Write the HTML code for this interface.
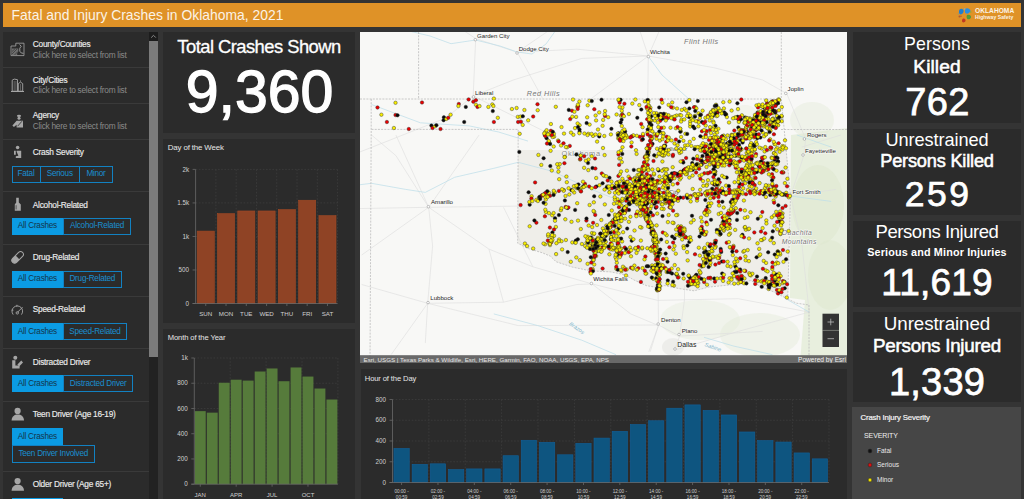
<!DOCTYPE html><html><head><meta charset="utf-8"><style>
html,body{margin:0;padding:0;}
body{width:1024px;height:499px;overflow:hidden;position:relative;background:#343434;font-family:"Liberation Sans", sans-serif;}
.t{position:absolute;white-space:nowrap;}
.r{position:absolute;}
svg{position:absolute;}
.dy{fill:#f7ed00}.dr{fill:#ea0000}.dk{fill:#0a0a0a}
</style></head><body>
<div class="r" style="left:0px;top:0px;width:1024px;height:3px;background:#333333;"></div>
<div class="r" style="left:3px;top:3px;width:1018px;height:24px;background:#df9227;"></div>
<div class="t" style="left:11.60px;top:8.83px;font-size:13.9px;line-height:13.9px;color:#fbf3e6;font-weight:normal;letter-spacing:0px;">Fatal and Injury Crashes in Oklahoma, 2021</div>
<svg style="left:956px;top:6px" width="18" height="18" viewBox="0 0 18 18"><path d="M3 5 C3.5 2.5 6 2 7.5 4 C8 6 7 8 5 8.5 C3.5 8.5 2.5 7 3 5Z" fill="#1e7fd0"/><path d="M9 4 C10 1.5 13 2 14.5 4.5 C14 7 12 8 10 7.5 C9 7 8.8 5.5 9 4Z" fill="#2a8ee0"/><path d="M1.5 7.5 l1.2 0.3 l-0.3 1 z" fill="#3a9ae0"/><path d="M11 9 C13 8 15.5 9.5 15 11.5 C14 13.5 12 14 11 12.5 C10.5 11.5 10.5 10 11 9Z" fill="#4f9a3a"/><path d="M6.5 13 C8 12 10 13 9.5 15 C9 16.5 7 17 6.2 15.8 C5.8 15 6 13.8 6.5 13Z" fill="#c03a22"/><circle cx="3.5" cy="10.5" r="1" fill="#b05a30"/><circle cx="5" cy="10.3" r="0.7" fill="#b05a30"/><circle cx="8.5" cy="3" r="0.8" fill="#6ab0e0"/><circle cx="14.8" cy="6" r="0.8" fill="#7ab040"/></svg>
<div class="t" style="left:975.00px;top:8.21px;font-size:6.6px;line-height:6.6px;color:#fbf3e6;font-weight:bold;letter-spacing:0.05px;">OKLAHOMA</div>
<div class="t" style="left:975.00px;top:14.98px;font-size:5.1px;line-height:5.1px;color:#fbf3e6;font-weight:bold;letter-spacing:0.05px;">Highway Safety</div>
<div class="r" style="left:3px;top:32px;width:155px;height:467px;background:#2b2b2b;"></div>
<div class="r" style="left:163px;top:32px;width:192px;height:101px;background:#2b2b2b;"></div>
<div class="r" style="left:163px;top:139px;width:192px;height:184px;background:#2b2b2b;"></div>
<div class="r" style="left:163px;top:329px;width:192px;height:170px;background:#2b2b2b;"></div>
<div class="r" style="left:361px;top:369px;width:486px;height:130px;background:#2b2b2b;"></div>
<div class="r" style="left:853px;top:32px;width:168px;height:91px;background:#2b2b2b;"></div>
<div class="r" style="left:853px;top:129px;width:168px;height:86px;background:#2b2b2b;"></div>
<div class="r" style="left:853px;top:221px;width:168px;height:86px;background:#2b2b2b;"></div>
<div class="r" style="left:853px;top:312px;width:168px;height:90px;background:#2b2b2b;"></div>
<div class="r" style="left:852px;top:407px;width:169px;height:92px;background:#464646;"></div>
<div class="r" style="left:3px;top:67px;width:146px;height:1px;background:#3a3a3a;"></div>
<div class="r" style="left:3px;top:103px;width:146px;height:1px;background:#3a3a3a;"></div>
<div class="r" style="left:3px;top:139px;width:146px;height:1px;background:#3a3a3a;"></div>
<div class="r" style="left:3px;top:191px;width:146px;height:1px;background:#3a3a3a;"></div>
<div class="r" style="left:3px;top:244px;width:146px;height:1px;background:#3a3a3a;"></div>
<div class="r" style="left:3px;top:296px;width:146px;height:1px;background:#3a3a3a;"></div>
<div class="r" style="left:3px;top:348px;width:146px;height:1px;background:#3a3a3a;"></div>
<div class="r" style="left:3px;top:401px;width:146px;height:1px;background:#3a3a3a;"></div>
<div class="r" style="left:3px;top:471px;width:146px;height:1px;background:#3a3a3a;"></div>
<div class="t" style="left:32.80px;top:40.07px;font-size:8.3px;line-height:8.3px;color:#ececec;font-weight:normal;letter-spacing:-0.25px;font-weight:500;-webkit-text-stroke:0.15px #ececec;">County/Counties</div>
<div class="t" style="left:32.80px;top:50.97px;font-size:8.3px;line-height:8.3px;color:#8a8a8a;font-weight:normal;letter-spacing:-0.26px;">Click here to select from list</div>
<div class="t" style="left:32.80px;top:75.57px;font-size:8.3px;line-height:8.3px;color:#ececec;font-weight:normal;letter-spacing:-0.25px;font-weight:500;-webkit-text-stroke:0.15px #ececec;">City/Cities</div>
<div class="t" style="left:32.80px;top:86.47px;font-size:8.3px;line-height:8.3px;color:#8a8a8a;font-weight:normal;letter-spacing:-0.26px;">Click here to select from list</div>
<div class="t" style="left:32.80px;top:111.47px;font-size:8.3px;line-height:8.3px;color:#ececec;font-weight:normal;letter-spacing:-0.25px;font-weight:500;-webkit-text-stroke:0.15px #ececec;">Agency</div>
<div class="t" style="left:32.80px;top:122.27px;font-size:8.3px;line-height:8.3px;color:#8a8a8a;font-weight:normal;letter-spacing:-0.26px;">Click here to select from list</div>
<div class="t" style="left:32.80px;top:148.27px;font-size:8.3px;line-height:8.3px;color:#ececec;font-weight:normal;letter-spacing:-0.25px;font-weight:500;-webkit-text-stroke:0.15px #ececec;">Crash Severity</div>
<div class="t" style="left:32.80px;top:200.77px;font-size:8.3px;line-height:8.3px;color:#ececec;font-weight:normal;letter-spacing:-0.25px;font-weight:500;-webkit-text-stroke:0.15px #ececec;">Alcohol-Related</div>
<div class="t" style="left:32.80px;top:252.97px;font-size:8.3px;line-height:8.3px;color:#ececec;font-weight:normal;letter-spacing:-0.25px;font-weight:500;-webkit-text-stroke:0.15px #ececec;">Drug-Related</div>
<div class="t" style="left:32.80px;top:305.37px;font-size:8.3px;line-height:8.3px;color:#ececec;font-weight:normal;letter-spacing:-0.25px;font-weight:500;-webkit-text-stroke:0.15px #ececec;">Speed-Related</div>
<div class="t" style="left:32.80px;top:357.87px;font-size:8.3px;line-height:8.3px;color:#ececec;font-weight:normal;letter-spacing:-0.25px;font-weight:500;-webkit-text-stroke:0.15px #ececec;">Distracted Driver</div>
<div class="t" style="left:32.80px;top:410.17px;font-size:8.3px;line-height:8.3px;color:#ececec;font-weight:normal;letter-spacing:-0.25px;font-weight:500;-webkit-text-stroke:0.15px #ececec;">Teen Driver (Age 16-19)</div>
<div class="t" style="left:32.80px;top:480.27px;font-size:8.3px;line-height:8.3px;color:#ececec;font-weight:normal;letter-spacing:-0.25px;font-weight:500;-webkit-text-stroke:0.15px #ececec;">Older Driver (Age 65+)</div>
<div class="r" style="left:11.5px;top:165.6px;width:27.0px;height:15.200000000000017px;border:1px solid #1281c2;"></div>
<div class="t" style="left:-274.00px;width:600px;text-align:center;top:170.16px;font-size:8.2px;line-height:8.2px;color:#1a8fd0;font-weight:normal;letter-spacing:-0.25px;">Fatal</div>
<div class="r" style="left:40px;top:165.6px;width:37.5px;height:15.200000000000017px;border:1px solid #1281c2;"></div>
<div class="t" style="left:-240.25px;width:600px;text-align:center;top:170.16px;font-size:8.2px;line-height:8.2px;color:#1a8fd0;font-weight:normal;letter-spacing:-0.25px;">Serious</div>
<div class="r" style="left:79px;top:165.6px;width:32px;height:15.200000000000017px;border:1px solid #1281c2;"></div>
<div class="t" style="left:-204.00px;width:600px;text-align:center;top:170.16px;font-size:8.2px;line-height:8.2px;color:#1a8fd0;font-weight:normal;letter-spacing:-0.25px;">Minor</div>
<div class="r" style="left:11.5px;top:218px;width:51.8px;height:17px;background:#0b9be3;"></div>
<div class="t" style="left:-262.60px;width:600px;text-align:center;top:222.46px;font-size:8.2px;line-height:8.2px;color:#14354b;font-weight:normal;letter-spacing:-0.25px;">All Crashes</div>
<div class="r" style="left:63px;top:218px;width:66px;height:15px;border:1px solid #1281c2;"></div>
<div class="t" style="left:-203.00px;width:600px;text-align:center;top:222.46px;font-size:8.2px;line-height:8.2px;color:#1a8fd0;font-weight:normal;letter-spacing:-0.25px;">Alcohol-Related</div>
<div class="r" style="left:11.5px;top:270.5px;width:51.8px;height:17.19999999999999px;background:#0b9be3;"></div>
<div class="t" style="left:-262.60px;width:600px;text-align:center;top:275.06px;font-size:8.2px;line-height:8.2px;color:#14354b;font-weight:normal;letter-spacing:-0.25px;">All Crashes</div>
<div class="r" style="left:63px;top:270.5px;width:56.599999999999994px;height:15.199999999999989px;border:1px solid #1281c2;"></div>
<div class="t" style="left:-207.70px;width:600px;text-align:center;top:275.06px;font-size:8.2px;line-height:8.2px;color:#1a8fd0;font-weight:normal;letter-spacing:-0.25px;">Drug-Related</div>
<div class="r" style="left:11.5px;top:323.4px;width:51.8px;height:16.400000000000034px;background:#0b9be3;"></div>
<div class="t" style="left:-262.60px;width:600px;text-align:center;top:327.56px;font-size:8.2px;line-height:8.2px;color:#14354b;font-weight:normal;letter-spacing:-0.25px;">All Crashes</div>
<div class="r" style="left:63px;top:323.4px;width:61.900000000000006px;height:14.400000000000034px;border:1px solid #1281c2;"></div>
<div class="t" style="left:-205.05px;width:600px;text-align:center;top:327.56px;font-size:8.2px;line-height:8.2px;color:#1a8fd0;font-weight:normal;letter-spacing:-0.25px;">Speed-Related</div>
<div class="r" style="left:11.5px;top:375.4px;width:51.8px;height:17.0px;background:#0b9be3;"></div>
<div class="t" style="left:-262.60px;width:600px;text-align:center;top:379.86px;font-size:8.2px;line-height:8.2px;color:#14354b;font-weight:normal;letter-spacing:-0.25px;">All Crashes</div>
<div class="r" style="left:63px;top:375.4px;width:68.4px;height:15.0px;border:1px solid #1281c2;"></div>
<div class="t" style="left:-201.80px;width:600px;text-align:center;top:379.86px;font-size:8.2px;line-height:8.2px;color:#1a8fd0;font-weight:normal;letter-spacing:-0.25px;">Distracted Driver</div>
<div class="r" style="left:11.9px;top:428.2px;width:50.800000000000004px;height:16.80000000000001px;background:#0b9be3;"></div>
<div class="t" style="left:-262.70px;width:600px;text-align:center;top:432.56px;font-size:8.2px;line-height:8.2px;color:#14354b;font-weight:normal;letter-spacing:-0.25px;">All Crashes</div>
<div class="r" style="left:11.9px;top:445px;width:80.69999999999999px;height:15.5px;border:1px solid #1281c2;"></div>
<div class="t" style="left:-246.75px;width:600px;text-align:center;top:449.71px;font-size:8.2px;line-height:8.2px;color:#1a8fd0;font-weight:normal;letter-spacing:-0.25px;">Teen Driver Involved</div>
<div class="r" style="left:11.9px;top:497.8px;width:50.800000000000004px;height:17.19999999999999px;background:#0b9be3;"></div>
<div class="t" style="left:-262.70px;width:600px;text-align:center;top:502.36px;font-size:8.2px;line-height:8.2px;color:#14354b;font-weight:normal;letter-spacing:-0.25px;">All Crashes</div>
<div class="r" style="left:149px;top:32px;width:9px;height:467px;background:#222222;"></div>
<div class="r" style="left:149px;top:32px;width:9px;height:9px;background:#1c1c1c;"></div>
<svg style="left:149px;top:32px" width="9" height="9"><path d="M2.2 5.6 L4.5 3.3 L6.8 5.6" stroke="#8a8a8a" stroke-width="1" fill="none"/></svg>
<div class="r" style="left:149px;top:41px;width:9px;height:316px;background:#7b7b7b;"></div>
<svg style="left:0;top:0" width="30" height="499" viewBox="0 0 30 499"><path d="M11 46 H15.8 V43.2 H24 V55.6 H11 Z" fill="none" stroke="#a6a6a6" stroke-width="0.8"/><path d="M12 48.6 H18.3 V51.5 L17.2 53.2 V54.9 H12 Z" fill="#a6a6a6" opacity="0.55"/><path d="M12 54 L17 49 M12 51.5 L15 48.8 M14.5 55 L18 51.5" stroke="#2b2b2b" stroke-width="0.6"/><path d="M19.6 44.5 L21.2 46.3 L19.8 48.2 V51.2 L21.3 53 L23.5 53.3" fill="none" stroke="#a6a6a6" stroke-width="0.9"/><path d="M12.2 91.2 V80.2 L14.2 79.1 L17.5 79.7 V91.2 Z" fill="none" stroke="#a6a6a6" stroke-width="0.9"/><path d="M18.3 91.2 V83.6 L20.5 82.1 L22.7 83.6 V91.2 Z" fill="none" stroke="#a6a6a6" stroke-width="0.9"/><path d="M20.5 80 V82 M14.2 81 V90.5 M15.9 81 V90.5 M20.5 84 V90.5" stroke="#a6a6a6" stroke-width="0.6" opacity="0.7"/><path d="M11 91.5 H24" stroke="#a6a6a6" stroke-width="1"/><ellipse cx="19" cy="115.9" rx="2.1" ry="1.1" fill="#a6a6a6"/><circle cx="19" cy="118.3" r="1.5" fill="#a6a6a6"/><path d="M12.4 125.6 L16.6 120.8 H23 V127.6 H16.6 V124.8 L13.9 127 Z" fill="#a6a6a6"/><path d="M22 121.2 L17.6 126.2" stroke="#2b2b2b" stroke-width="0.8"/><circle cx="17.6" cy="147.5" r="1.8" fill="#a6a6a6"/><path d="M14 150.8 H15.8 V154.8 H14 Z M16.6 150.8 H21.2 V158 H15.8 V156.2 L18.4 155.8 L17.4 153.5 L16.6 151.6 Z" fill="#a6a6a6"/><path d="M16.2 197.8 H18.8 V202.6 L20.8 204.6 V210.8 H14.8 V204.6 L16.2 202.6 Z" fill="#a6a6a6"/><rect x="15.6" y="205.2" width="1" height="4.2" fill="#555"/><g transform="rotate(-45 17.6 257.4)"><rect x="10.6" y="254.6" width="14" height="5.6" rx="2.8" fill="none" stroke="#a6a6a6" stroke-width="1"/><path d="M13.4 254.6 H17.6 V260.2 H13.4 A2.8 2.8 0 0 1 13.4 254.6 Z" fill="#a6a6a6"/></g><path d="M13.2 314.6 A5.3 5.3 0 1 1 21.4 314.6" fill="none" stroke="#a6a6a6" stroke-width="0.9"/><path d="M16.9 304.8 V306.6 M11.6 310.2 H13.4 M17.4 312.4 L22.6 307.2" stroke="#a6a6a6" stroke-width="0.9"/><circle cx="17.3" cy="312.9" r="1.2" fill="none" stroke="#a6a6a6" stroke-width="0.9"/><circle cx="15.3" cy="357.7" r="2" fill="#a6a6a6"/><path d="M12.2 360.2 H15.4 V365.4 H19.6 V368.4 H12.2 Z" fill="#a6a6a6"/><path d="M17.4 364.6 L21.3 360.6 L23 362.4 L19.1 366.4 Z" fill="#a6a6a6"/><circle cx="17.6" cy="410.9" r="3.1" fill="#a6a6a6"/><path d="M11.6 420.6 C11.8 416.4 14.5 414.6 17.8 414.6 C21.1 414.6 23.8 416.4 24 420.6 Z" fill="#a6a6a6"/><circle cx="17.6" cy="481.1" r="3.1" fill="#a6a6a6"/><path d="M11.6 490.8 C11.8 486.6 14.5 484.8 17.8 484.8 C21.1 484.8 23.8 486.6 24 490.8 Z" fill="#a6a6a6"/></svg>
<svg style="left:360px;top:32px" width="487" height="331" viewBox="360 32 487 331"><rect x="360" y="32" width="487" height="331" fill="#f8f8f6"/><path d="M791 135 L847 128 V363 H800 L805 300 L790 298 Z" fill="#e3ecd6" opacity="0.75"/><ellipse cx="818" cy="205" rx="26" ry="40" fill="#dfe8d0" opacity="0.6"/><ellipse cx="830" cy="275" rx="22" ry="35" fill="#dfe8d0" opacity="0.55"/><ellipse cx="812" cy="120" rx="22" ry="18" fill="#dfe8d0" opacity="0.35"/><ellipse cx="775" cy="240" rx="14" ry="40" fill="#dfe8d0" opacity="0.45"/><ellipse cx="700" cy="320" rx="40" ry="20" fill="#dfe8d0" opacity="0.3"/><ellipse cx="760" cy="335" rx="40" ry="22" fill="#dfe8d0" opacity="0.35"/><ellipse cx="745" cy="120" rx="15" ry="15" fill="#dfe8d0" opacity="0.25"/><ellipse cx="673" cy="347" rx="11" ry="9" fill="#e6e6e3" opacity="0.6"/><clipPath id="okc"><rect x="360" y="150" width="500" height="300"/></clipPath><polygon points="371.5,99.0 781.3,99.0 790.5,196.0 787.7,299.0 774.5,292.2 761.3,287.1 751.0,280.5 736.4,284.2 723.2,285.6 708.6,287.1 694.0,290.8 679.3,288.6 664.6,285.6 657.0,287.5 646.3,285.6 634.0,280.0 624.4,274.6 610.7,271.9 597.0,271.2 586.0,269.9 572.4,267.1 556.0,261.7 550.5,256.2 542.3,252.8 528.7,248.7 517.7,243.2 518.2,129.4 371.5,129.4" fill="#efeee9" clip-path="url(#okc)"/><polyline points="322.6,209.1 361.7,208.5 428.7,207.3 518.2,206.1" fill="none" stroke="#dedede" stroke-width="0.65"/><polyline points="428.7,207.3 432.6,246.1 427.7,303.3 425.3,343.1" fill="none" stroke="#dedede" stroke-width="0.65"/><polyline points="395.9,135.0 428.7,207.3 488.9,249.1 532.9,266.8 592.0,283.9 630.7,313.9 658.5,325.6 648.8,351.8" fill="none" stroke="#dedede" stroke-width="0.65"/><polyline points="428.7,207.3 395.9,155.6 371.5,135.0" fill="none" stroke="#dedede" stroke-width="0.65"/><polyline points="356.8,153.2 445.8,118.0 473.2,96.0 513.3,80.0 581.8,58.4 648.3,56.0" fill="none" stroke="#dedede" stroke-width="0.65"/><polyline points="475.7,38.6 517.2,52.2 576.9,49.2 648.3,56.0" fill="none" stroke="#dedede" stroke-width="0.65"/><polyline points="475.7,38.6 473.2,96.0" fill="none" stroke="#dedede" stroke-width="0.65"/><polyline points="664.9,18.1 648.3,56.0 647.8,98.4" fill="none" stroke="#dedede" stroke-width="0.65"/><polyline points="635.6,18.1 648.3,56.0" fill="none" stroke="#dedede" stroke-width="0.65"/><polyline points="648.3,56.0 713.8,67.7 762.7,80.0 786.7,93.5" fill="none" stroke="#dedede" stroke-width="0.65"/><polyline points="427.7,303.3 503.5,302.2 576.9,284.5 592.0,283.9 657.6,300.4 684.5,299.8 738.2,298.7 809.2,312.1" fill="none" stroke="#dedede" stroke-width="0.65"/><polyline points="427.7,303.3 518.2,325.6 658.5,325.0 679.6,336.1 762.7,331.4" fill="none" stroke="#dedede" stroke-width="0.65"/><polyline points="658.1,291.0 658.5,325.0 650.2,351.8" fill="none" stroke="#dedede" stroke-width="0.65"/><polyline points="684.5,285.7 684.5,299.8 679.6,336.1 674.7,350.1" fill="none" stroke="#dedede" stroke-width="0.65"/><polyline points="674.7,350.1 738.2,331.4 809.2,312.1" fill="none" stroke="#dedede" stroke-width="0.65"/><polyline points="786.7,93.5 805.7,139.2 803.8,155.6 790.6,196.0 801.8,243.1 809.2,312.1" fill="none" stroke="#dedede" stroke-width="0.65"/><polyline points="790.6,196.0 836.0,189.4" fill="none" stroke="#dedede" stroke-width="0.65"/><polyline points="801.8,147.1 840.9,135.0" fill="none" stroke="#dedede" stroke-width="0.65"/><polyline points="473.2,96.0 548.0,133.2" fill="none" stroke="#dedede" stroke-width="0.65"/><polyline points="542.6,98.4 517.2,52.2" fill="none" stroke="#dedede" stroke-width="0.65"/><polyline points="591.5,98.4 648.3,56.0" fill="none" stroke="#dedede" stroke-width="0.65"/><polyline points="567.1,18.1 517.2,52.2" fill="none" stroke="#dedede" stroke-width="0.65"/><polyline points="444.9,18.1 475.7,38.6" fill="none" stroke="#dedede" stroke-width="0.65"/><polyline points="427.7,303.3 391.1,354.7" fill="none" stroke="#dedede" stroke-width="0.65"/><polyline points="427.7,303.3 361.7,284.5" fill="none" stroke="#dedede" stroke-width="0.65"/><polyline points="428.7,207.3 361.7,255.0" fill="none" stroke="#dedede" stroke-width="0.65"/><polyline points="488.9,249.1 503.5,302.2" fill="none" stroke="#dedede" stroke-width="0.65"/><polyline points="532.9,266.8 503.5,207.3" fill="none" stroke="#dedede" stroke-width="0.65"/><polyline points="479.1,135.0 428.7,207.3" fill="none" stroke="#dedede" stroke-width="0.65"/><polyline points="405,30 430,36 451,43.7 475.5,40 500,46 517,52 532,54 546,44 556,30" fill="none" stroke="#bfdfea" stroke-width="0.75"/><polyline points="648,56 662,75 690,100 705,125 718,150 745,172" fill="none" stroke="#bfdfea" stroke-width="0.75"/><polyline points="322.6,189.4 371.5,183.3 405.7,189.4 425.3,192.4 454.6,177.3 493.8,168.3 518.2,162.3 552.4,171.3 591.5,189.4 635.6,207.3" fill="none" stroke="#bfdfea" stroke-width="0.75"/><polyline points="371.5,104.5 420.4,122.8 469.3,125.9 498.6,132.0 528.0,141.1" fill="none" stroke="#bfdfea" stroke-width="0.75"/><polyline points="748.0,174.3 782.3,195.4 790.6,196.0 831.2,201.4" fill="none" stroke="#bfdfea" stroke-width="0.75"/><polyline points="493.8,313.9 537.8,325.6 581.8,340.2 616.0,354.7" fill="none" stroke="#bfdfea" stroke-width="0.75"/><polyline points="704.0,337.3 733.4,346.0 772.5,354.7" fill="none" stroke="#bfdfea" stroke-width="0.75"/><polyline points="809.2,312.1 787.6,299.8" fill="none" stroke="#bfdfea" stroke-width="0.75"/><polyline points="796.9,135.0 831.2,147.1" fill="none" stroke="#bfdfea" stroke-width="0.75"/><polyline points="360,99 781,99" stroke="#bdbdbd" stroke-width="0.8" stroke-dasharray="2 1.2" fill="none"/><polyline points="371.2,99 371.2,129.4 370,363" stroke="#bdbdbd" stroke-width="0.8" stroke-dasharray="2 1.2" fill="none"/><polyline points="418.6,32 418.6,99" stroke="#bdbdbd" stroke-width="0.8" stroke-dasharray="2 1.2" fill="none"/><polyline points="371.5,129.4 518.2,129.4 517.7,243.2" stroke="#bdbdbd" stroke-width="0.8" stroke-dasharray="2 1.2" fill="none"/><polyline points="781.3,32 781.3,99 790.5,196 787.7,299" stroke="#bdbdbd" stroke-width="0.8" stroke-dasharray="2 1.2" fill="none"/><polyline points="781,129.5 847,129.5" stroke="#bdbdbd" stroke-width="0.8" stroke-dasharray="2 1.2" fill="none"/><polyline points="787.7,299.0 774.5,292.2 761.3,287.1 751.0,280.5 736.4,284.2 723.2,285.6 708.6,287.1 694.0,290.8 679.3,288.6 664.6,285.6 657.0,287.5 646.3,285.6 634.0,280.0 624.4,274.6 610.7,271.9 597.0,271.2 586.0,269.9 572.4,267.1 556.0,261.7 550.5,256.2 542.3,252.8 528.7,248.7 517.7,243.2" stroke="#bdbdbd" stroke-width="0.8" stroke-dasharray="2 1.2" fill="none"/><polyline points="787.7,299 796.5,303.2 809,305 809,363" stroke="#bdbdbd" stroke-width="0.8" stroke-dasharray="2 1.2" fill="none"/><circle cx="475.3" cy="39.7" r="1.3" fill="#fff" stroke="#999" stroke-width="0.6"/><text x="477" y="37.7" font-size="6.1" fill="#262626" font-family="Liberation Sans"  letter-spacing="0" font-weight="normal" stroke="#f8f8f6" stroke-width="1.2" paint-order="stroke" stroke-linejoin="round">Garden City</text><circle cx="517" cy="53" r="1.3" fill="#fff" stroke="#999" stroke-width="0.6"/><text x="518.7" y="51.0" font-size="6.1" fill="#262626" font-family="Liberation Sans"  letter-spacing="0" font-weight="normal" stroke="#f8f8f6" stroke-width="1.2" paint-order="stroke" stroke-linejoin="round">Dodge City</text><circle cx="473.5" cy="96.9" r="1.3" fill="#fff" stroke="#999" stroke-width="0.6"/><text x="475" y="94.5" font-size="6.1" fill="#262626" font-family="Liberation Sans"  letter-spacing="0" font-weight="normal" stroke="#f8f8f6" stroke-width="1.2" paint-order="stroke" stroke-linejoin="round">Liberal</text><circle cx="648.4" cy="56.6" r="1.3" fill="#fff" stroke="#999" stroke-width="0.6"/><text x="650" y="54.2" font-size="6.1" fill="#262626" font-family="Liberation Sans"  letter-spacing="0" font-weight="normal" stroke="#f8f8f6" stroke-width="1.2" paint-order="stroke" stroke-linejoin="round">Wichita</text><circle cx="785.8" cy="93.4" r="1.3" fill="#fff" stroke="#999" stroke-width="0.6"/><text x="787.6" y="91.4" font-size="6.1" fill="#262626" font-family="Liberation Sans"  letter-spacing="0" font-weight="normal" stroke="#f8f8f6" stroke-width="1.2" paint-order="stroke" stroke-linejoin="round">Joplin</text><circle cx="804.4" cy="139" r="1.3" fill="#fff" stroke="#999" stroke-width="0.6"/><text x="806.9" y="136.9" font-size="6.1" fill="#262626" font-family="Liberation Sans"  letter-spacing="0" font-weight="normal" stroke="#f8f8f6" stroke-width="1.2" paint-order="stroke" stroke-linejoin="round">Rogers</text><circle cx="803" cy="155" r="1.3" fill="#fff" stroke="#999" stroke-width="0.6"/><text x="805" y="153.4" font-size="6.1" fill="#262626" font-family="Liberation Sans"  letter-spacing="0" font-weight="normal" stroke="#f8f8f6" stroke-width="1.2" paint-order="stroke" stroke-linejoin="round">Fayetteville</text><circle cx="790" cy="195" r="1.3" fill="#fff" stroke="#999" stroke-width="0.6"/><text x="792.5" y="193.9" font-size="6.1" fill="#262626" font-family="Liberation Sans"  letter-spacing="0" font-weight="normal" stroke="#f8f8f6" stroke-width="1.2" paint-order="stroke" stroke-linejoin="round">Fort Smith</text><circle cx="428.4" cy="206.7" r="1.3" fill="#fff" stroke="#999" stroke-width="0.6"/><text x="431" y="204.4" font-size="6.1" fill="#262626" font-family="Liberation Sans"  letter-spacing="0" font-weight="normal" stroke="#f8f8f6" stroke-width="1.2" paint-order="stroke" stroke-linejoin="round">Amarillo</text><circle cx="428" cy="302.6" r="1.3" fill="#fff" stroke="#999" stroke-width="0.6"/><text x="430.3" y="299.9" font-size="6.1" fill="#262626" font-family="Liberation Sans"  letter-spacing="0" font-weight="normal" stroke="#f8f8f6" stroke-width="1.2" paint-order="stroke" stroke-linejoin="round">Lubbock</text><circle cx="591.4" cy="283.5" r="1.3" fill="#fff" stroke="#999" stroke-width="0.6"/><text x="593.2" y="281.2" font-size="6.1" fill="#262626" font-family="Liberation Sans"  letter-spacing="0" font-weight="normal" stroke="#f8f8f6" stroke-width="1.2" paint-order="stroke" stroke-linejoin="round">Wichita Falls</text><circle cx="658.2" cy="324" r="1.3" fill="#fff" stroke="#999" stroke-width="0.6"/><text x="661" y="321.6" font-size="6.1" fill="#262626" font-family="Liberation Sans"  letter-spacing="0" font-weight="normal" stroke="#f8f8f6" stroke-width="1.2" paint-order="stroke" stroke-linejoin="round">Denton</text><circle cx="679" cy="334.5" r="1.3" fill="#fff" stroke="#999" stroke-width="0.6"/><text x="681.8" y="333.0" font-size="6.1" fill="#262626" font-family="Liberation Sans"  letter-spacing="0" font-weight="normal" stroke="#f8f8f6" stroke-width="1.2" paint-order="stroke" stroke-linejoin="round">Plano</text><circle cx="675" cy="349" r="1.3" fill="#fff" stroke="#999" stroke-width="0.6"/><text x="677.2" y="347.0" font-size="6.9" fill="#262626" font-family="Liberation Sans"  letter-spacing="0" font-weight="normal" stroke="#f8f8f6" stroke-width="1.2" paint-order="stroke" stroke-linejoin="round">Dallas</text><text x="526.8" y="96.0" font-size="7.2" fill="#777" font-family="Liberation Sans" font-style="italic" letter-spacing="0.5" font-weight="normal" stroke="#f8f8f6" stroke-width="1.2" paint-order="stroke" stroke-linejoin="round">Red Hills</text><text x="684" y="44.1" font-size="7.2" fill="#777" font-family="Liberation Sans" font-style="italic" letter-spacing="0.5" font-weight="normal" stroke="#f8f8f6" stroke-width="1.2" paint-order="stroke" stroke-linejoin="round">Flint Hills</text><text x="781.8" y="235.2" font-size="6.8" fill="#777" font-family="Liberation Sans" font-style="italic" letter-spacing="0.4" font-weight="normal" stroke="#f8f8f6" stroke-width="1.2" paint-order="stroke" stroke-linejoin="round">Ouachita</text><text x="781.8" y="243.6" font-size="6.8" fill="#777" font-family="Liberation Sans" font-style="italic" letter-spacing="0.4" font-weight="normal" stroke="#f8f8f6" stroke-width="1.2" paint-order="stroke" stroke-linejoin="round">Mountains</text><text x="561.5" y="156.2" font-size="7.4" fill="#888" font-family="Liberation Sans"  letter-spacing="0.7" font-weight="normal" stroke="#f8f8f6" stroke-width="1.2" paint-order="stroke" stroke-linejoin="round">Oklahoma</text><text x="663" y="150.9" font-size="6.0" fill="#555" font-family="Liberation Sans"  letter-spacing="0" font-weight="normal" stroke="#f8f8f6" stroke-width="1.2" paint-order="stroke" stroke-linejoin="round">Stillwater</text><text x="640" y="194.2" font-size="6.0" fill="#555" font-family="Liberation Sans"  letter-spacing="0" font-weight="normal" stroke="#f8f8f6" stroke-width="1.2" paint-order="stroke" stroke-linejoin="round">Oklahoma City</text><text x="570" y="325.0" font-size="5.5" fill="#7fb6cc" font-family="Liberation Sans" font-style="italic" letter-spacing="0" font-weight="normal" stroke="#f8f8f6" stroke-width="1.2" paint-order="stroke" stroke-linejoin="round" transform="rotate(35 570 323)">Brazos</text><text x="705" y="346.0" font-size="5.5" fill="#7fb6cc" font-family="Liberation Sans" font-style="italic" letter-spacing="0" font-weight="normal" stroke="#f8f8f6" stroke-width="1.2" paint-order="stroke" stroke-linejoin="round" transform="rotate(20 705 344)">Sabine</text><g stroke="#2a2a2a" stroke-width="0.42"><circle cx="377.5" cy="107.5" r="1.75" class="dr"/><circle cx="381.4" cy="114.7" r="1.75" class="dy"/><circle cx="386.9" cy="122.0" r="1.75" class="dr"/><circle cx="393.9" cy="128.0" r="1.75" class="dy"/><circle cx="395.5" cy="102.8" r="1.75" class="dy"/><circle cx="395.5" cy="115.0" r="1.75" class="dr"/><circle cx="397.5" cy="115.3" r="1.75" class="dk"/><circle cx="408.8" cy="129.0" r="1.75" class="dr"/><circle cx="422.0" cy="102.5" r="1.75" class="dr"/><circle cx="431.4" cy="125.6" r="1.75" class="dk"/><circle cx="432.5" cy="128.0" r="1.75" class="dr"/><circle cx="435.0" cy="126.3" r="1.75" class="dy"/><circle cx="436.4" cy="125.2" r="1.75" class="dk"/><circle cx="440.5" cy="129.0" r="1.75" class="dr"/><circle cx="443.9" cy="117.3" r="1.75" class="dk"/><circle cx="443.6" cy="120.2" r="1.75" class="dk"/><circle cx="446.3" cy="118.9" r="1.75" class="dy"/><circle cx="448.3" cy="117.8" r="1.75" class="dr"/><circle cx="450.6" cy="114.7" r="1.75" class="dy"/><circle cx="458.8" cy="104.0" r="1.75" class="dr"/><circle cx="458.4" cy="106.0" r="1.75" class="dy"/><circle cx="465.8" cy="106.9" r="1.75" class="dk"/><circle cx="464.2" cy="122.0" r="1.75" class="dk"/><circle cx="468.6" cy="99.4" r="1.75" class="dr"/><circle cx="473.3" cy="101.7" r="1.75" class="dr"/><circle cx="475.9" cy="100.2" r="1.75" class="dr"/><circle cx="475.9" cy="104.8" r="1.75" class="dy"/><circle cx="477.5" cy="106.9" r="1.75" class="dr"/><circle cx="479.5" cy="106.1" r="1.75" class="dy"/><circle cx="488.4" cy="106.9" r="1.75" class="dy"/><circle cx="492.3" cy="104.4" r="1.75" class="dy"/><circle cx="493.4" cy="106.0" r="1.75" class="dy"/><circle cx="493.9" cy="98.6" r="1.75" class="dy"/><circle cx="492.8" cy="111.1" r="1.75" class="dk"/><circle cx="497.8" cy="117.8" r="1.75" class="dy"/><circle cx="493.9" cy="122.0" r="1.75" class="dr"/><circle cx="511.9" cy="109.0" r="1.75" class="dy"/><circle cx="516.6" cy="108.0" r="1.75" class="dy"/><circle cx="524.4" cy="110.0" r="1.75" class="dy"/><circle cx="517.8" cy="116.9" r="1.75" class="dy"/><circle cx="520.5" cy="116.6" r="1.75" class="dy"/><circle cx="522.8" cy="116.3" r="1.75" class="dk"/><circle cx="518.1" cy="122.0" r="1.75" class="dr"/><circle cx="520.9" cy="121.7" r="1.75" class="dr"/><circle cx="519.7" cy="133.8" r="1.75" class="dy"/><circle cx="703.2" cy="137.4" r="1.75" class="dy"/><circle cx="621.2" cy="133.1" r="1.75" class="dy"/><circle cx="647.7" cy="129.5" r="1.75" class="dk"/><circle cx="682.7" cy="233.7" r="1.75" class="dy"/><circle cx="686.9" cy="172.1" r="1.75" class="dy"/><circle cx="638.9" cy="196.4" r="1.75" class="dy"/><circle cx="653.7" cy="241.0" r="1.75" class="dy"/><circle cx="777.2" cy="229.3" r="1.75" class="dy"/><circle cx="563.9" cy="190.1" r="1.75" class="dy"/><circle cx="718.4" cy="195.4" r="1.75" class="dr"/><circle cx="617.8" cy="185.1" r="1.75" class="dy"/><circle cx="779.0" cy="273.6" r="1.75" class="dy"/><circle cx="622.5" cy="147.2" r="1.75" class="dy"/><circle cx="618.6" cy="187.0" r="1.75" class="dr"/><circle cx="641.6" cy="183.9" r="1.75" class="dr"/><circle cx="780.3" cy="148.7" r="1.75" class="dy"/><circle cx="640.0" cy="181.8" r="1.75" class="dk"/><circle cx="722.7" cy="154.8" r="1.75" class="dk"/><circle cx="541.3" cy="195.9" r="1.75" class="dr"/><circle cx="555.9" cy="226.9" r="1.75" class="dy"/><circle cx="687.2" cy="168.1" r="1.75" class="dy"/><circle cx="661.9" cy="150.2" r="1.75" class="dy"/><circle cx="651.6" cy="181.1" r="1.75" class="dy"/><circle cx="655.1" cy="248.7" r="1.75" class="dy"/><circle cx="588.3" cy="133.8" r="1.75" class="dy"/><circle cx="714.1" cy="148.7" r="1.75" class="dy"/><circle cx="635.6" cy="192.0" r="1.75" class="dy"/><circle cx="680.8" cy="131.3" r="1.75" class="dy"/><circle cx="641.5" cy="169.2" r="1.75" class="dy"/><circle cx="660.0" cy="271.3" r="1.75" class="dk"/><circle cx="651.5" cy="233.9" r="1.75" class="dy"/><circle cx="638.2" cy="268.3" r="1.75" class="dr"/><circle cx="743.3" cy="251.7" r="1.75" class="dy"/><circle cx="783.0" cy="281.1" r="1.75" class="dr"/><circle cx="644.9" cy="163.3" r="1.75" class="dy"/><circle cx="646.1" cy="198.6" r="1.75" class="dy"/><circle cx="756.6" cy="257.3" r="1.75" class="dk"/><circle cx="720.7" cy="248.9" r="1.75" class="dk"/><circle cx="726.7" cy="177.6" r="1.75" class="dk"/><circle cx="682.8" cy="161.1" r="1.75" class="dr"/><circle cx="746.0" cy="167.3" r="1.75" class="dy"/><circle cx="658.9" cy="273.1" r="1.75" class="dy"/><circle cx="715.7" cy="149.0" r="1.75" class="dy"/><circle cx="705.4" cy="117.8" r="1.75" class="dy"/><circle cx="773.9" cy="134.3" r="1.75" class="dr"/><circle cx="638.8" cy="188.1" r="1.75" class="dy"/><circle cx="724.7" cy="155.7" r="1.75" class="dk"/><circle cx="625.2" cy="207.2" r="1.75" class="dy"/><circle cx="704.1" cy="252.5" r="1.75" class="dk"/><circle cx="658.6" cy="170.4" r="1.75" class="dk"/><circle cx="655.9" cy="184.0" r="1.75" class="dy"/><circle cx="595.6" cy="246.9" r="1.75" class="dy"/><circle cx="686.6" cy="195.9" r="1.75" class="dk"/><circle cx="632.2" cy="199.7" r="1.75" class="dy"/><circle cx="712.3" cy="149.8" r="1.75" class="dk"/><circle cx="747.6" cy="137.1" r="1.75" class="dy"/><circle cx="658.9" cy="281.5" r="1.75" class="dy"/><circle cx="642.1" cy="248.5" r="1.75" class="dy"/><circle cx="645.5" cy="191.4" r="1.75" class="dr"/><circle cx="545.8" cy="132.7" r="1.75" class="dy"/><circle cx="639.4" cy="187.4" r="1.75" class="dy"/><circle cx="721.6" cy="150.9" r="1.75" class="dy"/><circle cx="616.2" cy="186.5" r="1.75" class="dk"/><circle cx="636.9" cy="179.6" r="1.75" class="dr"/><circle cx="738.5" cy="161.8" r="1.75" class="dy"/><circle cx="748.2" cy="134.9" r="1.75" class="dy"/><circle cx="641.7" cy="190.0" r="1.75" class="dy"/><circle cx="763.8" cy="107.3" r="1.75" class="dy"/><circle cx="535.1" cy="182.4" r="1.75" class="dr"/><circle cx="671.9" cy="178.9" r="1.75" class="dy"/><circle cx="743.9" cy="200.5" r="1.75" class="dy"/><circle cx="690.2" cy="121.5" r="1.75" class="dy"/><circle cx="695.2" cy="107.1" r="1.75" class="dy"/><circle cx="756.0" cy="154.1" r="1.75" class="dr"/><circle cx="773.9" cy="153.2" r="1.75" class="dy"/><circle cx="646.1" cy="202.0" r="1.75" class="dr"/><circle cx="761.1" cy="281.4" r="1.75" class="dy"/><circle cx="643.0" cy="202.6" r="1.75" class="dy"/><circle cx="634.8" cy="177.9" r="1.75" class="dy"/><circle cx="592.6" cy="269.0" r="1.75" class="dy"/><circle cx="723.3" cy="147.8" r="1.75" class="dk"/><circle cx="733.9" cy="200.9" r="1.75" class="dr"/><circle cx="660.0" cy="149.9" r="1.75" class="dy"/><circle cx="734.7" cy="271.9" r="1.75" class="dk"/><circle cx="605.1" cy="111.0" r="1.75" class="dy"/><circle cx="618.8" cy="100.4" r="1.75" class="dy"/><circle cx="707.2" cy="192.8" r="1.75" class="dk"/><circle cx="710.0" cy="130.0" r="1.75" class="dr"/><circle cx="760.1" cy="167.6" r="1.75" class="dy"/><circle cx="625.5" cy="135.8" r="1.75" class="dk"/><circle cx="688.4" cy="113.8" r="1.75" class="dy"/><circle cx="740.8" cy="130.1" r="1.75" class="dy"/><circle cx="663.7" cy="192.7" r="1.75" class="dr"/><circle cx="683.5" cy="246.2" r="1.75" class="dy"/><circle cx="654.5" cy="134.1" r="1.75" class="dy"/><circle cx="752.5" cy="180.6" r="1.75" class="dy"/><circle cx="650.4" cy="107.8" r="1.75" class="dy"/><circle cx="609.4" cy="254.3" r="1.75" class="dy"/><circle cx="731.3" cy="278.3" r="1.75" class="dy"/><circle cx="625.3" cy="189.9" r="1.75" class="dy"/><circle cx="765.9" cy="270.5" r="1.75" class="dy"/><circle cx="641.3" cy="180.4" r="1.75" class="dy"/><circle cx="650.6" cy="200.0" r="1.75" class="dk"/><circle cx="723.7" cy="135.6" r="1.75" class="dy"/><circle cx="649.6" cy="109.6" r="1.75" class="dy"/><circle cx="720.0" cy="149.6" r="1.75" class="dk"/><circle cx="782.9" cy="283.1" r="1.75" class="dy"/><circle cx="714.6" cy="180.0" r="1.75" class="dy"/><circle cx="692.7" cy="169.8" r="1.75" class="dk"/><circle cx="662.5" cy="267.7" r="1.75" class="dr"/><circle cx="630.2" cy="191.5" r="1.75" class="dy"/><circle cx="761.5" cy="163.9" r="1.75" class="dy"/><circle cx="655.6" cy="195.4" r="1.75" class="dr"/><circle cx="591.0" cy="237.4" r="1.75" class="dk"/><circle cx="663.2" cy="155.8" r="1.75" class="dy"/><circle cx="700.4" cy="136.3" r="1.75" class="dk"/><circle cx="656.3" cy="198.0" r="1.75" class="dk"/><circle cx="626.7" cy="269.5" r="1.75" class="dy"/><circle cx="659.5" cy="176.6" r="1.75" class="dy"/><circle cx="710.8" cy="278.6" r="1.75" class="dy"/><circle cx="759.6" cy="126.1" r="1.75" class="dy"/><circle cx="774.6" cy="159.8" r="1.75" class="dk"/><circle cx="615.1" cy="219.4" r="1.75" class="dy"/><circle cx="656.2" cy="239.2" r="1.75" class="dr"/><circle cx="676.6" cy="115.5" r="1.75" class="dy"/><circle cx="641.7" cy="187.7" r="1.75" class="dk"/><circle cx="610.9" cy="134.4" r="1.75" class="dy"/><circle cx="644.0" cy="203.9" r="1.75" class="dy"/><circle cx="675.9" cy="128.2" r="1.75" class="dy"/><circle cx="645.4" cy="256.5" r="1.75" class="dr"/><circle cx="596.1" cy="256.0" r="1.75" class="dy"/><circle cx="716.3" cy="149.0" r="1.75" class="dy"/><circle cx="685.1" cy="145.4" r="1.75" class="dy"/><circle cx="602.5" cy="235.2" r="1.75" class="dk"/><circle cx="713.3" cy="121.5" r="1.75" class="dy"/><circle cx="744.4" cy="159.0" r="1.75" class="dy"/><circle cx="777.5" cy="158.1" r="1.75" class="dk"/><circle cx="645.4" cy="186.0" r="1.75" class="dy"/><circle cx="649.4" cy="193.9" r="1.75" class="dy"/><circle cx="780.2" cy="254.5" r="1.75" class="dy"/><circle cx="570.8" cy="261.8" r="1.75" class="dy"/><circle cx="615.7" cy="240.5" r="1.75" class="dy"/><circle cx="719.4" cy="255.5" r="1.75" class="dy"/><circle cx="618.2" cy="134.7" r="1.75" class="dy"/><circle cx="678.4" cy="226.9" r="1.75" class="dy"/><circle cx="648.5" cy="194.7" r="1.75" class="dy"/><circle cx="616.6" cy="248.5" r="1.75" class="dy"/><circle cx="656.8" cy="252.9" r="1.75" class="dk"/><circle cx="779.3" cy="221.5" r="1.75" class="dk"/><circle cx="602.6" cy="268.6" r="1.75" class="dr"/><circle cx="723.9" cy="153.4" r="1.75" class="dr"/><circle cx="646.4" cy="186.5" r="1.75" class="dr"/><circle cx="767.6" cy="118.6" r="1.75" class="dy"/><circle cx="610.7" cy="224.4" r="1.75" class="dy"/><circle cx="633.5" cy="197.5" r="1.75" class="dy"/><circle cx="649.4" cy="121.8" r="1.75" class="dk"/><circle cx="773.3" cy="279.7" r="1.75" class="dr"/><circle cx="754.8" cy="125.5" r="1.75" class="dk"/><circle cx="641.0" cy="182.4" r="1.75" class="dy"/><circle cx="715.6" cy="129.8" r="1.75" class="dr"/><circle cx="656.4" cy="113.2" r="1.75" class="dy"/><circle cx="767.1" cy="103.2" r="1.75" class="dr"/><circle cx="738.3" cy="283.3" r="1.75" class="dy"/><circle cx="546.6" cy="138.2" r="1.75" class="dk"/><circle cx="721.0" cy="150.7" r="1.75" class="dy"/><circle cx="647.0" cy="216.4" r="1.75" class="dy"/><circle cx="723.6" cy="150.8" r="1.75" class="dr"/><circle cx="594.7" cy="243.3" r="1.75" class="dk"/><circle cx="747.5" cy="120.5" r="1.75" class="dr"/><circle cx="584.9" cy="183.8" r="1.75" class="dr"/><circle cx="652.9" cy="215.2" r="1.75" class="dr"/><circle cx="712.9" cy="156.3" r="1.75" class="dk"/><circle cx="725.4" cy="157.2" r="1.75" class="dy"/><circle cx="544.6" cy="193.8" r="1.75" class="dr"/><circle cx="767.4" cy="168.7" r="1.75" class="dk"/><circle cx="642.6" cy="205.0" r="1.75" class="dk"/><circle cx="714.8" cy="157.0" r="1.75" class="dy"/><circle cx="645.5" cy="218.0" r="1.75" class="dr"/><circle cx="683.3" cy="162.6" r="1.75" class="dk"/><circle cx="717.1" cy="132.6" r="1.75" class="dy"/><circle cx="657.8" cy="258.6" r="1.75" class="dy"/><circle cx="659.0" cy="279.4" r="1.75" class="dy"/><circle cx="713.3" cy="154.9" r="1.75" class="dy"/><circle cx="755.0" cy="119.1" r="1.75" class="dy"/><circle cx="589.6" cy="205.0" r="1.75" class="dy"/><circle cx="718.4" cy="128.7" r="1.75" class="dy"/><circle cx="643.2" cy="205.0" r="1.75" class="dk"/><circle cx="642.1" cy="183.7" r="1.75" class="dk"/><circle cx="642.9" cy="135.8" r="1.75" class="dr"/><circle cx="698.7" cy="165.6" r="1.75" class="dy"/><circle cx="701.7" cy="226.7" r="1.75" class="dr"/><circle cx="561.1" cy="145.5" r="1.75" class="dy"/><circle cx="663.6" cy="196.6" r="1.75" class="dy"/><circle cx="643.3" cy="201.3" r="1.75" class="dr"/><circle cx="738.0" cy="109.1" r="1.75" class="dy"/><circle cx="658.1" cy="269.5" r="1.75" class="dr"/><circle cx="673.5" cy="249.6" r="1.75" class="dy"/><circle cx="723.8" cy="150.2" r="1.75" class="dr"/><circle cx="717.2" cy="191.0" r="1.75" class="dy"/><circle cx="718.7" cy="156.6" r="1.75" class="dy"/><circle cx="721.5" cy="143.6" r="1.75" class="dr"/><circle cx="678.3" cy="226.4" r="1.75" class="dy"/><circle cx="710.6" cy="113.2" r="1.75" class="dy"/><circle cx="641.3" cy="193.5" r="1.75" class="dk"/><circle cx="772.9" cy="162.5" r="1.75" class="dy"/><circle cx="781.7" cy="116.5" r="1.75" class="dy"/><circle cx="657.3" cy="290.4" r="1.75" class="dy"/><circle cx="772.8" cy="283.6" r="1.75" class="dr"/><circle cx="778.0" cy="119.4" r="1.75" class="dy"/><circle cx="552.9" cy="236.0" r="1.75" class="dy"/><circle cx="765.2" cy="113.4" r="1.75" class="dk"/><circle cx="623.9" cy="191.2" r="1.75" class="dr"/><circle cx="643.4" cy="200.0" r="1.75" class="dy"/><circle cx="757.7" cy="112.4" r="1.75" class="dk"/><circle cx="632.5" cy="189.8" r="1.75" class="dy"/><circle cx="705.4" cy="234.6" r="1.75" class="dr"/><circle cx="680.3" cy="233.9" r="1.75" class="dy"/><circle cx="654.4" cy="245.7" r="1.75" class="dy"/><circle cx="631.3" cy="146.5" r="1.75" class="dr"/><circle cx="742.4" cy="234.8" r="1.75" class="dk"/><circle cx="593.0" cy="240.6" r="1.75" class="dk"/><circle cx="760.5" cy="171.0" r="1.75" class="dy"/><circle cx="744.3" cy="250.9" r="1.75" class="dy"/><circle cx="727.6" cy="261.8" r="1.75" class="dy"/><circle cx="722.1" cy="165.4" r="1.75" class="dy"/><circle cx="601.0" cy="251.6" r="1.75" class="dy"/><circle cx="617.0" cy="190.5" r="1.75" class="dr"/><circle cx="610.9" cy="239.3" r="1.75" class="dk"/><circle cx="761.6" cy="172.6" r="1.75" class="dr"/><circle cx="690.3" cy="284.5" r="1.75" class="dk"/><circle cx="586.6" cy="242.6" r="1.75" class="dy"/><circle cx="653.7" cy="180.3" r="1.75" class="dy"/><circle cx="726.2" cy="156.0" r="1.75" class="dy"/><circle cx="734.8" cy="265.0" r="1.75" class="dy"/><circle cx="788.7" cy="197.3" r="1.75" class="dy"/><circle cx="594.2" cy="211.9" r="1.75" class="dy"/><circle cx="666.4" cy="118.9" r="1.75" class="dy"/><circle cx="639.2" cy="202.6" r="1.75" class="dy"/><circle cx="701.0" cy="217.6" r="1.75" class="dy"/><circle cx="658.0" cy="202.1" r="1.75" class="dr"/><circle cx="772.1" cy="237.7" r="1.75" class="dk"/><circle cx="642.2" cy="247.7" r="1.75" class="dy"/><circle cx="684.9" cy="172.5" r="1.75" class="dy"/><circle cx="726.7" cy="160.7" r="1.75" class="dy"/><circle cx="760.8" cy="117.9" r="1.75" class="dk"/><circle cx="648.3" cy="193.7" r="1.75" class="dy"/><circle cx="783.3" cy="172.6" r="1.75" class="dr"/><circle cx="732.6" cy="273.4" r="1.75" class="dy"/><circle cx="738.9" cy="156.0" r="1.75" class="dy"/><circle cx="651.9" cy="190.2" r="1.75" class="dr"/><circle cx="646.0" cy="190.2" r="1.75" class="dy"/><circle cx="750.3" cy="161.1" r="1.75" class="dy"/><circle cx="723.4" cy="153.9" r="1.75" class="dy"/><circle cx="750.8" cy="275.4" r="1.75" class="dy"/><circle cx="632.6" cy="136.2" r="1.75" class="dr"/><circle cx="572.3" cy="242.4" r="1.75" class="dy"/><circle cx="565.3" cy="219.3" r="1.75" class="dy"/><circle cx="619.3" cy="213.1" r="1.75" class="dy"/><circle cx="768.4" cy="119.1" r="1.75" class="dy"/><circle cx="728.8" cy="210.9" r="1.75" class="dy"/><circle cx="734.1" cy="144.4" r="1.75" class="dy"/><circle cx="763.3" cy="118.2" r="1.75" class="dr"/><circle cx="715.9" cy="150.2" r="1.75" class="dr"/><circle cx="771.2" cy="103.1" r="1.75" class="dk"/><circle cx="773.4" cy="189.6" r="1.75" class="dr"/><circle cx="721.2" cy="149.9" r="1.75" class="dy"/><circle cx="781.0" cy="223.9" r="1.75" class="dy"/><circle cx="719.1" cy="151.0" r="1.75" class="dy"/><circle cx="642.5" cy="194.0" r="1.75" class="dy"/><circle cx="596.5" cy="247.3" r="1.75" class="dy"/><circle cx="640.4" cy="183.7" r="1.75" class="dr"/><circle cx="717.3" cy="160.1" r="1.75" class="dy"/><circle cx="723.4" cy="225.8" r="1.75" class="dy"/><circle cx="594.2" cy="251.4" r="1.75" class="dy"/><circle cx="769.8" cy="124.7" r="1.75" class="dr"/><circle cx="648.6" cy="151.2" r="1.75" class="dy"/><circle cx="717.6" cy="153.9" r="1.75" class="dr"/><circle cx="777.0" cy="289.9" r="1.75" class="dr"/><circle cx="707.3" cy="253.6" r="1.75" class="dy"/><circle cx="719.5" cy="147.0" r="1.75" class="dr"/><circle cx="643.6" cy="209.7" r="1.75" class="dk"/><circle cx="712.2" cy="154.7" r="1.75" class="dy"/><circle cx="657.8" cy="285.1" r="1.75" class="dk"/><circle cx="773.5" cy="120.4" r="1.75" class="dr"/><circle cx="694.2" cy="279.7" r="1.75" class="dy"/><circle cx="716.0" cy="104.7" r="1.75" class="dy"/><circle cx="737.4" cy="163.0" r="1.75" class="dy"/><circle cx="760.4" cy="137.6" r="1.75" class="dk"/><circle cx="636.9" cy="269.7" r="1.75" class="dy"/><circle cx="683.5" cy="232.0" r="1.75" class="dy"/><circle cx="786.1" cy="259.2" r="1.75" class="dk"/><circle cx="569.8" cy="145.9" r="1.75" class="dr"/><circle cx="645.1" cy="201.9" r="1.75" class="dk"/><circle cx="648.9" cy="185.8" r="1.75" class="dy"/><circle cx="658.9" cy="267.6" r="1.75" class="dr"/><circle cx="549.2" cy="241.5" r="1.75" class="dy"/><circle cx="721.5" cy="159.3" r="1.75" class="dr"/><circle cx="683.2" cy="197.7" r="1.75" class="dr"/><circle cx="669.4" cy="247.2" r="1.75" class="dr"/><circle cx="776.9" cy="100.9" r="1.75" class="dr"/><circle cx="760.9" cy="119.6" r="1.75" class="dy"/><circle cx="617.0" cy="219.1" r="1.75" class="dk"/><circle cx="739.7" cy="183.8" r="1.75" class="dk"/><circle cx="640.0" cy="190.3" r="1.75" class="dk"/><circle cx="755.9" cy="193.1" r="1.75" class="dy"/><circle cx="650.4" cy="136.3" r="1.75" class="dr"/><circle cx="746.3" cy="127.6" r="1.75" class="dy"/><circle cx="712.8" cy="147.0" r="1.75" class="dk"/><circle cx="711.7" cy="149.9" r="1.75" class="dk"/><circle cx="734.1" cy="276.1" r="1.75" class="dy"/><circle cx="717.6" cy="110.6" r="1.75" class="dy"/><circle cx="663.5" cy="179.8" r="1.75" class="dy"/><circle cx="730.3" cy="247.4" r="1.75" class="dy"/><circle cx="645.8" cy="187.7" r="1.75" class="dk"/><circle cx="657.5" cy="197.6" r="1.75" class="dy"/><circle cx="672.7" cy="167.2" r="1.75" class="dy"/><circle cx="724.0" cy="154.8" r="1.75" class="dr"/><circle cx="773.5" cy="122.3" r="1.75" class="dy"/><circle cx="726.6" cy="221.2" r="1.75" class="dr"/><circle cx="723.8" cy="150.4" r="1.75" class="dy"/><circle cx="768.7" cy="115.0" r="1.75" class="dy"/><circle cx="651.3" cy="190.1" r="1.75" class="dr"/><circle cx="690.2" cy="126.5" r="1.75" class="dy"/><circle cx="751.4" cy="191.1" r="1.75" class="dy"/><circle cx="600.5" cy="242.9" r="1.75" class="dy"/><circle cx="778.8" cy="193.2" r="1.75" class="dr"/><circle cx="617.0" cy="183.0" r="1.75" class="dr"/><circle cx="610.9" cy="226.8" r="1.75" class="dr"/><circle cx="763.6" cy="157.2" r="1.75" class="dk"/><circle cx="596.2" cy="251.5" r="1.75" class="dy"/><circle cx="576.4" cy="154.6" r="1.75" class="dk"/><circle cx="630.4" cy="216.8" r="1.75" class="dy"/><circle cx="655.1" cy="244.0" r="1.75" class="dy"/><circle cx="704.9" cy="146.8" r="1.75" class="dy"/><circle cx="760.5" cy="113.5" r="1.75" class="dy"/><circle cx="610.8" cy="243.5" r="1.75" class="dr"/><circle cx="682.6" cy="229.7" r="1.75" class="dy"/><circle cx="648.4" cy="100.4" r="1.75" class="dy"/><circle cx="724.6" cy="161.4" r="1.75" class="dk"/><circle cx="588.7" cy="225.6" r="1.75" class="dy"/><circle cx="712.7" cy="155.0" r="1.75" class="dy"/><circle cx="604.1" cy="230.8" r="1.75" class="dy"/><circle cx="722.0" cy="261.5" r="1.75" class="dk"/><circle cx="639.8" cy="184.3" r="1.75" class="dk"/><circle cx="594.3" cy="247.5" r="1.75" class="dy"/><circle cx="714.8" cy="106.0" r="1.75" class="dk"/><circle cx="641.0" cy="194.6" r="1.75" class="dk"/><circle cx="649.5" cy="118.0" r="1.75" class="dy"/><circle cx="773.3" cy="177.8" r="1.75" class="dy"/><circle cx="679.6" cy="235.8" r="1.75" class="dy"/><circle cx="719.5" cy="145.6" r="1.75" class="dy"/><circle cx="607.2" cy="186.4" r="1.75" class="dy"/><circle cx="671.6" cy="268.6" r="1.75" class="dy"/><circle cx="669.9" cy="196.3" r="1.75" class="dy"/><circle cx="769.6" cy="285.3" r="1.75" class="dk"/><circle cx="735.6" cy="200.2" r="1.75" class="dy"/><circle cx="768.4" cy="129.1" r="1.75" class="dy"/><circle cx="636.3" cy="214.2" r="1.75" class="dr"/><circle cx="754.7" cy="172.4" r="1.75" class="dy"/><circle cx="650.3" cy="208.7" r="1.75" class="dy"/><circle cx="713.1" cy="110.3" r="1.75" class="dr"/><circle cx="781.9" cy="229.7" r="1.75" class="dy"/><circle cx="589.4" cy="100.7" r="1.75" class="dy"/><circle cx="722.1" cy="175.8" r="1.75" class="dy"/><circle cx="707.1" cy="254.8" r="1.75" class="dk"/><circle cx="619.0" cy="217.2" r="1.75" class="dk"/><circle cx="779.2" cy="218.2" r="1.75" class="dy"/><circle cx="674.3" cy="178.3" r="1.75" class="dy"/><circle cx="649.8" cy="191.1" r="1.75" class="dy"/><circle cx="721.9" cy="158.4" r="1.75" class="dy"/><circle cx="751.1" cy="135.3" r="1.75" class="dr"/><circle cx="618.6" cy="133.3" r="1.75" class="dk"/><circle cx="545.6" cy="203.9" r="1.75" class="dy"/><circle cx="718.7" cy="214.0" r="1.75" class="dy"/><circle cx="754.9" cy="129.8" r="1.75" class="dy"/><circle cx="646.9" cy="194.7" r="1.75" class="dr"/><circle cx="711.0" cy="219.8" r="1.75" class="dk"/><circle cx="715.8" cy="149.9" r="1.75" class="dy"/><circle cx="664.2" cy="145.7" r="1.75" class="dr"/><circle cx="638.8" cy="187.3" r="1.75" class="dy"/><circle cx="604.1" cy="175.8" r="1.75" class="dy"/><circle cx="582.1" cy="187.5" r="1.75" class="dy"/><circle cx="732.2" cy="199.8" r="1.75" class="dr"/><circle cx="714.4" cy="140.8" r="1.75" class="dy"/><circle cx="689.2" cy="284.2" r="1.75" class="dy"/><circle cx="605.2" cy="233.1" r="1.75" class="dy"/><circle cx="665.8" cy="120.5" r="1.75" class="dy"/><circle cx="745.3" cy="270.9" r="1.75" class="dr"/><circle cx="618.5" cy="136.2" r="1.75" class="dy"/><circle cx="618.9" cy="188.7" r="1.75" class="dy"/><circle cx="753.8" cy="123.5" r="1.75" class="dy"/><circle cx="657.7" cy="183.1" r="1.75" class="dy"/><circle cx="559.1" cy="239.5" r="1.75" class="dy"/><circle cx="720.2" cy="234.1" r="1.75" class="dy"/><circle cx="685.7" cy="236.9" r="1.75" class="dy"/><circle cx="742.6" cy="171.7" r="1.75" class="dy"/><circle cx="673.9" cy="285.6" r="1.75" class="dy"/><circle cx="588.5" cy="159.6" r="1.75" class="dy"/><circle cx="718.9" cy="146.8" r="1.75" class="dy"/><circle cx="592.6" cy="270.3" r="1.75" class="dy"/><circle cx="612.7" cy="231.6" r="1.75" class="dy"/><circle cx="596.1" cy="120.4" r="1.75" class="dy"/><circle cx="748.0" cy="171.7" r="1.75" class="dk"/><circle cx="709.8" cy="265.2" r="1.75" class="dy"/><circle cx="708.8" cy="160.2" r="1.75" class="dk"/><circle cx="750.7" cy="126.6" r="1.75" class="dy"/><circle cx="774.6" cy="157.9" r="1.75" class="dr"/><circle cx="662.8" cy="232.4" r="1.75" class="dr"/><circle cx="757.2" cy="138.2" r="1.75" class="dk"/><circle cx="628.8" cy="196.5" r="1.75" class="dy"/><circle cx="626.9" cy="189.6" r="1.75" class="dy"/><circle cx="722.8" cy="154.3" r="1.75" class="dk"/><circle cx="639.7" cy="195.6" r="1.75" class="dy"/><circle cx="703.3" cy="148.2" r="1.75" class="dk"/><circle cx="774.8" cy="276.2" r="1.75" class="dk"/><circle cx="774.5" cy="282.8" r="1.75" class="dy"/><circle cx="710.1" cy="127.1" r="1.75" class="dy"/><circle cx="754.8" cy="122.6" r="1.75" class="dr"/><circle cx="767.7" cy="110.9" r="1.75" class="dy"/><circle cx="730.6" cy="266.6" r="1.75" class="dy"/><circle cx="701.1" cy="194.4" r="1.75" class="dr"/><circle cx="696.6" cy="165.5" r="1.75" class="dy"/><circle cx="648.7" cy="188.0" r="1.75" class="dk"/><circle cx="641.6" cy="190.3" r="1.75" class="dy"/><circle cx="647.2" cy="189.5" r="1.75" class="dy"/><circle cx="643.9" cy="205.6" r="1.75" class="dr"/><circle cx="755.5" cy="121.4" r="1.75" class="dy"/><circle cx="731.5" cy="134.8" r="1.75" class="dy"/><circle cx="616.6" cy="183.9" r="1.75" class="dr"/><circle cx="680.3" cy="197.6" r="1.75" class="dk"/><circle cx="662.5" cy="118.5" r="1.75" class="dk"/><circle cx="762.1" cy="240.0" r="1.75" class="dy"/><circle cx="696.2" cy="167.5" r="1.75" class="dy"/><circle cx="642.5" cy="201.8" r="1.75" class="dr"/><circle cx="615.0" cy="192.8" r="1.75" class="dy"/><circle cx="644.3" cy="178.3" r="1.75" class="dr"/><circle cx="698.0" cy="147.3" r="1.75" class="dy"/><circle cx="743.6" cy="177.8" r="1.75" class="dy"/><circle cx="738.9" cy="169.0" r="1.75" class="dy"/><circle cx="775.6" cy="196.5" r="1.75" class="dy"/><circle cx="605.1" cy="234.9" r="1.75" class="dy"/><circle cx="726.1" cy="161.7" r="1.75" class="dy"/><circle cx="625.1" cy="218.6" r="1.75" class="dy"/><circle cx="767.6" cy="271.4" r="1.75" class="dy"/><circle cx="647.1" cy="185.8" r="1.75" class="dy"/><circle cx="737.6" cy="278.7" r="1.75" class="dy"/><circle cx="753.0" cy="169.0" r="1.75" class="dk"/><circle cx="693.3" cy="158.7" r="1.75" class="dk"/><circle cx="775.1" cy="285.0" r="1.75" class="dk"/><circle cx="556.1" cy="254.1" r="1.75" class="dy"/><circle cx="605.8" cy="241.8" r="1.75" class="dy"/><circle cx="596.2" cy="243.9" r="1.75" class="dk"/><circle cx="678.1" cy="175.3" r="1.75" class="dy"/><circle cx="649.8" cy="188.1" r="1.75" class="dk"/><circle cx="719.6" cy="151.1" r="1.75" class="dy"/><circle cx="762.2" cy="117.2" r="1.75" class="dy"/><circle cx="703.7" cy="234.0" r="1.75" class="dy"/><circle cx="598.2" cy="241.9" r="1.75" class="dy"/><circle cx="656.1" cy="237.6" r="1.75" class="dy"/><circle cx="751.8" cy="126.3" r="1.75" class="dy"/><circle cx="712.4" cy="156.9" r="1.75" class="dr"/><circle cx="761.7" cy="286.8" r="1.75" class="dk"/><circle cx="715.0" cy="149.0" r="1.75" class="dy"/><circle cx="646.8" cy="182.6" r="1.75" class="dy"/><circle cx="655.3" cy="245.1" r="1.75" class="dr"/><circle cx="667.2" cy="198.9" r="1.75" class="dy"/><circle cx="696.3" cy="277.6" r="1.75" class="dy"/><circle cx="632.3" cy="103.6" r="1.75" class="dy"/><circle cx="764.2" cy="238.5" r="1.75" class="dy"/><circle cx="765.0" cy="123.1" r="1.75" class="dy"/><circle cx="564.9" cy="200.5" r="1.75" class="dk"/><circle cx="743.5" cy="133.5" r="1.75" class="dr"/><circle cx="640.1" cy="182.2" r="1.75" class="dr"/><circle cx="611.4" cy="128.8" r="1.75" class="dk"/><circle cx="754.4" cy="135.7" r="1.75" class="dy"/><circle cx="640.8" cy="193.9" r="1.75" class="dy"/><circle cx="742.9" cy="180.1" r="1.75" class="dy"/><circle cx="729.5" cy="278.3" r="1.75" class="dy"/><circle cx="655.3" cy="267.0" r="1.75" class="dk"/><circle cx="600.6" cy="239.0" r="1.75" class="dr"/><circle cx="576.7" cy="188.0" r="1.75" class="dy"/><circle cx="776.1" cy="157.0" r="1.75" class="dk"/><circle cx="787.1" cy="186.3" r="1.75" class="dr"/><circle cx="704.1" cy="282.0" r="1.75" class="dr"/><circle cx="628.9" cy="197.0" r="1.75" class="dr"/><circle cx="629.1" cy="187.5" r="1.75" class="dy"/><circle cx="733.4" cy="199.7" r="1.75" class="dk"/><circle cx="706.1" cy="151.7" r="1.75" class="dk"/><circle cx="642.8" cy="201.3" r="1.75" class="dr"/><circle cx="717.7" cy="157.9" r="1.75" class="dr"/><circle cx="544.7" cy="195.1" r="1.75" class="dr"/><circle cx="624.0" cy="134.6" r="1.75" class="dy"/><circle cx="661.5" cy="99.7" r="1.75" class="dr"/><circle cx="649.5" cy="202.2" r="1.75" class="dy"/><circle cx="632.1" cy="186.4" r="1.75" class="dy"/><circle cx="723.9" cy="108.4" r="1.75" class="dy"/><circle cx="764.6" cy="151.4" r="1.75" class="dy"/><circle cx="610.5" cy="247.1" r="1.75" class="dy"/><circle cx="647.3" cy="248.2" r="1.75" class="dy"/><circle cx="672.2" cy="102.4" r="1.75" class="dy"/><circle cx="646.1" cy="197.2" r="1.75" class="dy"/><circle cx="674.5" cy="238.4" r="1.75" class="dk"/><circle cx="626.3" cy="188.9" r="1.75" class="dr"/><circle cx="725.9" cy="223.7" r="1.75" class="dy"/><circle cx="704.4" cy="173.2" r="1.75" class="dr"/><circle cx="724.2" cy="225.5" r="1.75" class="dy"/><circle cx="745.8" cy="229.7" r="1.75" class="dy"/><circle cx="717.4" cy="146.1" r="1.75" class="dy"/><circle cx="617.7" cy="244.1" r="1.75" class="dk"/><circle cx="658.8" cy="195.6" r="1.75" class="dr"/><circle cx="710.4" cy="115.3" r="1.75" class="dr"/><circle cx="741.3" cy="281.9" r="1.75" class="dr"/><circle cx="667.5" cy="261.8" r="1.75" class="dk"/><circle cx="695.2" cy="147.2" r="1.75" class="dy"/><circle cx="667.7" cy="191.7" r="1.75" class="dy"/><circle cx="659.1" cy="288.4" r="1.75" class="dr"/><circle cx="686.9" cy="174.0" r="1.75" class="dy"/><circle cx="646.7" cy="191.1" r="1.75" class="dy"/><circle cx="726.9" cy="151.2" r="1.75" class="dy"/><circle cx="646.7" cy="159.0" r="1.75" class="dy"/><circle cx="704.1" cy="279.7" r="1.75" class="dy"/><circle cx="713.8" cy="143.5" r="1.75" class="dy"/><circle cx="709.7" cy="164.6" r="1.75" class="dy"/><circle cx="558.9" cy="215.1" r="1.75" class="dk"/><circle cx="757.8" cy="126.7" r="1.75" class="dy"/><circle cx="743.5" cy="132.4" r="1.75" class="dy"/><circle cx="519.3" cy="151.9" r="1.75" class="dk"/><circle cx="629.7" cy="185.1" r="1.75" class="dy"/><circle cx="763.4" cy="194.3" r="1.75" class="dk"/><circle cx="715.2" cy="152.9" r="1.75" class="dr"/><circle cx="662.6" cy="151.4" r="1.75" class="dr"/><circle cx="769.0" cy="103.8" r="1.75" class="dy"/><circle cx="640.3" cy="189.8" r="1.75" class="dy"/><circle cx="619.8" cy="192.1" r="1.75" class="dr"/><circle cx="703.0" cy="181.1" r="1.75" class="dy"/><circle cx="641.3" cy="109.5" r="1.75" class="dk"/><circle cx="676.9" cy="275.1" r="1.75" class="dy"/><circle cx="642.2" cy="200.8" r="1.75" class="dy"/><circle cx="635.2" cy="248.6" r="1.75" class="dy"/><circle cx="711.7" cy="248.2" r="1.75" class="dy"/><circle cx="717.9" cy="147.0" r="1.75" class="dr"/><circle cx="749.5" cy="167.2" r="1.75" class="dy"/><circle cx="710.8" cy="151.5" r="1.75" class="dk"/><circle cx="766.6" cy="112.5" r="1.75" class="dy"/><circle cx="744.0" cy="135.3" r="1.75" class="dy"/><circle cx="744.8" cy="175.2" r="1.75" class="dy"/><circle cx="579.9" cy="260.2" r="1.75" class="dy"/><circle cx="643.9" cy="177.0" r="1.75" class="dy"/><circle cx="704.6" cy="162.3" r="1.75" class="dr"/><circle cx="644.1" cy="209.7" r="1.75" class="dy"/><circle cx="641.6" cy="194.4" r="1.75" class="dy"/><circle cx="672.8" cy="156.1" r="1.75" class="dr"/><circle cx="741.9" cy="115.3" r="1.75" class="dy"/><circle cx="785.6" cy="167.6" r="1.75" class="dy"/><circle cx="658.8" cy="288.8" r="1.75" class="dy"/><circle cx="615.4" cy="216.4" r="1.75" class="dy"/><circle cx="756.2" cy="163.3" r="1.75" class="dy"/><circle cx="554.0" cy="229.6" r="1.75" class="dr"/><circle cx="740.6" cy="132.8" r="1.75" class="dy"/><circle cx="692.2" cy="163.1" r="1.75" class="dk"/><circle cx="722.7" cy="217.5" r="1.75" class="dr"/><circle cx="646.5" cy="157.9" r="1.75" class="dy"/><circle cx="662.5" cy="216.1" r="1.75" class="dk"/><circle cx="781.7" cy="213.8" r="1.75" class="dk"/><circle cx="634.0" cy="185.2" r="1.75" class="dy"/><circle cx="567.7" cy="252.1" r="1.75" class="dk"/><circle cx="612.7" cy="249.6" r="1.75" class="dy"/><circle cx="742.7" cy="193.6" r="1.75" class="dy"/><circle cx="741.0" cy="119.2" r="1.75" class="dk"/><circle cx="647.9" cy="194.2" r="1.75" class="dy"/><circle cx="708.7" cy="203.4" r="1.75" class="dy"/><circle cx="611.6" cy="237.0" r="1.75" class="dk"/><circle cx="726.7" cy="242.7" r="1.75" class="dr"/><circle cx="771.6" cy="102.8" r="1.75" class="dy"/><circle cx="742.6" cy="142.6" r="1.75" class="dk"/><circle cx="739.8" cy="161.3" r="1.75" class="dr"/><circle cx="641.4" cy="188.8" r="1.75" class="dr"/><circle cx="696.9" cy="164.2" r="1.75" class="dy"/><circle cx="761.5" cy="106.3" r="1.75" class="dy"/><circle cx="628.6" cy="176.7" r="1.75" class="dy"/><circle cx="719.7" cy="234.7" r="1.75" class="dy"/><circle cx="707.1" cy="158.2" r="1.75" class="dy"/><circle cx="721.2" cy="153.1" r="1.75" class="dy"/><circle cx="642.4" cy="193.9" r="1.75" class="dy"/><circle cx="636.4" cy="216.2" r="1.75" class="dy"/><circle cx="682.4" cy="172.5" r="1.75" class="dr"/><circle cx="649.1" cy="105.9" r="1.75" class="dy"/><circle cx="631.1" cy="184.9" r="1.75" class="dy"/><circle cx="750.9" cy="161.9" r="1.75" class="dy"/><circle cx="678.1" cy="269.2" r="1.75" class="dy"/><circle cx="647.2" cy="200.3" r="1.75" class="dr"/><circle cx="625.9" cy="187.5" r="1.75" class="dy"/><circle cx="620.4" cy="248.6" r="1.75" class="dk"/><circle cx="730.8" cy="202.0" r="1.75" class="dk"/><circle cx="708.0" cy="115.7" r="1.75" class="dr"/><circle cx="651.7" cy="181.7" r="1.75" class="dy"/><circle cx="654.1" cy="196.2" r="1.75" class="dy"/><circle cx="724.1" cy="150.1" r="1.75" class="dk"/><circle cx="643.0" cy="203.0" r="1.75" class="dr"/><circle cx="618.1" cy="252.0" r="1.75" class="dy"/><circle cx="752.9" cy="126.0" r="1.75" class="dy"/><circle cx="701.0" cy="159.1" r="1.75" class="dy"/><circle cx="600.2" cy="233.8" r="1.75" class="dr"/><circle cx="640.7" cy="215.5" r="1.75" class="dy"/><circle cx="715.0" cy="240.9" r="1.75" class="dy"/><circle cx="641.4" cy="189.8" r="1.75" class="dr"/><circle cx="767.4" cy="104.0" r="1.75" class="dr"/><circle cx="651.4" cy="270.6" r="1.75" class="dy"/><circle cx="708.9" cy="252.1" r="1.75" class="dy"/><circle cx="712.9" cy="116.0" r="1.75" class="dk"/><circle cx="622.9" cy="192.5" r="1.75" class="dk"/><circle cx="655.7" cy="182.2" r="1.75" class="dk"/><circle cx="575.2" cy="186.4" r="1.75" class="dy"/><circle cx="604.8" cy="204.4" r="1.75" class="dy"/><circle cx="655.6" cy="195.5" r="1.75" class="dy"/><circle cx="602.1" cy="236.3" r="1.75" class="dy"/><circle cx="587.6" cy="263.8" r="1.75" class="dy"/><circle cx="561.5" cy="241.2" r="1.75" class="dy"/><circle cx="661.6" cy="204.1" r="1.75" class="dy"/><circle cx="591.7" cy="248.6" r="1.75" class="dy"/><circle cx="721.1" cy="140.8" r="1.75" class="dy"/><circle cx="740.2" cy="271.5" r="1.75" class="dr"/><circle cx="731.6" cy="110.6" r="1.75" class="dy"/><circle cx="653.9" cy="113.0" r="1.75" class="dy"/><circle cx="554.1" cy="235.8" r="1.75" class="dy"/><circle cx="646.6" cy="178.6" r="1.75" class="dy"/><circle cx="717.1" cy="188.4" r="1.75" class="dy"/><circle cx="744.2" cy="178.2" r="1.75" class="dy"/><circle cx="778.0" cy="293.5" r="1.75" class="dr"/><circle cx="729.3" cy="165.3" r="1.75" class="dr"/><circle cx="617.5" cy="199.2" r="1.75" class="dy"/><circle cx="695.4" cy="107.6" r="1.75" class="dy"/><circle cx="704.2" cy="149.0" r="1.75" class="dr"/><circle cx="716.2" cy="143.8" r="1.75" class="dr"/><circle cx="772.0" cy="174.2" r="1.75" class="dr"/><circle cx="746.8" cy="126.5" r="1.75" class="dy"/><circle cx="740.6" cy="282.0" r="1.75" class="dy"/><circle cx="730.1" cy="142.1" r="1.75" class="dy"/><circle cx="769.8" cy="282.1" r="1.75" class="dr"/><circle cx="615.1" cy="248.4" r="1.75" class="dy"/><circle cx="728.4" cy="213.3" r="1.75" class="dr"/><circle cx="755.6" cy="130.2" r="1.75" class="dk"/><circle cx="691.4" cy="118.5" r="1.75" class="dy"/><circle cx="692.0" cy="278.9" r="1.75" class="dy"/><circle cx="746.6" cy="138.6" r="1.75" class="dr"/><circle cx="694.4" cy="128.2" r="1.75" class="dk"/><circle cx="652.3" cy="183.3" r="1.75" class="dy"/><circle cx="639.2" cy="196.3" r="1.75" class="dy"/><circle cx="608.9" cy="225.8" r="1.75" class="dy"/><circle cx="633.8" cy="169.9" r="1.75" class="dk"/><circle cx="723.3" cy="102.2" r="1.75" class="dy"/><circle cx="666.9" cy="241.9" r="1.75" class="dy"/><circle cx="629.0" cy="185.4" r="1.75" class="dy"/><circle cx="754.7" cy="177.4" r="1.75" class="dy"/><circle cx="646.1" cy="195.4" r="1.75" class="dr"/><circle cx="721.8" cy="158.7" r="1.75" class="dy"/><circle cx="747.8" cy="123.0" r="1.75" class="dr"/><circle cx="548.9" cy="142.1" r="1.75" class="dy"/><circle cx="625.4" cy="186.8" r="1.75" class="dy"/><circle cx="642.2" cy="201.7" r="1.75" class="dr"/><circle cx="694.1" cy="277.9" r="1.75" class="dy"/><circle cx="726.1" cy="114.3" r="1.75" class="dy"/><circle cx="782.2" cy="217.7" r="1.75" class="dr"/><circle cx="705.7" cy="134.8" r="1.75" class="dr"/><circle cx="601.3" cy="243.0" r="1.75" class="dy"/><circle cx="706.9" cy="212.5" r="1.75" class="dy"/><circle cx="685.4" cy="133.8" r="1.75" class="dy"/><circle cx="692.4" cy="282.1" r="1.75" class="dr"/><circle cx="763.9" cy="126.5" r="1.75" class="dy"/><circle cx="740.5" cy="277.6" r="1.75" class="dy"/><circle cx="669.6" cy="199.4" r="1.75" class="dr"/><circle cx="708.7" cy="160.3" r="1.75" class="dy"/><circle cx="642.1" cy="189.4" r="1.75" class="dk"/><circle cx="710.6" cy="145.4" r="1.75" class="dk"/><circle cx="771.9" cy="164.5" r="1.75" class="dk"/><circle cx="660.1" cy="271.0" r="1.75" class="dy"/><circle cx="640.4" cy="192.7" r="1.75" class="dr"/><circle cx="653.7" cy="234.8" r="1.75" class="dy"/><circle cx="656.3" cy="135.2" r="1.75" class="dy"/><circle cx="621.9" cy="210.8" r="1.75" class="dy"/><circle cx="712.3" cy="147.7" r="1.75" class="dk"/><circle cx="715.3" cy="171.5" r="1.75" class="dk"/><circle cx="716.4" cy="145.8" r="1.75" class="dy"/><circle cx="723.2" cy="151.2" r="1.75" class="dy"/><circle cx="692.8" cy="283.1" r="1.75" class="dy"/><circle cx="646.9" cy="154.1" r="1.75" class="dy"/><circle cx="746.1" cy="148.6" r="1.75" class="dy"/><circle cx="616.8" cy="262.8" r="1.75" class="dy"/><circle cx="751.3" cy="171.9" r="1.75" class="dy"/><circle cx="549.3" cy="243.5" r="1.75" class="dy"/><circle cx="757.8" cy="116.0" r="1.75" class="dr"/><circle cx="665.6" cy="203.2" r="1.75" class="dy"/><circle cx="695.0" cy="254.3" r="1.75" class="dr"/><circle cx="776.8" cy="262.6" r="1.75" class="dy"/><circle cx="779.0" cy="217.0" r="1.75" class="dy"/><circle cx="713.8" cy="154.7" r="1.75" class="dr"/><circle cx="611.7" cy="222.3" r="1.75" class="dk"/><circle cx="644.3" cy="163.5" r="1.75" class="dy"/><circle cx="681.5" cy="119.7" r="1.75" class="dy"/><circle cx="550.6" cy="150.8" r="1.75" class="dy"/><circle cx="654.0" cy="174.5" r="1.75" class="dy"/><circle cx="681.0" cy="174.5" r="1.75" class="dy"/><circle cx="668.7" cy="195.6" r="1.75" class="dk"/><circle cx="719.7" cy="182.3" r="1.75" class="dr"/><circle cx="671.3" cy="178.9" r="1.75" class="dr"/><circle cx="707.7" cy="243.9" r="1.75" class="dy"/><circle cx="710.5" cy="262.7" r="1.75" class="dy"/><circle cx="641.8" cy="183.7" r="1.75" class="dr"/><circle cx="742.8" cy="130.3" r="1.75" class="dy"/><circle cx="648.0" cy="186.9" r="1.75" class="dy"/><circle cx="710.4" cy="259.5" r="1.75" class="dr"/><circle cx="625.2" cy="207.1" r="1.75" class="dk"/><circle cx="661.5" cy="114.4" r="1.75" class="dy"/><circle cx="655.5" cy="182.8" r="1.75" class="dr"/><circle cx="724.5" cy="225.6" r="1.75" class="dy"/><circle cx="734.3" cy="130.6" r="1.75" class="dr"/><circle cx="700.4" cy="160.4" r="1.75" class="dr"/><circle cx="712.5" cy="251.4" r="1.75" class="dy"/><circle cx="646.7" cy="204.0" r="1.75" class="dy"/><circle cx="641.8" cy="140.0" r="1.75" class="dr"/><circle cx="725.8" cy="139.1" r="1.75" class="dy"/><circle cx="719.1" cy="257.9" r="1.75" class="dr"/><circle cx="779.8" cy="253.2" r="1.75" class="dy"/><circle cx="651.6" cy="225.5" r="1.75" class="dy"/><circle cx="670.9" cy="200.6" r="1.75" class="dk"/><circle cx="723.7" cy="147.6" r="1.75" class="dr"/><circle cx="744.2" cy="270.7" r="1.75" class="dy"/><circle cx="767.0" cy="169.9" r="1.75" class="dy"/><circle cx="713.7" cy="197.7" r="1.75" class="dr"/><circle cx="627.1" cy="181.7" r="1.75" class="dr"/><circle cx="609.5" cy="177.8" r="1.75" class="dk"/><circle cx="638.7" cy="182.9" r="1.75" class="dy"/><circle cx="772.5" cy="262.6" r="1.75" class="dr"/><circle cx="721.8" cy="150.3" r="1.75" class="dr"/><circle cx="718.4" cy="155.9" r="1.75" class="dk"/><circle cx="676.3" cy="197.7" r="1.75" class="dr"/><circle cx="589.2" cy="186.5" r="1.75" class="dr"/><circle cx="660.9" cy="116.9" r="1.75" class="dk"/><circle cx="714.3" cy="278.4" r="1.75" class="dk"/><circle cx="644.3" cy="179.5" r="1.75" class="dr"/><circle cx="720.9" cy="145.9" r="1.75" class="dy"/><circle cx="645.0" cy="188.8" r="1.75" class="dr"/><circle cx="666.7" cy="136.8" r="1.75" class="dr"/><circle cx="733.1" cy="163.1" r="1.75" class="dy"/><circle cx="709.9" cy="156.2" r="1.75" class="dy"/><circle cx="773.0" cy="190.5" r="1.75" class="dy"/><circle cx="759.8" cy="164.3" r="1.75" class="dr"/><circle cx="571.3" cy="190.0" r="1.75" class="dk"/><circle cx="643.7" cy="190.4" r="1.75" class="dy"/><circle cx="649.2" cy="109.8" r="1.75" class="dy"/><circle cx="747.9" cy="174.6" r="1.75" class="dy"/><circle cx="634.3" cy="178.8" r="1.75" class="dy"/><circle cx="731.7" cy="192.5" r="1.75" class="dy"/><circle cx="747.4" cy="170.8" r="1.75" class="dk"/><circle cx="630.4" cy="237.0" r="1.75" class="dy"/><circle cx="719.8" cy="139.1" r="1.75" class="dy"/><circle cx="709.7" cy="120.5" r="1.75" class="dy"/><circle cx="694.2" cy="280.9" r="1.75" class="dr"/><circle cx="570.2" cy="119.1" r="1.75" class="dr"/><circle cx="771.7" cy="103.3" r="1.75" class="dy"/><circle cx="645.8" cy="184.6" r="1.75" class="dy"/><circle cx="752.4" cy="133.2" r="1.75" class="dy"/><circle cx="616.3" cy="268.8" r="1.75" class="dy"/><circle cx="699.5" cy="236.5" r="1.75" class="dk"/><circle cx="651.0" cy="130.6" r="1.75" class="dy"/><circle cx="777.1" cy="147.9" r="1.75" class="dy"/><circle cx="769.6" cy="128.8" r="1.75" class="dy"/><circle cx="627.5" cy="181.9" r="1.75" class="dy"/><circle cx="757.0" cy="121.0" r="1.75" class="dy"/><circle cx="640.4" cy="184.3" r="1.75" class="dr"/><circle cx="641.5" cy="192.1" r="1.75" class="dy"/><circle cx="778.9" cy="110.3" r="1.75" class="dy"/><circle cx="749.1" cy="123.4" r="1.75" class="dy"/><circle cx="782.5" cy="213.4" r="1.75" class="dy"/><circle cx="644.5" cy="189.3" r="1.75" class="dy"/><circle cx="710.3" cy="277.8" r="1.75" class="dr"/><circle cx="741.5" cy="149.4" r="1.75" class="dy"/><circle cx="660.5" cy="132.8" r="1.75" class="dy"/><circle cx="712.2" cy="152.4" r="1.75" class="dr"/><circle cx="597.1" cy="141.6" r="1.75" class="dy"/><circle cx="563.6" cy="190.8" r="1.75" class="dy"/><circle cx="604.6" cy="246.9" r="1.75" class="dk"/><circle cx="651.6" cy="232.3" r="1.75" class="dk"/><circle cx="714.6" cy="148.5" r="1.75" class="dy"/><circle cx="772.1" cy="101.5" r="1.75" class="dy"/><circle cx="705.8" cy="251.3" r="1.75" class="dk"/><circle cx="657.4" cy="269.6" r="1.75" class="dy"/><circle cx="718.3" cy="158.5" r="1.75" class="dy"/><circle cx="619.3" cy="158.6" r="1.75" class="dy"/><circle cx="745.0" cy="117.5" r="1.75" class="dk"/><circle cx="597.3" cy="241.3" r="1.75" class="dk"/><circle cx="644.0" cy="180.1" r="1.75" class="dy"/><circle cx="765.0" cy="187.9" r="1.75" class="dy"/><circle cx="678.3" cy="190.8" r="1.75" class="dy"/><circle cx="641.8" cy="189.5" r="1.75" class="dy"/><circle cx="726.0" cy="193.3" r="1.75" class="dk"/><circle cx="715.4" cy="153.9" r="1.75" class="dr"/><circle cx="737.2" cy="134.6" r="1.75" class="dy"/><circle cx="730.0" cy="149.1" r="1.75" class="dy"/><circle cx="643.5" cy="190.0" r="1.75" class="dy"/><circle cx="739.3" cy="176.4" r="1.75" class="dy"/><circle cx="692.9" cy="280.9" r="1.75" class="dr"/><circle cx="615.9" cy="186.5" r="1.75" class="dr"/><circle cx="659.9" cy="140.6" r="1.75" class="dy"/><circle cx="623.5" cy="187.0" r="1.75" class="dy"/><circle cx="613.9" cy="235.8" r="1.75" class="dy"/><circle cx="630.1" cy="187.9" r="1.75" class="dy"/><circle cx="724.3" cy="221.3" r="1.75" class="dy"/><circle cx="632.5" cy="189.4" r="1.75" class="dk"/><circle cx="714.9" cy="171.7" r="1.75" class="dy"/><circle cx="702.3" cy="265.4" r="1.75" class="dy"/><circle cx="676.7" cy="173.7" r="1.75" class="dk"/><circle cx="720.6" cy="156.4" r="1.75" class="dy"/><circle cx="767.0" cy="190.5" r="1.75" class="dy"/><circle cx="653.2" cy="233.6" r="1.75" class="dy"/><circle cx="715.4" cy="155.0" r="1.75" class="dr"/><circle cx="717.4" cy="147.9" r="1.75" class="dy"/><circle cx="572.0" cy="110.7" r="1.75" class="dr"/><circle cx="711.9" cy="156.5" r="1.75" class="dk"/><circle cx="755.6" cy="178.1" r="1.75" class="dr"/><circle cx="663.7" cy="169.4" r="1.75" class="dy"/><circle cx="704.1" cy="279.6" r="1.75" class="dy"/><circle cx="716.4" cy="188.8" r="1.75" class="dr"/><circle cx="722.7" cy="222.4" r="1.75" class="dy"/><circle cx="545.3" cy="132.0" r="1.75" class="dy"/><circle cx="617.5" cy="247.0" r="1.75" class="dy"/><circle cx="647.7" cy="169.5" r="1.75" class="dk"/><circle cx="548.9" cy="213.1" r="1.75" class="dy"/><circle cx="772.8" cy="231.3" r="1.75" class="dk"/><circle cx="729.1" cy="215.0" r="1.75" class="dy"/><circle cx="697.1" cy="159.1" r="1.75" class="dr"/><circle cx="668.6" cy="178.8" r="1.75" class="dy"/><circle cx="732.5" cy="203.5" r="1.75" class="dk"/><circle cx="762.8" cy="132.6" r="1.75" class="dy"/><circle cx="775.3" cy="111.3" r="1.75" class="dr"/><circle cx="644.0" cy="206.1" r="1.75" class="dy"/><circle cx="654.8" cy="120.6" r="1.75" class="dy"/><circle cx="774.4" cy="144.0" r="1.75" class="dy"/><circle cx="718.3" cy="154.7" r="1.75" class="dy"/><circle cx="539.6" cy="197.5" r="1.75" class="dr"/><circle cx="719.3" cy="151.5" r="1.75" class="dy"/><circle cx="720.0" cy="146.7" r="1.75" class="dy"/><circle cx="746.2" cy="127.0" r="1.75" class="dy"/><circle cx="755.2" cy="145.5" r="1.75" class="dy"/><circle cx="641.9" cy="201.3" r="1.75" class="dy"/><circle cx="627.3" cy="191.6" r="1.75" class="dr"/><circle cx="777.7" cy="251.3" r="1.75" class="dy"/><circle cx="662.1" cy="154.7" r="1.75" class="dr"/><circle cx="688.8" cy="168.6" r="1.75" class="dy"/><circle cx="664.3" cy="155.1" r="1.75" class="dy"/><circle cx="719.1" cy="205.5" r="1.75" class="dy"/><circle cx="692.9" cy="167.2" r="1.75" class="dk"/><circle cx="695.8" cy="280.0" r="1.75" class="dr"/><circle cx="663.0" cy="148.3" r="1.75" class="dr"/><circle cx="679.7" cy="152.9" r="1.75" class="dy"/><circle cx="658.4" cy="242.1" r="1.75" class="dy"/><circle cx="713.5" cy="146.7" r="1.75" class="dr"/><circle cx="683.2" cy="228.5" r="1.75" class="dy"/><circle cx="690.2" cy="237.2" r="1.75" class="dy"/><circle cx="739.1" cy="278.7" r="1.75" class="dy"/><circle cx="722.8" cy="226.2" r="1.75" class="dy"/><circle cx="724.0" cy="151.7" r="1.75" class="dk"/><circle cx="520.6" cy="205.1" r="1.75" class="dr"/><circle cx="688.7" cy="276.1" r="1.75" class="dy"/><circle cx="763.4" cy="123.0" r="1.75" class="dy"/><circle cx="770.5" cy="130.8" r="1.75" class="dy"/><circle cx="781.7" cy="194.5" r="1.75" class="dy"/><circle cx="718.4" cy="184.7" r="1.75" class="dy"/><circle cx="761.4" cy="114.9" r="1.75" class="dy"/><circle cx="715.6" cy="110.1" r="1.75" class="dy"/><circle cx="549.5" cy="143.2" r="1.75" class="dy"/><circle cx="584.1" cy="156.3" r="1.75" class="dr"/><circle cx="673.6" cy="119.0" r="1.75" class="dy"/><circle cx="756.4" cy="123.3" r="1.75" class="dy"/><circle cx="742.2" cy="170.0" r="1.75" class="dr"/><circle cx="639.9" cy="185.7" r="1.75" class="dy"/><circle cx="739.2" cy="120.7" r="1.75" class="dk"/><circle cx="647.7" cy="211.7" r="1.75" class="dy"/><circle cx="650.8" cy="188.0" r="1.75" class="dr"/><circle cx="656.5" cy="138.8" r="1.75" class="dy"/><circle cx="648.8" cy="178.6" r="1.75" class="dk"/><circle cx="726.4" cy="146.5" r="1.75" class="dy"/><circle cx="655.3" cy="265.1" r="1.75" class="dy"/><circle cx="644.5" cy="215.7" r="1.75" class="dy"/><circle cx="755.2" cy="118.7" r="1.75" class="dr"/><circle cx="720.0" cy="146.2" r="1.75" class="dr"/><circle cx="641.3" cy="194.6" r="1.75" class="dy"/><circle cx="644.1" cy="188.8" r="1.75" class="dy"/><circle cx="742.3" cy="176.2" r="1.75" class="dr"/><circle cx="657.1" cy="197.4" r="1.75" class="dy"/><circle cx="713.9" cy="147.7" r="1.75" class="dy"/><circle cx="684.6" cy="108.8" r="1.75" class="dy"/><circle cx="640.3" cy="199.5" r="1.75" class="dy"/><circle cx="717.2" cy="166.2" r="1.75" class="dy"/><circle cx="778.6" cy="99.3" r="1.75" class="dy"/><circle cx="634.0" cy="181.8" r="1.75" class="dy"/><circle cx="767.8" cy="112.4" r="1.75" class="dk"/><circle cx="631.9" cy="202.3" r="1.75" class="dy"/><circle cx="692.1" cy="284.0" r="1.75" class="dy"/><circle cx="649.2" cy="186.2" r="1.75" class="dr"/><circle cx="602.0" cy="247.5" r="1.75" class="dr"/><circle cx="654.2" cy="233.0" r="1.75" class="dr"/><circle cx="656.4" cy="251.8" r="1.75" class="dy"/><circle cx="616.6" cy="114.5" r="1.75" class="dy"/><circle cx="608.2" cy="117.2" r="1.75" class="dy"/><circle cx="689.5" cy="170.2" r="1.75" class="dy"/><circle cx="734.8" cy="193.0" r="1.75" class="dy"/><circle cx="662.0" cy="117.8" r="1.75" class="dr"/><circle cx="650.7" cy="212.5" r="1.75" class="dk"/><circle cx="773.7" cy="187.1" r="1.75" class="dr"/><circle cx="647.1" cy="189.2" r="1.75" class="dr"/><circle cx="636.8" cy="189.0" r="1.75" class="dy"/><circle cx="714.6" cy="134.7" r="1.75" class="dy"/><circle cx="770.8" cy="122.6" r="1.75" class="dy"/><circle cx="620.0" cy="100.1" r="1.75" class="dy"/><circle cx="649.2" cy="222.5" r="1.75" class="dr"/><circle cx="592.8" cy="241.4" r="1.75" class="dy"/><circle cx="781.5" cy="115.8" r="1.75" class="dy"/><circle cx="560.9" cy="210.2" r="1.75" class="dy"/><circle cx="612.1" cy="188.2" r="1.75" class="dr"/><circle cx="626.2" cy="185.2" r="1.75" class="dk"/><circle cx="650.2" cy="176.1" r="1.75" class="dr"/><circle cx="725.4" cy="150.6" r="1.75" class="dy"/><circle cx="536.4" cy="222.7" r="1.75" class="dr"/><circle cx="704.4" cy="261.7" r="1.75" class="dk"/><circle cx="654.8" cy="238.5" r="1.75" class="dy"/><circle cx="647.7" cy="107.7" r="1.75" class="dy"/><circle cx="696.2" cy="168.4" r="1.75" class="dy"/><circle cx="710.4" cy="114.6" r="1.75" class="dy"/><circle cx="638.3" cy="198.2" r="1.75" class="dr"/><circle cx="736.2" cy="140.0" r="1.75" class="dk"/><circle cx="562.1" cy="249.4" r="1.75" class="dy"/><circle cx="643.7" cy="170.2" r="1.75" class="dr"/><circle cx="644.6" cy="203.2" r="1.75" class="dr"/><circle cx="555.8" cy="106.8" r="1.75" class="dy"/><circle cx="775.0" cy="281.1" r="1.75" class="dk"/><circle cx="716.3" cy="153.6" r="1.75" class="dr"/><circle cx="758.3" cy="112.8" r="1.75" class="dy"/><circle cx="611.0" cy="237.0" r="1.75" class="dy"/><circle cx="716.4" cy="160.5" r="1.75" class="dy"/><circle cx="719.3" cy="149.1" r="1.75" class="dy"/><circle cx="647.3" cy="149.0" r="1.75" class="dr"/><circle cx="715.5" cy="159.5" r="1.75" class="dy"/><circle cx="697.8" cy="101.0" r="1.75" class="dk"/><circle cx="728.6" cy="282.5" r="1.75" class="dy"/><circle cx="779.1" cy="100.1" r="1.75" class="dy"/><circle cx="648.6" cy="110.5" r="1.75" class="dy"/><circle cx="713.5" cy="169.3" r="1.75" class="dk"/><circle cx="554.1" cy="136.7" r="1.75" class="dy"/><circle cx="555.0" cy="218.2" r="1.75" class="dk"/><circle cx="687.6" cy="145.2" r="1.75" class="dy"/><circle cx="658.1" cy="288.5" r="1.75" class="dy"/><circle cx="711.3" cy="145.7" r="1.75" class="dy"/><circle cx="776.6" cy="193.8" r="1.75" class="dy"/><circle cx="659.8" cy="269.9" r="1.75" class="dk"/><circle cx="642.1" cy="182.6" r="1.75" class="dk"/><circle cx="712.5" cy="148.4" r="1.75" class="dr"/><circle cx="780.6" cy="217.5" r="1.75" class="dy"/><circle cx="734.2" cy="190.5" r="1.75" class="dy"/><circle cx="720.0" cy="159.7" r="1.75" class="dk"/><circle cx="639.1" cy="187.9" r="1.75" class="dy"/><circle cx="677.3" cy="199.4" r="1.75" class="dk"/><circle cx="653.2" cy="278.7" r="1.75" class="dy"/><circle cx="615.1" cy="214.6" r="1.75" class="dy"/><circle cx="694.0" cy="107.2" r="1.75" class="dr"/><circle cx="648.1" cy="155.6" r="1.75" class="dy"/><circle cx="774.2" cy="104.1" r="1.75" class="dy"/><circle cx="761.0" cy="240.1" r="1.75" class="dy"/><circle cx="647.4" cy="186.8" r="1.75" class="dy"/><circle cx="668.7" cy="199.5" r="1.75" class="dy"/><circle cx="601.5" cy="99.7" r="1.75" class="dk"/><circle cx="784.7" cy="288.2" r="1.75" class="dk"/><circle cx="715.0" cy="281.7" r="1.75" class="dr"/><circle cx="637.7" cy="190.0" r="1.75" class="dy"/><circle cx="774.1" cy="277.1" r="1.75" class="dr"/><circle cx="759.6" cy="127.0" r="1.75" class="dr"/><circle cx="621.7" cy="186.6" r="1.75" class="dy"/><circle cx="663.8" cy="127.6" r="1.75" class="dy"/><circle cx="656.9" cy="135.4" r="1.75" class="dr"/><circle cx="716.7" cy="137.4" r="1.75" class="dy"/><circle cx="618.2" cy="138.4" r="1.75" class="dy"/><circle cx="762.1" cy="118.9" r="1.75" class="dy"/><circle cx="664.8" cy="182.8" r="1.75" class="dy"/><circle cx="614.1" cy="247.8" r="1.75" class="dy"/><circle cx="651.5" cy="185.1" r="1.75" class="dy"/><circle cx="742.3" cy="170.6" r="1.75" class="dy"/><circle cx="665.5" cy="198.2" r="1.75" class="dy"/><circle cx="626.5" cy="208.8" r="1.75" class="dy"/><circle cx="746.6" cy="153.0" r="1.75" class="dy"/><circle cx="753.0" cy="121.1" r="1.75" class="dy"/><circle cx="648.1" cy="196.9" r="1.75" class="dr"/><circle cx="607.8" cy="232.9" r="1.75" class="dy"/><circle cx="635.1" cy="195.3" r="1.75" class="dr"/><circle cx="758.7" cy="129.0" r="1.75" class="dy"/><circle cx="689.4" cy="108.4" r="1.75" class="dk"/><circle cx="573.9" cy="186.2" r="1.75" class="dy"/><circle cx="723.2" cy="157.7" r="1.75" class="dy"/><circle cx="641.6" cy="189.2" r="1.75" class="dy"/><circle cx="622.3" cy="138.7" r="1.75" class="dy"/><circle cx="590.7" cy="269.1" r="1.75" class="dr"/><circle cx="709.9" cy="160.2" r="1.75" class="dr"/><circle cx="648.9" cy="186.8" r="1.75" class="dk"/><circle cx="653.7" cy="240.8" r="1.75" class="dy"/><circle cx="692.0" cy="215.8" r="1.75" class="dk"/><circle cx="637.4" cy="203.1" r="1.75" class="dk"/><circle cx="719.3" cy="155.5" r="1.75" class="dk"/><circle cx="735.8" cy="208.2" r="1.75" class="dy"/><circle cx="646.4" cy="191.4" r="1.75" class="dy"/><circle cx="618.8" cy="238.5" r="1.75" class="dy"/><circle cx="778.1" cy="103.2" r="1.75" class="dk"/><circle cx="771.8" cy="217.3" r="1.75" class="dy"/><circle cx="651.4" cy="120.7" r="1.75" class="dy"/><circle cx="717.7" cy="143.5" r="1.75" class="dy"/><circle cx="777.9" cy="251.7" r="1.75" class="dk"/><circle cx="646.3" cy="273.5" r="1.75" class="dy"/><circle cx="728.9" cy="242.1" r="1.75" class="dy"/><circle cx="746.4" cy="148.4" r="1.75" class="dr"/><circle cx="676.4" cy="274.3" r="1.75" class="dk"/><circle cx="733.8" cy="210.9" r="1.75" class="dr"/><circle cx="642.3" cy="192.9" r="1.75" class="dr"/><circle cx="648.6" cy="225.0" r="1.75" class="dr"/><circle cx="753.9" cy="131.9" r="1.75" class="dy"/><circle cx="659.9" cy="114.0" r="1.75" class="dy"/><circle cx="667.1" cy="169.2" r="1.75" class="dy"/><circle cx="602.3" cy="239.4" r="1.75" class="dy"/><circle cx="752.1" cy="192.0" r="1.75" class="dy"/><circle cx="788.6" cy="231.0" r="1.75" class="dy"/><circle cx="663.5" cy="133.8" r="1.75" class="dy"/><circle cx="711.8" cy="150.8" r="1.75" class="dy"/><circle cx="607.7" cy="180.5" r="1.75" class="dr"/><circle cx="622.2" cy="114.1" r="1.75" class="dy"/><circle cx="762.7" cy="280.6" r="1.75" class="dy"/><circle cx="596.5" cy="250.9" r="1.75" class="dy"/><circle cx="721.9" cy="155.4" r="1.75" class="dy"/><circle cx="640.5" cy="185.0" r="1.75" class="dy"/><circle cx="706.5" cy="257.4" r="1.75" class="dy"/><circle cx="714.1" cy="165.2" r="1.75" class="dk"/><circle cx="738.3" cy="127.4" r="1.75" class="dk"/><circle cx="739.3" cy="279.1" r="1.75" class="dr"/><circle cx="764.2" cy="112.2" r="1.75" class="dk"/><circle cx="578.0" cy="220.6" r="1.75" class="dy"/><circle cx="739.3" cy="147.8" r="1.75" class="dr"/><circle cx="642.8" cy="206.2" r="1.75" class="dy"/><circle cx="717.7" cy="146.1" r="1.75" class="dr"/><circle cx="768.8" cy="106.2" r="1.75" class="dy"/><circle cx="658.5" cy="196.2" r="1.75" class="dk"/><circle cx="717.9" cy="150.3" r="1.75" class="dy"/><circle cx="771.8" cy="125.0" r="1.75" class="dr"/><circle cx="715.4" cy="149.0" r="1.75" class="dy"/><circle cx="659.2" cy="285.7" r="1.75" class="dy"/><circle cx="639.5" cy="178.3" r="1.75" class="dk"/><circle cx="642.1" cy="191.2" r="1.75" class="dy"/><circle cx="553.8" cy="192.9" r="1.75" class="dy"/><circle cx="761.6" cy="148.4" r="1.75" class="dy"/><circle cx="674.5" cy="143.5" r="1.75" class="dy"/><circle cx="596.5" cy="244.2" r="1.75" class="dy"/><circle cx="778.1" cy="121.4" r="1.75" class="dk"/><circle cx="710.2" cy="172.2" r="1.75" class="dr"/><circle cx="753.2" cy="126.3" r="1.75" class="dy"/><circle cx="780.7" cy="276.1" r="1.75" class="dy"/><circle cx="713.9" cy="126.9" r="1.75" class="dy"/><circle cx="599.4" cy="185.3" r="1.75" class="dy"/><circle cx="684.6" cy="236.4" r="1.75" class="dy"/><circle cx="752.0" cy="135.5" r="1.75" class="dk"/><circle cx="745.4" cy="256.4" r="1.75" class="dy"/><circle cx="723.2" cy="152.1" r="1.75" class="dy"/><circle cx="667.8" cy="280.4" r="1.75" class="dk"/><circle cx="543.6" cy="158.2" r="1.75" class="dk"/><circle cx="679.5" cy="230.2" r="1.75" class="dy"/><circle cx="662.4" cy="139.1" r="1.75" class="dy"/><circle cx="694.3" cy="194.3" r="1.75" class="dy"/><circle cx="651.4" cy="139.4" r="1.75" class="dk"/><circle cx="724.4" cy="226.5" r="1.75" class="dk"/><circle cx="640.7" cy="186.9" r="1.75" class="dy"/><circle cx="752.5" cy="168.7" r="1.75" class="dr"/><circle cx="655.5" cy="186.6" r="1.75" class="dy"/><circle cx="694.3" cy="276.9" r="1.75" class="dy"/><circle cx="723.3" cy="225.0" r="1.75" class="dy"/><circle cx="735.7" cy="155.8" r="1.75" class="dk"/><circle cx="592.5" cy="168.1" r="1.75" class="dk"/><circle cx="645.8" cy="184.6" r="1.75" class="dy"/><circle cx="621.0" cy="115.7" r="1.75" class="dy"/><circle cx="613.1" cy="220.3" r="1.75" class="dy"/><circle cx="641.7" cy="195.6" r="1.75" class="dk"/><circle cx="716.2" cy="191.9" r="1.75" class="dy"/><circle cx="749.9" cy="125.4" r="1.75" class="dy"/><circle cx="675.9" cy="139.5" r="1.75" class="dr"/><circle cx="635.7" cy="183.6" r="1.75" class="dy"/><circle cx="718.1" cy="150.8" r="1.75" class="dk"/><circle cx="714.3" cy="152.9" r="1.75" class="dk"/><circle cx="763.8" cy="169.7" r="1.75" class="dr"/><circle cx="634.7" cy="190.3" r="1.75" class="dy"/><circle cx="719.2" cy="155.3" r="1.75" class="dr"/><circle cx="620.3" cy="218.4" r="1.75" class="dk"/><circle cx="711.0" cy="194.2" r="1.75" class="dy"/><circle cx="650.5" cy="186.3" r="1.75" class="dy"/><circle cx="621.1" cy="248.7" r="1.75" class="dy"/><circle cx="774.2" cy="215.3" r="1.75" class="dy"/><circle cx="697.6" cy="121.2" r="1.75" class="dr"/><circle cx="621.8" cy="126.0" r="1.75" class="dy"/><circle cx="649.2" cy="187.4" r="1.75" class="dy"/><circle cx="641.1" cy="192.0" r="1.75" class="dy"/><circle cx="542.1" cy="195.2" r="1.75" class="dr"/><circle cx="655.5" cy="250.0" r="1.75" class="dr"/><circle cx="752.5" cy="145.7" r="1.75" class="dy"/><circle cx="720.3" cy="141.0" r="1.75" class="dr"/><circle cx="709.6" cy="148.6" r="1.75" class="dk"/><circle cx="781.7" cy="121.2" r="1.75" class="dy"/><circle cx="724.0" cy="162.6" r="1.75" class="dy"/><circle cx="734.2" cy="155.7" r="1.75" class="dy"/><circle cx="670.0" cy="181.2" r="1.75" class="dk"/><circle cx="646.4" cy="197.7" r="1.75" class="dr"/><circle cx="609.4" cy="192.3" r="1.75" class="dy"/><circle cx="662.1" cy="170.8" r="1.75" class="dy"/><circle cx="770.1" cy="139.3" r="1.75" class="dy"/><circle cx="718.2" cy="148.3" r="1.75" class="dk"/><circle cx="733.7" cy="143.4" r="1.75" class="dy"/><circle cx="697.5" cy="196.5" r="1.75" class="dy"/><circle cx="734.1" cy="196.5" r="1.75" class="dy"/><circle cx="640.9" cy="190.0" r="1.75" class="dy"/><circle cx="689.1" cy="168.2" r="1.75" class="dy"/><circle cx="729.4" cy="145.0" r="1.75" class="dy"/><circle cx="634.4" cy="265.6" r="1.75" class="dy"/><circle cx="732.5" cy="212.4" r="1.75" class="dr"/><circle cx="626.7" cy="210.1" r="1.75" class="dy"/><circle cx="617.7" cy="248.5" r="1.75" class="dy"/><circle cx="735.7" cy="167.8" r="1.75" class="dr"/><circle cx="645.9" cy="187.3" r="1.75" class="dy"/><circle cx="699.7" cy="147.6" r="1.75" class="dy"/><circle cx="652.1" cy="265.4" r="1.75" class="dy"/><circle cx="537.7" cy="110.2" r="1.75" class="dy"/><circle cx="618.9" cy="255.5" r="1.75" class="dk"/><circle cx="651.6" cy="248.5" r="1.75" class="dk"/><circle cx="738.6" cy="179.0" r="1.75" class="dy"/><circle cx="599.4" cy="241.3" r="1.75" class="dy"/><circle cx="772.7" cy="101.6" r="1.75" class="dr"/><circle cx="652.8" cy="229.8" r="1.75" class="dy"/><circle cx="642.7" cy="183.5" r="1.75" class="dk"/><circle cx="748.6" cy="159.4" r="1.75" class="dy"/><circle cx="615.1" cy="220.5" r="1.75" class="dy"/><circle cx="715.0" cy="150.5" r="1.75" class="dy"/><circle cx="781.7" cy="221.8" r="1.75" class="dr"/><circle cx="716.8" cy="139.9" r="1.75" class="dy"/><circle cx="665.7" cy="198.7" r="1.75" class="dr"/><circle cx="653.6" cy="195.8" r="1.75" class="dr"/><circle cx="759.2" cy="248.9" r="1.75" class="dy"/><circle cx="732.4" cy="142.1" r="1.75" class="dy"/><circle cx="650.5" cy="119.7" r="1.75" class="dk"/><circle cx="754.9" cy="190.1" r="1.75" class="dr"/><circle cx="594.7" cy="253.8" r="1.75" class="dy"/><circle cx="720.0" cy="152.9" r="1.75" class="dk"/><circle cx="657.1" cy="258.1" r="1.75" class="dy"/><circle cx="761.0" cy="191.1" r="1.75" class="dr"/><circle cx="658.3" cy="290.0" r="1.75" class="dy"/><circle cx="629.3" cy="190.5" r="1.75" class="dy"/><circle cx="639.3" cy="105.1" r="1.75" class="dy"/><circle cx="748.3" cy="229.2" r="1.75" class="dy"/><circle cx="620.1" cy="212.2" r="1.75" class="dr"/><circle cx="710.5" cy="153.7" r="1.75" class="dr"/><circle cx="756.5" cy="117.9" r="1.75" class="dr"/><circle cx="650.0" cy="226.1" r="1.75" class="dy"/><circle cx="709.3" cy="211.7" r="1.75" class="dy"/><circle cx="775.6" cy="126.2" r="1.75" class="dy"/><circle cx="660.5" cy="182.0" r="1.75" class="dy"/><circle cx="550.0" cy="245.1" r="1.75" class="dy"/><circle cx="713.5" cy="257.1" r="1.75" class="dy"/><circle cx="766.5" cy="281.6" r="1.75" class="dy"/><circle cx="588.0" cy="240.2" r="1.75" class="dr"/><circle cx="671.5" cy="198.3" r="1.75" class="dy"/><circle cx="709.7" cy="246.3" r="1.75" class="dk"/><circle cx="660.0" cy="270.0" r="1.75" class="dy"/><circle cx="698.8" cy="122.3" r="1.75" class="dy"/><circle cx="632.6" cy="198.3" r="1.75" class="dy"/><circle cx="639.9" cy="192.9" r="1.75" class="dy"/><circle cx="640.0" cy="200.7" r="1.75" class="dy"/><circle cx="733.9" cy="144.9" r="1.75" class="dy"/><circle cx="768.9" cy="105.5" r="1.75" class="dy"/><circle cx="647.8" cy="165.1" r="1.75" class="dr"/><circle cx="652.5" cy="225.5" r="1.75" class="dy"/><circle cx="694.6" cy="149.2" r="1.75" class="dk"/><circle cx="762.6" cy="228.1" r="1.75" class="dy"/><circle cx="767.1" cy="106.8" r="1.75" class="dy"/><circle cx="643.2" cy="189.2" r="1.75" class="dk"/><circle cx="679.9" cy="115.1" r="1.75" class="dy"/><circle cx="553.9" cy="133.7" r="1.75" class="dy"/><circle cx="577.2" cy="106.8" r="1.75" class="dy"/><circle cx="749.4" cy="186.1" r="1.75" class="dy"/><circle cx="711.3" cy="148.3" r="1.75" class="dy"/><circle cx="737.3" cy="261.4" r="1.75" class="dy"/><circle cx="772.6" cy="122.5" r="1.75" class="dy"/><circle cx="756.2" cy="126.6" r="1.75" class="dy"/><circle cx="643.0" cy="208.5" r="1.75" class="dy"/><circle cx="574.2" cy="192.5" r="1.75" class="dy"/><circle cx="653.8" cy="240.0" r="1.75" class="dr"/><circle cx="648.0" cy="149.4" r="1.75" class="dy"/><circle cx="786.2" cy="192.8" r="1.75" class="dy"/><circle cx="739.7" cy="150.7" r="1.75" class="dy"/><circle cx="693.6" cy="279.2" r="1.75" class="dr"/><circle cx="712.4" cy="151.0" r="1.75" class="dk"/><circle cx="663.1" cy="259.0" r="1.75" class="dr"/><circle cx="574.4" cy="111.8" r="1.75" class="dy"/><circle cx="713.8" cy="158.4" r="1.75" class="dy"/><circle cx="719.9" cy="159.1" r="1.75" class="dy"/><circle cx="645.5" cy="204.9" r="1.75" class="dy"/><circle cx="617.9" cy="215.7" r="1.75" class="dk"/><circle cx="706.7" cy="191.3" r="1.75" class="dy"/><circle cx="626.0" cy="275.5" r="1.75" class="dy"/><circle cx="748.8" cy="133.2" r="1.75" class="dr"/><circle cx="717.5" cy="112.2" r="1.75" class="dk"/><circle cx="645.2" cy="156.3" r="1.75" class="dy"/><circle cx="673.0" cy="175.9" r="1.75" class="dy"/><circle cx="763.6" cy="117.7" r="1.75" class="dr"/><circle cx="716.3" cy="190.8" r="1.75" class="dy"/><circle cx="643.3" cy="181.0" r="1.75" class="dy"/><circle cx="725.5" cy="224.5" r="1.75" class="dk"/><circle cx="777.8" cy="253.9" r="1.75" class="dy"/><circle cx="644.1" cy="195.4" r="1.75" class="dy"/><circle cx="749.0" cy="238.5" r="1.75" class="dy"/><circle cx="612.1" cy="185.6" r="1.75" class="dy"/><circle cx="709.5" cy="258.0" r="1.75" class="dy"/><circle cx="746.3" cy="172.3" r="1.75" class="dy"/><circle cx="730.7" cy="138.0" r="1.75" class="dk"/><circle cx="639.7" cy="136.8" r="1.75" class="dr"/><circle cx="720.0" cy="163.6" r="1.75" class="dr"/><circle cx="721.9" cy="154.7" r="1.75" class="dy"/><circle cx="772.6" cy="191.6" r="1.75" class="dy"/><circle cx="689.3" cy="100.1" r="1.75" class="dy"/><circle cx="637.2" cy="204.3" r="1.75" class="dy"/><circle cx="673.8" cy="196.4" r="1.75" class="dy"/><circle cx="680.3" cy="131.7" r="1.75" class="dk"/><circle cx="629.3" cy="185.4" r="1.75" class="dy"/><circle cx="568.6" cy="188.2" r="1.75" class="dy"/><circle cx="746.9" cy="131.2" r="1.75" class="dk"/><circle cx="679.8" cy="179.5" r="1.75" class="dy"/><circle cx="756.1" cy="142.0" r="1.75" class="dy"/><circle cx="714.6" cy="130.4" r="1.75" class="dy"/><circle cx="713.6" cy="184.0" r="1.75" class="dr"/><circle cx="755.2" cy="193.0" r="1.75" class="dy"/><circle cx="590.6" cy="246.2" r="1.75" class="dy"/><circle cx="717.7" cy="142.4" r="1.75" class="dr"/><circle cx="719.1" cy="156.0" r="1.75" class="dk"/><circle cx="778.5" cy="192.2" r="1.75" class="dy"/><circle cx="659.2" cy="107.4" r="1.75" class="dk"/><circle cx="641.3" cy="187.6" r="1.75" class="dy"/><circle cx="749.0" cy="121.9" r="1.75" class="dy"/><circle cx="718.1" cy="149.4" r="1.75" class="dk"/><circle cx="594.2" cy="264.5" r="1.75" class="dy"/><circle cx="737.5" cy="197.9" r="1.75" class="dr"/><circle cx="645.6" cy="273.5" r="1.75" class="dy"/><circle cx="636.7" cy="202.1" r="1.75" class="dy"/><circle cx="589.8" cy="244.1" r="1.75" class="dy"/><circle cx="649.5" cy="194.3" r="1.75" class="dy"/><circle cx="657.3" cy="193.3" r="1.75" class="dy"/><circle cx="641.9" cy="180.4" r="1.75" class="dy"/><circle cx="614.9" cy="199.7" r="1.75" class="dy"/><circle cx="707.2" cy="154.6" r="1.75" class="dy"/><circle cx="699.9" cy="117.9" r="1.75" class="dy"/><circle cx="766.7" cy="126.9" r="1.75" class="dy"/><circle cx="591.5" cy="246.6" r="1.75" class="dk"/><circle cx="736.5" cy="251.2" r="1.75" class="dr"/><circle cx="731.3" cy="156.6" r="1.75" class="dk"/><circle cx="603.2" cy="119.9" r="1.75" class="dy"/><circle cx="729.5" cy="149.9" r="1.75" class="dy"/><circle cx="712.1" cy="138.8" r="1.75" class="dy"/><circle cx="550.9" cy="130.8" r="1.75" class="dr"/><circle cx="714.3" cy="163.2" r="1.75" class="dy"/><circle cx="770.4" cy="240.2" r="1.75" class="dy"/><circle cx="655.8" cy="198.9" r="1.75" class="dy"/><circle cx="731.1" cy="142.0" r="1.75" class="dy"/><circle cx="753.9" cy="137.4" r="1.75" class="dy"/><circle cx="629.6" cy="251.5" r="1.75" class="dy"/><circle cx="740.2" cy="269.4" r="1.75" class="dk"/><circle cx="617.4" cy="182.3" r="1.75" class="dr"/><circle cx="744.0" cy="283.3" r="1.75" class="dy"/><circle cx="591.7" cy="188.2" r="1.75" class="dy"/><circle cx="766.2" cy="100.4" r="1.75" class="dy"/><circle cx="724.4" cy="112.4" r="1.75" class="dk"/><circle cx="749.6" cy="118.5" r="1.75" class="dy"/><circle cx="641.2" cy="123.9" r="1.75" class="dr"/><circle cx="651.6" cy="196.1" r="1.75" class="dr"/><circle cx="729.5" cy="219.5" r="1.75" class="dk"/><circle cx="781.8" cy="107.0" r="1.75" class="dy"/><circle cx="723.8" cy="230.8" r="1.75" class="dy"/><circle cx="642.5" cy="184.2" r="1.75" class="dy"/><circle cx="724.7" cy="224.5" r="1.75" class="dy"/><circle cx="745.3" cy="121.9" r="1.75" class="dk"/><circle cx="683.9" cy="171.3" r="1.75" class="dy"/><circle cx="631.3" cy="193.1" r="1.75" class="dr"/><circle cx="665.4" cy="181.1" r="1.75" class="dy"/><circle cx="739.9" cy="150.1" r="1.75" class="dy"/><circle cx="683.1" cy="233.6" r="1.75" class="dy"/><circle cx="737.9" cy="192.7" r="1.75" class="dy"/><circle cx="631.0" cy="256.3" r="1.75" class="dy"/><circle cx="713.9" cy="153.7" r="1.75" class="dy"/><circle cx="639.3" cy="193.4" r="1.75" class="dy"/><circle cx="619.1" cy="214.4" r="1.75" class="dy"/><circle cx="714.4" cy="153.8" r="1.75" class="dy"/><circle cx="720.9" cy="149.1" r="1.75" class="dy"/><circle cx="767.0" cy="127.9" r="1.75" class="dy"/><circle cx="680.5" cy="233.1" r="1.75" class="dy"/><circle cx="710.5" cy="158.5" r="1.75" class="dr"/><circle cx="775.3" cy="144.2" r="1.75" class="dy"/><circle cx="776.3" cy="193.1" r="1.75" class="dr"/><circle cx="643.6" cy="184.6" r="1.75" class="dr"/><circle cx="667.1" cy="151.0" r="1.75" class="dy"/><circle cx="691.7" cy="167.9" r="1.75" class="dy"/><circle cx="725.2" cy="155.9" r="1.75" class="dy"/><circle cx="659.3" cy="181.4" r="1.75" class="dr"/><circle cx="760.5" cy="162.1" r="1.75" class="dy"/><circle cx="580.0" cy="159.5" r="1.75" class="dy"/><circle cx="655.3" cy="194.4" r="1.75" class="dk"/><circle cx="668.5" cy="199.4" r="1.75" class="dy"/><circle cx="748.5" cy="161.1" r="1.75" class="dy"/><circle cx="744.4" cy="278.4" r="1.75" class="dy"/><circle cx="721.2" cy="141.5" r="1.75" class="dy"/><circle cx="531.6" cy="196.2" r="1.75" class="dy"/><circle cx="662.3" cy="204.4" r="1.75" class="dy"/><circle cx="639.2" cy="198.7" r="1.75" class="dy"/><circle cx="714.4" cy="155.2" r="1.75" class="dy"/><circle cx="673.1" cy="242.6" r="1.75" class="dr"/><circle cx="786.0" cy="195.1" r="1.75" class="dk"/><circle cx="716.6" cy="256.7" r="1.75" class="dy"/><circle cx="619.1" cy="164.9" r="1.75" class="dr"/><circle cx="588.0" cy="242.6" r="1.75" class="dk"/><circle cx="618.4" cy="216.9" r="1.75" class="dy"/><circle cx="755.4" cy="117.2" r="1.75" class="dr"/><circle cx="655.1" cy="188.0" r="1.75" class="dr"/><circle cx="693.2" cy="126.6" r="1.75" class="dk"/><circle cx="774.7" cy="254.5" r="1.75" class="dk"/><circle cx="613.0" cy="223.8" r="1.75" class="dy"/><circle cx="781.2" cy="214.0" r="1.75" class="dy"/><circle cx="706.0" cy="150.7" r="1.75" class="dy"/><circle cx="691.4" cy="283.8" r="1.75" class="dy"/><circle cx="686.3" cy="110.6" r="1.75" class="dy"/><circle cx="775.6" cy="191.5" r="1.75" class="dy"/><circle cx="644.9" cy="186.7" r="1.75" class="dy"/><circle cx="551.8" cy="135.4" r="1.75" class="dy"/><circle cx="647.7" cy="199.2" r="1.75" class="dy"/><circle cx="730.6" cy="141.9" r="1.75" class="dy"/><circle cx="663.0" cy="136.4" r="1.75" class="dy"/><circle cx="734.5" cy="164.2" r="1.75" class="dy"/><circle cx="714.4" cy="182.1" r="1.75" class="dy"/><circle cx="642.4" cy="197.3" r="1.75" class="dy"/><circle cx="654.2" cy="245.1" r="1.75" class="dr"/><circle cx="647.4" cy="221.4" r="1.75" class="dy"/><circle cx="751.5" cy="173.4" r="1.75" class="dy"/><circle cx="744.3" cy="122.9" r="1.75" class="dy"/><circle cx="772.3" cy="194.5" r="1.75" class="dy"/><circle cx="645.6" cy="189.2" r="1.75" class="dy"/><circle cx="579.7" cy="189.4" r="1.75" class="dy"/><circle cx="605.0" cy="115.9" r="1.75" class="dr"/><circle cx="651.2" cy="187.1" r="1.75" class="dy"/><circle cx="636.5" cy="196.7" r="1.75" class="dr"/><circle cx="732.4" cy="135.1" r="1.75" class="dy"/><circle cx="721.4" cy="191.9" r="1.75" class="dy"/><circle cx="764.2" cy="136.3" r="1.75" class="dy"/><circle cx="646.9" cy="214.0" r="1.75" class="dy"/><circle cx="740.0" cy="134.4" r="1.75" class="dy"/><circle cx="595.8" cy="242.3" r="1.75" class="dy"/><circle cx="650.8" cy="185.7" r="1.75" class="dy"/><circle cx="645.2" cy="188.0" r="1.75" class="dy"/><circle cx="674.7" cy="265.1" r="1.75" class="dy"/><circle cx="639.8" cy="178.5" r="1.75" class="dy"/><circle cx="721.2" cy="151.3" r="1.75" class="dy"/><circle cx="649.7" cy="216.8" r="1.75" class="dy"/><circle cx="701.6" cy="266.6" r="1.75" class="dy"/><circle cx="640.2" cy="196.0" r="1.75" class="dk"/><circle cx="773.8" cy="141.8" r="1.75" class="dy"/><circle cx="713.5" cy="152.6" r="1.75" class="dy"/><circle cx="649.6" cy="109.3" r="1.75" class="dr"/><circle cx="706.5" cy="131.8" r="1.75" class="dy"/><circle cx="677.6" cy="145.3" r="1.75" class="dy"/><circle cx="643.8" cy="207.4" r="1.75" class="dy"/><circle cx="652.5" cy="143.8" r="1.75" class="dk"/><circle cx="644.7" cy="214.4" r="1.75" class="dy"/><circle cx="647.7" cy="159.3" r="1.75" class="dy"/><circle cx="721.5" cy="140.9" r="1.75" class="dk"/><circle cx="643.7" cy="195.3" r="1.75" class="dr"/><circle cx="668.7" cy="150.1" r="1.75" class="dy"/><circle cx="617.8" cy="133.6" r="1.75" class="dy"/><circle cx="609.1" cy="188.7" r="1.75" class="dy"/><circle cx="615.4" cy="257.1" r="1.75" class="dy"/><circle cx="747.9" cy="190.0" r="1.75" class="dy"/><circle cx="715.9" cy="240.8" r="1.75" class="dr"/><circle cx="714.6" cy="191.4" r="1.75" class="dk"/><circle cx="650.7" cy="140.7" r="1.75" class="dy"/><circle cx="645.9" cy="189.4" r="1.75" class="dk"/><circle cx="592.2" cy="227.1" r="1.75" class="dy"/><circle cx="773.4" cy="192.4" r="1.75" class="dy"/><circle cx="643.1" cy="176.2" r="1.75" class="dy"/><circle cx="567.1" cy="147.3" r="1.75" class="dy"/><circle cx="695.7" cy="284.2" r="1.75" class="dy"/><circle cx="778.3" cy="205.3" r="1.75" class="dk"/><circle cx="678.0" cy="200.8" r="1.75" class="dy"/><circle cx="741.6" cy="158.8" r="1.75" class="dy"/><circle cx="648.4" cy="191.9" r="1.75" class="dy"/><circle cx="666.0" cy="177.2" r="1.75" class="dr"/><circle cx="677.3" cy="214.9" r="1.75" class="dy"/><circle cx="722.8" cy="223.5" r="1.75" class="dy"/><circle cx="682.2" cy="239.5" r="1.75" class="dy"/><circle cx="687.7" cy="260.4" r="1.75" class="dy"/><circle cx="705.5" cy="214.6" r="1.75" class="dy"/><circle cx="643.7" cy="188.6" r="1.75" class="dy"/><circle cx="620.7" cy="255.3" r="1.75" class="dr"/><circle cx="638.3" cy="194.8" r="1.75" class="dy"/><circle cx="644.8" cy="169.6" r="1.75" class="dy"/><circle cx="620.6" cy="201.4" r="1.75" class="dy"/><circle cx="705.4" cy="146.4" r="1.75" class="dr"/><circle cx="717.1" cy="151.2" r="1.75" class="dk"/><circle cx="594.4" cy="255.1" r="1.75" class="dy"/><circle cx="697.7" cy="280.5" r="1.75" class="dy"/><circle cx="689.3" cy="241.9" r="1.75" class="dk"/><circle cx="678.6" cy="277.1" r="1.75" class="dy"/><circle cx="645.7" cy="185.3" r="1.75" class="dr"/><circle cx="594.0" cy="257.8" r="1.75" class="dr"/><circle cx="648.7" cy="197.2" r="1.75" class="dr"/><circle cx="688.9" cy="116.9" r="1.75" class="dk"/><circle cx="577.7" cy="108.9" r="1.75" class="dr"/><circle cx="643.0" cy="181.3" r="1.75" class="dy"/><circle cx="664.0" cy="185.3" r="1.75" class="dy"/><circle cx="777.5" cy="282.4" r="1.75" class="dy"/><circle cx="665.3" cy="180.2" r="1.75" class="dy"/><circle cx="714.2" cy="151.3" r="1.75" class="dy"/><circle cx="656.8" cy="198.5" r="1.75" class="dy"/><circle cx="709.0" cy="140.1" r="1.75" class="dr"/><circle cx="691.0" cy="222.5" r="1.75" class="dy"/><circle cx="548.1" cy="235.9" r="1.75" class="dy"/><circle cx="687.0" cy="115.9" r="1.75" class="dy"/><circle cx="709.9" cy="151.2" r="1.75" class="dy"/><circle cx="663.6" cy="209.0" r="1.75" class="dy"/><circle cx="732.0" cy="140.4" r="1.75" class="dy"/><circle cx="621.8" cy="213.7" r="1.75" class="dy"/><circle cx="641.6" cy="190.6" r="1.75" class="dy"/><circle cx="774.6" cy="192.0" r="1.75" class="dy"/><circle cx="656.1" cy="256.5" r="1.75" class="dy"/><circle cx="775.0" cy="194.8" r="1.75" class="dr"/><circle cx="696.5" cy="277.9" r="1.75" class="dy"/><circle cx="711.9" cy="148.5" r="1.75" class="dy"/><circle cx="597.1" cy="240.3" r="1.75" class="dr"/><circle cx="777.3" cy="122.0" r="1.75" class="dy"/><circle cx="632.8" cy="179.7" r="1.75" class="dy"/><circle cx="668.9" cy="177.2" r="1.75" class="dk"/><circle cx="651.2" cy="116.2" r="1.75" class="dk"/><circle cx="745.1" cy="130.0" r="1.75" class="dy"/><circle cx="648.2" cy="182.6" r="1.75" class="dy"/><circle cx="722.2" cy="152.3" r="1.75" class="dy"/><circle cx="754.5" cy="136.7" r="1.75" class="dr"/><circle cx="676.3" cy="148.4" r="1.75" class="dy"/><circle cx="677.7" cy="176.0" r="1.75" class="dr"/><circle cx="561.5" cy="127.1" r="1.75" class="dy"/><circle cx="699.2" cy="168.8" r="1.75" class="dr"/><circle cx="781.4" cy="215.0" r="1.75" class="dy"/><circle cx="640.7" cy="189.0" r="1.75" class="dy"/><circle cx="725.8" cy="194.6" r="1.75" class="dr"/><circle cx="760.2" cy="122.4" r="1.75" class="dk"/><circle cx="731.6" cy="150.7" r="1.75" class="dr"/><circle cx="621.0" cy="150.7" r="1.75" class="dy"/><circle cx="644.7" cy="167.4" r="1.75" class="dy"/><circle cx="723.5" cy="149.0" r="1.75" class="dr"/><circle cx="638.8" cy="184.2" r="1.75" class="dy"/><circle cx="772.8" cy="101.6" r="1.75" class="dr"/><circle cx="651.8" cy="230.4" r="1.75" class="dr"/><circle cx="652.0" cy="228.8" r="1.75" class="dy"/><circle cx="643.3" cy="200.7" r="1.75" class="dy"/><circle cx="648.7" cy="192.5" r="1.75" class="dr"/><circle cx="693.7" cy="220.0" r="1.75" class="dy"/><circle cx="733.5" cy="146.1" r="1.75" class="dy"/><circle cx="681.2" cy="115.4" r="1.75" class="dy"/><circle cx="760.8" cy="216.4" r="1.75" class="dy"/><circle cx="777.6" cy="117.3" r="1.75" class="dk"/><circle cx="665.7" cy="176.9" r="1.75" class="dk"/><circle cx="642.3" cy="190.0" r="1.75" class="dy"/><circle cx="756.4" cy="129.8" r="1.75" class="dr"/><circle cx="643.2" cy="204.2" r="1.75" class="dy"/><circle cx="745.6" cy="131.0" r="1.75" class="dy"/><circle cx="703.9" cy="233.6" r="1.75" class="dy"/><circle cx="652.5" cy="193.2" r="1.75" class="dk"/><circle cx="660.8" cy="114.1" r="1.75" class="dk"/><circle cx="641.2" cy="185.9" r="1.75" class="dy"/><circle cx="617.8" cy="250.0" r="1.75" class="dr"/><circle cx="587.5" cy="135.1" r="1.75" class="dy"/><circle cx="649.0" cy="192.7" r="1.75" class="dy"/><circle cx="643.8" cy="187.0" r="1.75" class="dy"/><circle cx="711.8" cy="138.1" r="1.75" class="dr"/><circle cx="779.7" cy="291.5" r="1.75" class="dk"/><circle cx="707.6" cy="260.4" r="1.75" class="dy"/><circle cx="614.7" cy="197.2" r="1.75" class="dy"/><circle cx="726.5" cy="192.3" r="1.75" class="dy"/><circle cx="775.3" cy="264.1" r="1.75" class="dy"/><circle cx="648.1" cy="186.6" r="1.75" class="dy"/><circle cx="618.9" cy="245.2" r="1.75" class="dy"/><circle cx="648.6" cy="152.8" r="1.75" class="dy"/><circle cx="644.9" cy="179.5" r="1.75" class="dr"/><circle cx="651.4" cy="247.3" r="1.75" class="dr"/><circle cx="666.3" cy="181.2" r="1.75" class="dy"/><circle cx="640.1" cy="196.7" r="1.75" class="dy"/><circle cx="666.6" cy="271.9" r="1.75" class="dy"/><circle cx="644.5" cy="187.5" r="1.75" class="dk"/><circle cx="659.0" cy="196.4" r="1.75" class="dk"/><circle cx="757.8" cy="164.2" r="1.75" class="dy"/><circle cx="749.0" cy="124.0" r="1.75" class="dr"/><circle cx="739.3" cy="129.7" r="1.75" class="dy"/><circle cx="690.6" cy="279.7" r="1.75" class="dr"/><circle cx="649.5" cy="120.9" r="1.75" class="dy"/><circle cx="657.5" cy="133.9" r="1.75" class="dy"/><circle cx="722.4" cy="147.8" r="1.75" class="dy"/><circle cx="729.8" cy="156.4" r="1.75" class="dk"/><circle cx="644.9" cy="209.6" r="1.75" class="dy"/><circle cx="712.8" cy="256.5" r="1.75" class="dy"/><circle cx="766.3" cy="220.4" r="1.75" class="dy"/><circle cx="768.9" cy="174.3" r="1.75" class="dy"/><circle cx="551.7" cy="237.7" r="1.75" class="dy"/><circle cx="705.3" cy="192.7" r="1.75" class="dy"/><circle cx="706.2" cy="144.2" r="1.75" class="dy"/><circle cx="696.4" cy="108.5" r="1.75" class="dy"/><circle cx="708.2" cy="157.9" r="1.75" class="dy"/><circle cx="621.6" cy="139.5" r="1.75" class="dy"/><circle cx="718.5" cy="108.1" r="1.75" class="dy"/><circle cx="669.6" cy="193.6" r="1.75" class="dy"/><circle cx="748.8" cy="169.9" r="1.75" class="dy"/><circle cx="697.0" cy="200.6" r="1.75" class="dy"/><circle cx="687.1" cy="252.1" r="1.75" class="dy"/><circle cx="706.0" cy="255.6" r="1.75" class="dk"/><circle cx="710.1" cy="156.9" r="1.75" class="dy"/><circle cx="766.0" cy="119.5" r="1.75" class="dy"/><circle cx="753.2" cy="119.1" r="1.75" class="dy"/><circle cx="658.1" cy="288.6" r="1.75" class="dy"/><circle cx="618.5" cy="228.4" r="1.75" class="dk"/><circle cx="735.1" cy="142.7" r="1.75" class="dy"/><circle cx="746.3" cy="159.6" r="1.75" class="dk"/><circle cx="650.3" cy="201.4" r="1.75" class="dy"/><circle cx="729.2" cy="142.4" r="1.75" class="dy"/><circle cx="706.5" cy="131.1" r="1.75" class="dr"/><circle cx="650.4" cy="137.2" r="1.75" class="dy"/><circle cx="539.2" cy="197.7" r="1.75" class="dy"/><circle cx="651.6" cy="198.4" r="1.75" class="dy"/><circle cx="669.4" cy="203.6" r="1.75" class="dr"/><circle cx="647.1" cy="182.5" r="1.75" class="dr"/><circle cx="607.9" cy="230.5" r="1.75" class="dy"/><circle cx="621.3" cy="212.0" r="1.75" class="dk"/><circle cx="659.4" cy="131.3" r="1.75" class="dk"/><circle cx="552.4" cy="232.5" r="1.75" class="dk"/><circle cx="715.4" cy="182.7" r="1.75" class="dy"/><circle cx="680.4" cy="171.9" r="1.75" class="dr"/><circle cx="742.7" cy="173.9" r="1.75" class="dr"/><circle cx="722.9" cy="151.7" r="1.75" class="dy"/><circle cx="643.0" cy="191.3" r="1.75" class="dy"/><circle cx="658.6" cy="181.8" r="1.75" class="dy"/><circle cx="676.1" cy="229.6" r="1.75" class="dy"/><circle cx="774.0" cy="163.0" r="1.75" class="dy"/><circle cx="622.4" cy="178.8" r="1.75" class="dy"/><circle cx="709.9" cy="148.1" r="1.75" class="dr"/><circle cx="641.3" cy="179.9" r="1.75" class="dy"/><circle cx="641.2" cy="188.8" r="1.75" class="dy"/><circle cx="766.2" cy="165.4" r="1.75" class="dy"/><circle cx="781.6" cy="216.6" r="1.75" class="dy"/><circle cx="617.7" cy="218.0" r="1.75" class="dk"/><circle cx="739.9" cy="193.3" r="1.75" class="dy"/><circle cx="745.7" cy="260.3" r="1.75" class="dy"/><circle cx="646.9" cy="148.3" r="1.75" class="dr"/><circle cx="638.3" cy="189.2" r="1.75" class="dr"/><circle cx="668.3" cy="117.7" r="1.75" class="dr"/><circle cx="757.5" cy="243.3" r="1.75" class="dy"/><circle cx="709.5" cy="153.9" r="1.75" class="dr"/><circle cx="550.1" cy="195.8" r="1.75" class="dr"/><circle cx="643.3" cy="191.9" r="1.75" class="dr"/><circle cx="768.6" cy="113.1" r="1.75" class="dk"/><circle cx="548.8" cy="141.1" r="1.75" class="dy"/><circle cx="602.6" cy="183.3" r="1.75" class="dk"/><circle cx="725.7" cy="154.3" r="1.75" class="dy"/><circle cx="666.2" cy="141.7" r="1.75" class="dr"/><circle cx="724.2" cy="177.2" r="1.75" class="dy"/><circle cx="646.8" cy="266.2" r="1.75" class="dk"/><circle cx="559.8" cy="164.1" r="1.75" class="dy"/><circle cx="716.0" cy="147.7" r="1.75" class="dr"/><circle cx="721.0" cy="212.9" r="1.75" class="dy"/><circle cx="715.4" cy="157.5" r="1.75" class="dy"/><circle cx="622.1" cy="241.4" r="1.75" class="dy"/><circle cx="714.3" cy="152.6" r="1.75" class="dr"/><circle cx="747.3" cy="125.3" r="1.75" class="dr"/><circle cx="750.1" cy="118.7" r="1.75" class="dy"/><circle cx="732.3" cy="209.7" r="1.75" class="dy"/><circle cx="554.8" cy="192.4" r="1.75" class="dy"/><circle cx="693.1" cy="168.1" r="1.75" class="dy"/><circle cx="753.6" cy="121.2" r="1.75" class="dk"/><circle cx="738.4" cy="133.7" r="1.75" class="dy"/><circle cx="688.2" cy="238.0" r="1.75" class="dy"/><circle cx="744.9" cy="210.4" r="1.75" class="dy"/><circle cx="614.2" cy="232.2" r="1.75" class="dr"/><circle cx="763.2" cy="112.7" r="1.75" class="dy"/><circle cx="643.8" cy="189.0" r="1.75" class="dk"/><circle cx="630.0" cy="189.1" r="1.75" class="dy"/><circle cx="658.7" cy="279.3" r="1.75" class="dr"/><circle cx="717.8" cy="138.7" r="1.75" class="dy"/><circle cx="724.8" cy="144.2" r="1.75" class="dy"/><circle cx="772.9" cy="113.2" r="1.75" class="dy"/><circle cx="533.2" cy="248.5" r="1.75" class="dy"/><circle cx="720.1" cy="145.9" r="1.75" class="dy"/><circle cx="659.3" cy="279.1" r="1.75" class="dy"/><circle cx="620.4" cy="221.2" r="1.75" class="dy"/><circle cx="613.1" cy="247.8" r="1.75" class="dy"/><circle cx="732.8" cy="202.1" r="1.75" class="dy"/><circle cx="697.9" cy="164.2" r="1.75" class="dy"/><circle cx="700.9" cy="114.7" r="1.75" class="dk"/><circle cx="643.2" cy="188.1" r="1.75" class="dy"/><circle cx="606.9" cy="187.2" r="1.75" class="dk"/><circle cx="755.8" cy="116.1" r="1.75" class="dy"/><circle cx="696.0" cy="275.5" r="1.75" class="dr"/><circle cx="663.6" cy="152.2" r="1.75" class="dy"/><circle cx="768.2" cy="252.3" r="1.75" class="dk"/><circle cx="706.6" cy="195.5" r="1.75" class="dy"/><circle cx="648.9" cy="223.9" r="1.75" class="dk"/><circle cx="633.0" cy="191.3" r="1.75" class="dy"/><circle cx="664.7" cy="169.3" r="1.75" class="dy"/><circle cx="639.6" cy="182.3" r="1.75" class="dr"/><circle cx="642.8" cy="191.3" r="1.75" class="dy"/><circle cx="770.9" cy="122.0" r="1.75" class="dy"/><circle cx="721.2" cy="153.8" r="1.75" class="dr"/><circle cx="631.7" cy="190.3" r="1.75" class="dk"/><circle cx="737.0" cy="189.9" r="1.75" class="dy"/><circle cx="705.3" cy="255.5" r="1.75" class="dy"/><circle cx="553.8" cy="190.8" r="1.75" class="dy"/><circle cx="665.2" cy="145.7" r="1.75" class="dk"/><circle cx="712.1" cy="141.0" r="1.75" class="dy"/><circle cx="703.4" cy="149.8" r="1.75" class="dr"/><circle cx="616.9" cy="185.5" r="1.75" class="dy"/><circle cx="753.9" cy="121.8" r="1.75" class="dr"/><circle cx="644.9" cy="195.4" r="1.75" class="dy"/><circle cx="641.4" cy="227.6" r="1.75" class="dy"/><circle cx="679.3" cy="231.6" r="1.75" class="dk"/><circle cx="719.5" cy="140.0" r="1.75" class="dk"/><circle cx="643.1" cy="190.2" r="1.75" class="dy"/><circle cx="592.0" cy="233.0" r="1.75" class="dy"/><circle cx="749.9" cy="123.6" r="1.75" class="dy"/><circle cx="657.2" cy="249.5" r="1.75" class="dy"/><circle cx="642.2" cy="185.9" r="1.75" class="dk"/><circle cx="762.6" cy="158.9" r="1.75" class="dr"/><circle cx="635.4" cy="99.5" r="1.75" class="dy"/><circle cx="592.2" cy="248.0" r="1.75" class="dr"/><circle cx="718.1" cy="183.4" r="1.75" class="dy"/><circle cx="653.0" cy="232.3" r="1.75" class="dy"/><circle cx="619.1" cy="137.9" r="1.75" class="dy"/><circle cx="773.4" cy="188.9" r="1.75" class="dy"/><circle cx="775.1" cy="285.7" r="1.75" class="dy"/><circle cx="648.9" cy="115.6" r="1.75" class="dy"/><circle cx="549.5" cy="134.4" r="1.75" class="dy"/><circle cx="656.1" cy="238.5" r="1.75" class="dy"/><circle cx="776.2" cy="211.8" r="1.75" class="dy"/><circle cx="639.4" cy="179.8" r="1.75" class="dy"/><circle cx="731.9" cy="205.7" r="1.75" class="dy"/><circle cx="721.2" cy="252.0" r="1.75" class="dk"/><circle cx="763.0" cy="124.8" r="1.75" class="dy"/><circle cx="601.0" cy="239.1" r="1.75" class="dy"/><circle cx="764.2" cy="107.8" r="1.75" class="dk"/><circle cx="558.9" cy="190.9" r="1.75" class="dr"/><circle cx="641.7" cy="187.9" r="1.75" class="dy"/><circle cx="545.7" cy="192.7" r="1.75" class="dr"/><circle cx="642.2" cy="204.0" r="1.75" class="dk"/><circle cx="641.7" cy="191.5" r="1.75" class="dy"/><circle cx="776.0" cy="104.7" r="1.75" class="dk"/><circle cx="613.0" cy="240.2" r="1.75" class="dy"/><circle cx="656.7" cy="242.0" r="1.75" class="dk"/><circle cx="712.9" cy="147.5" r="1.75" class="dy"/><circle cx="569.3" cy="194.5" r="1.75" class="dy"/><circle cx="666.6" cy="195.9" r="1.75" class="dk"/><circle cx="644.8" cy="190.4" r="1.75" class="dr"/><circle cx="672.0" cy="273.5" r="1.75" class="dk"/><circle cx="604.5" cy="246.6" r="1.75" class="dr"/><circle cx="767.4" cy="114.1" r="1.75" class="dr"/><circle cx="757.6" cy="280.9" r="1.75" class="dy"/><circle cx="727.4" cy="143.3" r="1.75" class="dk"/><circle cx="645.5" cy="186.5" r="1.75" class="dy"/><circle cx="711.7" cy="151.5" r="1.75" class="dk"/><circle cx="547.8" cy="240.5" r="1.75" class="dr"/><circle cx="696.4" cy="165.6" r="1.75" class="dy"/><circle cx="690.7" cy="195.9" r="1.75" class="dr"/><circle cx="599.5" cy="247.2" r="1.75" class="dy"/><circle cx="618.1" cy="242.6" r="1.75" class="dy"/><circle cx="655.7" cy="252.1" r="1.75" class="dk"/><circle cx="785.0" cy="140.3" r="1.75" class="dy"/><circle cx="660.2" cy="154.0" r="1.75" class="dy"/><circle cx="762.9" cy="268.8" r="1.75" class="dr"/><circle cx="681.0" cy="226.3" r="1.75" class="dy"/><circle cx="649.3" cy="146.0" r="1.75" class="dy"/><circle cx="652.7" cy="201.4" r="1.75" class="dr"/><circle cx="681.1" cy="121.6" r="1.75" class="dy"/><circle cx="606.6" cy="234.8" r="1.75" class="dy"/><circle cx="770.6" cy="284.6" r="1.75" class="dr"/><circle cx="748.4" cy="175.8" r="1.75" class="dk"/><circle cx="739.1" cy="135.5" r="1.75" class="dr"/><circle cx="616.8" cy="231.4" r="1.75" class="dy"/><circle cx="658.0" cy="274.9" r="1.75" class="dk"/><circle cx="669.9" cy="201.8" r="1.75" class="dr"/><circle cx="681.6" cy="234.7" r="1.75" class="dy"/><circle cx="749.7" cy="133.6" r="1.75" class="dy"/><circle cx="592.6" cy="241.4" r="1.75" class="dy"/><circle cx="647.5" cy="167.9" r="1.75" class="dy"/><circle cx="662.4" cy="150.4" r="1.75" class="dy"/><circle cx="701.7" cy="229.0" r="1.75" class="dk"/><circle cx="726.5" cy="148.7" r="1.75" class="dk"/><circle cx="720.3" cy="150.5" r="1.75" class="dy"/><circle cx="698.3" cy="283.1" r="1.75" class="dy"/><circle cx="713.2" cy="193.5" r="1.75" class="dy"/><circle cx="689.7" cy="277.3" r="1.75" class="dk"/><circle cx="575.3" cy="242.4" r="1.75" class="dy"/><circle cx="617.8" cy="269.7" r="1.75" class="dk"/><circle cx="633.1" cy="191.4" r="1.75" class="dy"/><circle cx="621.1" cy="238.6" r="1.75" class="dk"/><circle cx="616.2" cy="230.1" r="1.75" class="dy"/><circle cx="780.5" cy="234.1" r="1.75" class="dy"/><circle cx="761.1" cy="161.5" r="1.75" class="dk"/><circle cx="723.7" cy="261.5" r="1.75" class="dr"/><circle cx="714.1" cy="151.0" r="1.75" class="dy"/><circle cx="772.2" cy="279.0" r="1.75" class="dr"/><circle cx="721.6" cy="146.6" r="1.75" class="dy"/><circle cx="772.1" cy="108.0" r="1.75" class="dy"/><circle cx="723.7" cy="222.1" r="1.75" class="dy"/><circle cx="722.1" cy="188.3" r="1.75" class="dy"/><circle cx="710.8" cy="160.3" r="1.75" class="dy"/><circle cx="746.1" cy="117.9" r="1.75" class="dy"/><circle cx="657.4" cy="256.5" r="1.75" class="dy"/><circle cx="644.8" cy="157.4" r="1.75" class="dr"/><circle cx="763.7" cy="260.9" r="1.75" class="dy"/><circle cx="665.4" cy="202.0" r="1.75" class="dy"/><circle cx="713.3" cy="149.8" r="1.75" class="dr"/><circle cx="762.6" cy="106.7" r="1.75" class="dy"/><circle cx="759.8" cy="170.5" r="1.75" class="dy"/><circle cx="632.5" cy="189.9" r="1.75" class="dy"/><circle cx="629.6" cy="204.2" r="1.75" class="dk"/><circle cx="754.9" cy="116.5" r="1.75" class="dy"/><circle cx="714.9" cy="147.0" r="1.75" class="dy"/><circle cx="675.4" cy="198.7" r="1.75" class="dy"/><circle cx="735.6" cy="266.7" r="1.75" class="dk"/><circle cx="696.1" cy="172.5" r="1.75" class="dr"/><circle cx="769.2" cy="140.5" r="1.75" class="dr"/><circle cx="717.9" cy="147.6" r="1.75" class="dy"/><circle cx="737.2" cy="269.3" r="1.75" class="dy"/><circle cx="616.4" cy="259.5" r="1.75" class="dy"/><circle cx="565.5" cy="196.0" r="1.75" class="dy"/><circle cx="619.7" cy="181.6" r="1.75" class="dy"/><circle cx="603.0" cy="148.0" r="1.75" class="dy"/><circle cx="697.1" cy="198.3" r="1.75" class="dr"/><circle cx="648.2" cy="185.3" r="1.75" class="dy"/><circle cx="757.0" cy="121.1" r="1.75" class="dy"/><circle cx="746.3" cy="156.4" r="1.75" class="dy"/><circle cx="778.1" cy="161.5" r="1.75" class="dk"/><circle cx="621.5" cy="133.7" r="1.75" class="dy"/><circle cx="758.0" cy="107.5" r="1.75" class="dr"/><circle cx="642.8" cy="203.9" r="1.75" class="dy"/><circle cx="559.2" cy="179.2" r="1.75" class="dy"/><circle cx="658.2" cy="190.3" r="1.75" class="dy"/><circle cx="644.3" cy="190.4" r="1.75" class="dk"/><circle cx="718.0" cy="140.1" r="1.75" class="dy"/><circle cx="622.3" cy="153.9" r="1.75" class="dk"/><circle cx="754.7" cy="185.0" r="1.75" class="dr"/><circle cx="758.7" cy="119.4" r="1.75" class="dy"/><circle cx="722.2" cy="136.3" r="1.75" class="dk"/><circle cx="651.1" cy="194.1" r="1.75" class="dy"/><circle cx="699.6" cy="265.1" r="1.75" class="dr"/><circle cx="781.0" cy="225.4" r="1.75" class="dy"/><circle cx="756.1" cy="114.8" r="1.75" class="dy"/><circle cx="644.1" cy="205.9" r="1.75" class="dy"/><circle cx="648.1" cy="196.8" r="1.75" class="dy"/><circle cx="684.4" cy="228.5" r="1.75" class="dy"/><circle cx="692.7" cy="189.0" r="1.75" class="dy"/><circle cx="647.9" cy="154.8" r="1.75" class="dk"/><circle cx="640.1" cy="183.2" r="1.75" class="dy"/><circle cx="772.5" cy="102.4" r="1.75" class="dr"/><circle cx="747.2" cy="158.8" r="1.75" class="dr"/><circle cx="706.1" cy="161.7" r="1.75" class="dy"/><circle cx="720.1" cy="145.9" r="1.75" class="dy"/><circle cx="770.0" cy="166.7" r="1.75" class="dy"/><circle cx="687.4" cy="198.0" r="1.75" class="dk"/><circle cx="643.7" cy="207.6" r="1.75" class="dy"/><circle cx="642.0" cy="171.5" r="1.75" class="dy"/><circle cx="774.7" cy="124.7" r="1.75" class="dy"/><circle cx="769.0" cy="105.3" r="1.75" class="dr"/><circle cx="714.8" cy="184.8" r="1.75" class="dk"/><circle cx="767.4" cy="281.4" r="1.75" class="dy"/><circle cx="713.6" cy="122.8" r="1.75" class="dy"/><circle cx="766.2" cy="134.1" r="1.75" class="dy"/><circle cx="568.8" cy="109.9" r="1.75" class="dk"/><circle cx="636.8" cy="135.8" r="1.75" class="dy"/><circle cx="731.1" cy="210.1" r="1.75" class="dy"/><circle cx="714.0" cy="137.3" r="1.75" class="dy"/><circle cx="740.2" cy="258.3" r="1.75" class="dr"/><circle cx="765.3" cy="233.3" r="1.75" class="dr"/><circle cx="638.5" cy="203.1" r="1.75" class="dy"/><circle cx="678.1" cy="174.4" r="1.75" class="dk"/><circle cx="766.6" cy="122.2" r="1.75" class="dk"/><circle cx="646.7" cy="191.0" r="1.75" class="dy"/><circle cx="644.0" cy="191.0" r="1.75" class="dr"/><circle cx="693.6" cy="165.7" r="1.75" class="dy"/><circle cx="756.9" cy="128.9" r="1.75" class="dy"/><circle cx="645.6" cy="187.3" r="1.75" class="dy"/><circle cx="676.2" cy="215.2" r="1.75" class="dy"/><circle cx="641.4" cy="186.6" r="1.75" class="dr"/><circle cx="628.5" cy="187.3" r="1.75" class="dy"/><circle cx="701.7" cy="164.6" r="1.75" class="dk"/><circle cx="616.4" cy="219.1" r="1.75" class="dk"/><circle cx="730.4" cy="163.5" r="1.75" class="dk"/><circle cx="647.7" cy="187.0" r="1.75" class="dy"/><circle cx="719.3" cy="149.5" r="1.75" class="dk"/><circle cx="741.8" cy="169.4" r="1.75" class="dr"/><circle cx="626.2" cy="200.8" r="1.75" class="dr"/><circle cx="591.0" cy="248.4" r="1.75" class="dk"/><circle cx="712.9" cy="129.4" r="1.75" class="dy"/><circle cx="755.4" cy="170.0" r="1.75" class="dy"/><circle cx="650.6" cy="190.8" r="1.75" class="dy"/><circle cx="650.9" cy="143.4" r="1.75" class="dr"/><circle cx="747.5" cy="217.0" r="1.75" class="dy"/><circle cx="737.6" cy="116.8" r="1.75" class="dk"/><circle cx="651.8" cy="191.9" r="1.75" class="dy"/><circle cx="653.9" cy="173.5" r="1.75" class="dy"/><circle cx="735.1" cy="117.6" r="1.75" class="dy"/><circle cx="777.6" cy="191.9" r="1.75" class="dy"/><circle cx="780.2" cy="231.8" r="1.75" class="dr"/><circle cx="731.0" cy="140.9" r="1.75" class="dy"/><circle cx="728.8" cy="143.4" r="1.75" class="dy"/><circle cx="544.8" cy="135.0" r="1.75" class="dr"/><circle cx="642.5" cy="198.0" r="1.75" class="dr"/><circle cx="565.6" cy="207.0" r="1.75" class="dr"/><circle cx="697.3" cy="195.8" r="1.75" class="dy"/><circle cx="738.1" cy="191.3" r="1.75" class="dr"/><circle cx="684.3" cy="169.9" r="1.75" class="dr"/><circle cx="764.1" cy="120.6" r="1.75" class="dr"/><circle cx="711.3" cy="203.3" r="1.75" class="dy"/><circle cx="773.2" cy="285.1" r="1.75" class="dy"/><circle cx="776.9" cy="115.8" r="1.75" class="dy"/><circle cx="661.8" cy="268.5" r="1.75" class="dk"/><circle cx="765.7" cy="278.1" r="1.75" class="dk"/><circle cx="646.4" cy="193.1" r="1.75" class="dk"/><circle cx="782.4" cy="172.0" r="1.75" class="dy"/><circle cx="536.3" cy="199.9" r="1.75" class="dy"/><circle cx="632.2" cy="192.5" r="1.75" class="dy"/><circle cx="652.5" cy="185.7" r="1.75" class="dy"/><circle cx="756.5" cy="105.4" r="1.75" class="dy"/><circle cx="653.5" cy="161.0" r="1.75" class="dr"/><circle cx="728.9" cy="150.2" r="1.75" class="dy"/><circle cx="782.4" cy="216.7" r="1.75" class="dy"/><circle cx="644.2" cy="168.7" r="1.75" class="dy"/><circle cx="642.6" cy="127.2" r="1.75" class="dy"/><circle cx="712.3" cy="163.5" r="1.75" class="dy"/><circle cx="617.0" cy="183.1" r="1.75" class="dy"/><circle cx="755.1" cy="128.2" r="1.75" class="dy"/><circle cx="639.4" cy="187.1" r="1.75" class="dy"/><circle cx="723.8" cy="152.8" r="1.75" class="dk"/><circle cx="643.0" cy="133.9" r="1.75" class="dy"/><circle cx="639.7" cy="189.1" r="1.75" class="dy"/><circle cx="721.3" cy="153.0" r="1.75" class="dy"/><circle cx="729.1" cy="192.8" r="1.75" class="dy"/><circle cx="664.0" cy="195.7" r="1.75" class="dy"/><circle cx="704.9" cy="261.2" r="1.75" class="dy"/><circle cx="630.0" cy="184.3" r="1.75" class="dy"/><circle cx="605.5" cy="236.1" r="1.75" class="dk"/><circle cx="756.9" cy="144.3" r="1.75" class="dy"/><circle cx="715.2" cy="154.0" r="1.75" class="dk"/><circle cx="579.4" cy="101.5" r="1.75" class="dy"/><circle cx="649.2" cy="113.7" r="1.75" class="dk"/><circle cx="723.1" cy="280.9" r="1.75" class="dy"/><circle cx="715.2" cy="174.0" r="1.75" class="dy"/><circle cx="618.0" cy="250.9" r="1.75" class="dy"/><circle cx="654.9" cy="271.2" r="1.75" class="dk"/><circle cx="726.8" cy="145.2" r="1.75" class="dk"/><circle cx="689.3" cy="177.6" r="1.75" class="dy"/><circle cx="737.2" cy="166.6" r="1.75" class="dy"/><circle cx="643.1" cy="196.2" r="1.75" class="dy"/><circle cx="726.7" cy="220.2" r="1.75" class="dr"/><circle cx="706.1" cy="257.2" r="1.75" class="dr"/><circle cx="641.9" cy="200.4" r="1.75" class="dr"/><circle cx="690.4" cy="281.2" r="1.75" class="dy"/><circle cx="640.6" cy="195.8" r="1.75" class="dy"/><circle cx="654.0" cy="270.4" r="1.75" class="dy"/><circle cx="742.1" cy="136.2" r="1.75" class="dy"/><circle cx="664.4" cy="116.3" r="1.75" class="dy"/><circle cx="648.1" cy="216.1" r="1.75" class="dk"/><circle cx="719.1" cy="262.9" r="1.75" class="dr"/><circle cx="752.0" cy="126.8" r="1.75" class="dk"/><circle cx="652.3" cy="169.5" r="1.75" class="dy"/><circle cx="752.2" cy="151.9" r="1.75" class="dy"/><circle cx="649.2" cy="126.6" r="1.75" class="dy"/><circle cx="626.4" cy="190.2" r="1.75" class="dy"/><circle cx="745.9" cy="169.7" r="1.75" class="dy"/><circle cx="756.7" cy="114.7" r="1.75" class="dk"/><circle cx="618.6" cy="233.6" r="1.75" class="dy"/><circle cx="765.8" cy="108.3" r="1.75" class="dy"/><circle cx="752.5" cy="122.2" r="1.75" class="dr"/><circle cx="654.3" cy="203.8" r="1.75" class="dk"/><circle cx="583.5" cy="186.2" r="1.75" class="dk"/><circle cx="736.9" cy="172.2" r="1.75" class="dy"/><circle cx="744.6" cy="173.2" r="1.75" class="dy"/><circle cx="721.6" cy="192.7" r="1.75" class="dk"/><circle cx="621.8" cy="162.1" r="1.75" class="dy"/><circle cx="721.4" cy="148.2" r="1.75" class="dy"/><circle cx="643.6" cy="187.7" r="1.75" class="dr"/><circle cx="670.7" cy="207.8" r="1.75" class="dy"/><circle cx="642.0" cy="204.7" r="1.75" class="dy"/><circle cx="644.9" cy="195.0" r="1.75" class="dy"/><circle cx="723.0" cy="156.3" r="1.75" class="dy"/><circle cx="624.6" cy="184.3" r="1.75" class="dy"/><circle cx="749.0" cy="160.0" r="1.75" class="dy"/><circle cx="768.5" cy="106.7" r="1.75" class="dy"/><circle cx="545.9" cy="211.9" r="1.75" class="dy"/><circle cx="767.3" cy="112.7" r="1.75" class="dr"/><circle cx="736.0" cy="150.8" r="1.75" class="dy"/><circle cx="717.7" cy="152.4" r="1.75" class="dy"/><circle cx="688.5" cy="167.3" r="1.75" class="dy"/><circle cx="649.6" cy="197.2" r="1.75" class="dy"/><circle cx="749.2" cy="121.7" r="1.75" class="dy"/><circle cx="626.9" cy="170.7" r="1.75" class="dy"/><circle cx="646.4" cy="191.8" r="1.75" class="dy"/><circle cx="784.9" cy="183.1" r="1.75" class="dy"/><circle cx="603.0" cy="235.9" r="1.75" class="dy"/><circle cx="716.3" cy="195.4" r="1.75" class="dy"/><circle cx="714.9" cy="190.8" r="1.75" class="dr"/><circle cx="713.7" cy="149.8" r="1.75" class="dy"/><circle cx="774.1" cy="120.1" r="1.75" class="dy"/><circle cx="543.2" cy="194.7" r="1.75" class="dy"/><circle cx="779.1" cy="117.2" r="1.75" class="dk"/><circle cx="640.9" cy="195.2" r="1.75" class="dy"/><circle cx="654.9" cy="253.2" r="1.75" class="dy"/><circle cx="737.0" cy="219.9" r="1.75" class="dk"/><circle cx="764.4" cy="167.6" r="1.75" class="dy"/><circle cx="604.6" cy="155.1" r="1.75" class="dy"/><circle cx="749.3" cy="161.6" r="1.75" class="dy"/><circle cx="647.8" cy="196.9" r="1.75" class="dy"/><circle cx="750.2" cy="178.8" r="1.75" class="dy"/><circle cx="711.9" cy="182.9" r="1.75" class="dy"/><circle cx="662.0" cy="155.1" r="1.75" class="dy"/><circle cx="707.3" cy="173.1" r="1.75" class="dy"/><circle cx="642.1" cy="177.1" r="1.75" class="dy"/><circle cx="545.3" cy="136.0" r="1.75" class="dr"/><circle cx="610.6" cy="249.3" r="1.75" class="dy"/><circle cx="715.5" cy="184.1" r="1.75" class="dy"/><circle cx="757.7" cy="162.7" r="1.75" class="dy"/><circle cx="558.1" cy="140.5" r="1.75" class="dy"/><circle cx="702.0" cy="131.2" r="1.75" class="dr"/><circle cx="640.7" cy="194.6" r="1.75" class="dy"/><circle cx="713.1" cy="152.0" r="1.75" class="dk"/><circle cx="754.6" cy="149.9" r="1.75" class="dy"/><circle cx="621.9" cy="140.5" r="1.75" class="dy"/><circle cx="656.6" cy="251.0" r="1.75" class="dr"/><circle cx="704.4" cy="262.3" r="1.75" class="dy"/><circle cx="755.0" cy="127.3" r="1.75" class="dk"/><circle cx="641.1" cy="191.9" r="1.75" class="dr"/><circle cx="599.2" cy="112.4" r="1.75" class="dy"/><circle cx="717.0" cy="192.6" r="1.75" class="dy"/><circle cx="755.2" cy="280.2" r="1.75" class="dr"/><circle cx="578.1" cy="106.2" r="1.75" class="dr"/><circle cx="770.2" cy="104.6" r="1.75" class="dr"/><circle cx="633.5" cy="189.1" r="1.75" class="dy"/><circle cx="649.3" cy="122.1" r="1.75" class="dr"/><circle cx="783.5" cy="194.5" r="1.75" class="dy"/><circle cx="663.2" cy="180.8" r="1.75" class="dy"/><circle cx="751.9" cy="144.9" r="1.75" class="dy"/><circle cx="747.2" cy="171.6" r="1.75" class="dk"/><circle cx="748.1" cy="152.0" r="1.75" class="dy"/><circle cx="748.9" cy="123.3" r="1.75" class="dy"/><circle cx="771.6" cy="103.9" r="1.75" class="dk"/><circle cx="595.2" cy="214.9" r="1.75" class="dr"/><circle cx="709.8" cy="145.6" r="1.75" class="dy"/><circle cx="666.6" cy="183.4" r="1.75" class="dy"/><circle cx="640.3" cy="177.0" r="1.75" class="dr"/><circle cx="771.2" cy="112.2" r="1.75" class="dy"/><circle cx="633.4" cy="191.9" r="1.75" class="dr"/><circle cx="648.8" cy="184.2" r="1.75" class="dk"/><circle cx="740.5" cy="148.5" r="1.75" class="dk"/><circle cx="719.0" cy="145.8" r="1.75" class="dy"/><circle cx="651.4" cy="145.6" r="1.75" class="dr"/><circle cx="529.7" cy="226.3" r="1.75" class="dy"/><circle cx="624.8" cy="208.3" r="1.75" class="dr"/><circle cx="730.0" cy="233.6" r="1.75" class="dy"/><circle cx="660.1" cy="192.5" r="1.75" class="dy"/><circle cx="755.7" cy="156.0" r="1.75" class="dy"/><circle cx="665.9" cy="150.3" r="1.75" class="dy"/><circle cx="772.4" cy="121.3" r="1.75" class="dy"/><circle cx="619.0" cy="207.2" r="1.75" class="dr"/><circle cx="642.2" cy="185.4" r="1.75" class="dy"/><circle cx="722.3" cy="150.3" r="1.75" class="dy"/><circle cx="657.7" cy="268.7" r="1.75" class="dr"/><circle cx="764.3" cy="163.5" r="1.75" class="dr"/><circle cx="604.6" cy="189.6" r="1.75" class="dy"/><circle cx="736.2" cy="138.4" r="1.75" class="dy"/><circle cx="766.4" cy="223.5" r="1.75" class="dy"/><circle cx="601.9" cy="250.2" r="1.75" class="dy"/><circle cx="707.6" cy="206.8" r="1.75" class="dk"/><circle cx="711.1" cy="152.9" r="1.75" class="dy"/><circle cx="696.3" cy="274.8" r="1.75" class="dk"/><circle cx="716.2" cy="151.1" r="1.75" class="dy"/><circle cx="778.1" cy="125.3" r="1.75" class="dy"/><circle cx="628.9" cy="114.0" r="1.75" class="dy"/><circle cx="751.3" cy="159.6" r="1.75" class="dr"/><circle cx="558.4" cy="171.7" r="1.75" class="dy"/><circle cx="652.5" cy="234.1" r="1.75" class="dk"/><circle cx="653.8" cy="241.3" r="1.75" class="dy"/><circle cx="717.1" cy="278.5" r="1.75" class="dy"/><circle cx="654.1" cy="268.7" r="1.75" class="dy"/><circle cx="707.9" cy="155.7" r="1.75" class="dy"/><circle cx="642.4" cy="194.0" r="1.75" class="dr"/><circle cx="623.7" cy="208.8" r="1.75" class="dk"/><circle cx="738.7" cy="189.7" r="1.75" class="dy"/><circle cx="630.0" cy="178.5" r="1.75" class="dr"/><circle cx="753.9" cy="191.3" r="1.75" class="dy"/><circle cx="718.1" cy="146.6" r="1.75" class="dr"/><circle cx="621.5" cy="271.0" r="1.75" class="dy"/><circle cx="781.7" cy="172.4" r="1.75" class="dr"/><circle cx="646.4" cy="219.4" r="1.75" class="dy"/><circle cx="684.7" cy="231.1" r="1.75" class="dy"/><circle cx="733.5" cy="245.9" r="1.75" class="dy"/><circle cx="729.0" cy="122.5" r="1.75" class="dy"/><circle cx="718.7" cy="156.0" r="1.75" class="dy"/><circle cx="721.5" cy="152.2" r="1.75" class="dy"/><circle cx="616.4" cy="236.1" r="1.75" class="dy"/><circle cx="633.0" cy="186.8" r="1.75" class="dy"/><circle cx="737.5" cy="193.3" r="1.75" class="dy"/><circle cx="627.5" cy="137.3" r="1.75" class="dy"/><circle cx="783.1" cy="194.6" r="1.75" class="dk"/><circle cx="639.4" cy="201.1" r="1.75" class="dy"/><circle cx="658.1" cy="282.0" r="1.75" class="dy"/><circle cx="644.2" cy="190.4" r="1.75" class="dy"/><circle cx="654.4" cy="268.3" r="1.75" class="dk"/><circle cx="658.8" cy="255.8" r="1.75" class="dy"/><circle cx="729.5" cy="224.3" r="1.75" class="dr"/><circle cx="752.7" cy="120.9" r="1.75" class="dy"/><circle cx="561.5" cy="208.2" r="1.75" class="dy"/><circle cx="591.3" cy="262.6" r="1.75" class="dr"/><circle cx="767.2" cy="111.5" r="1.75" class="dy"/><circle cx="644.8" cy="101.4" r="1.75" class="dy"/><circle cx="704.4" cy="234.4" r="1.75" class="dy"/><circle cx="730.2" cy="190.9" r="1.75" class="dr"/><circle cx="552.1" cy="235.1" r="1.75" class="dy"/><circle cx="624.7" cy="247.5" r="1.75" class="dr"/><circle cx="721.1" cy="152.6" r="1.75" class="dy"/><circle cx="636.7" cy="197.8" r="1.75" class="dr"/><circle cx="735.7" cy="165.9" r="1.75" class="dy"/><circle cx="657.5" cy="287.6" r="1.75" class="dk"/><circle cx="658.5" cy="193.9" r="1.75" class="dk"/><circle cx="739.0" cy="276.6" r="1.75" class="dy"/><circle cx="749.1" cy="228.7" r="1.75" class="dy"/><circle cx="720.8" cy="153.1" r="1.75" class="dy"/><circle cx="777.1" cy="221.9" r="1.75" class="dr"/><circle cx="729.8" cy="247.1" r="1.75" class="dy"/><circle cx="652.4" cy="191.2" r="1.75" class="dy"/><circle cx="716.3" cy="105.5" r="1.75" class="dk"/><circle cx="628.9" cy="221.8" r="1.75" class="dy"/><circle cx="723.6" cy="158.9" r="1.75" class="dr"/><circle cx="741.4" cy="134.8" r="1.75" class="dy"/><circle cx="716.6" cy="155.9" r="1.75" class="dy"/><circle cx="739.5" cy="146.9" r="1.75" class="dy"/><circle cx="751.0" cy="147.6" r="1.75" class="dy"/><circle cx="775.4" cy="112.6" r="1.75" class="dk"/><circle cx="640.9" cy="281.9" r="1.75" class="dr"/><circle cx="660.3" cy="120.8" r="1.75" class="dr"/><circle cx="626.4" cy="250.0" r="1.75" class="dy"/><circle cx="729.2" cy="192.9" r="1.75" class="dr"/><circle cx="596.2" cy="241.0" r="1.75" class="dy"/><circle cx="700.8" cy="165.0" r="1.75" class="dy"/><circle cx="737.7" cy="277.7" r="1.75" class="dy"/><circle cx="725.5" cy="145.4" r="1.75" class="dy"/><circle cx="754.2" cy="191.2" r="1.75" class="dy"/><circle cx="750.7" cy="129.5" r="1.75" class="dr"/><circle cx="731.5" cy="279.7" r="1.75" class="dy"/><circle cx="752.7" cy="144.4" r="1.75" class="dk"/><circle cx="617.3" cy="252.1" r="1.75" class="dk"/><circle cx="746.0" cy="194.2" r="1.75" class="dr"/><circle cx="723.5" cy="152.2" r="1.75" class="dy"/><circle cx="727.4" cy="159.2" r="1.75" class="dk"/><circle cx="763.2" cy="165.2" r="1.75" class="dr"/><circle cx="595.4" cy="251.6" r="1.75" class="dy"/><circle cx="575.9" cy="240.6" r="1.75" class="dk"/><circle cx="619.6" cy="102.7" r="1.75" class="dr"/><circle cx="642.3" cy="179.3" r="1.75" class="dy"/><circle cx="714.4" cy="193.0" r="1.75" class="dy"/><circle cx="755.8" cy="125.1" r="1.75" class="dy"/><circle cx="653.1" cy="230.2" r="1.75" class="dy"/><circle cx="754.6" cy="121.2" r="1.75" class="dy"/><circle cx="735.5" cy="151.7" r="1.75" class="dy"/><circle cx="758.9" cy="104.8" r="1.75" class="dy"/><circle cx="721.0" cy="111.0" r="1.75" class="dy"/><circle cx="726.1" cy="185.6" r="1.75" class="dy"/><circle cx="715.0" cy="181.7" r="1.75" class="dy"/><circle cx="636.5" cy="252.9" r="1.75" class="dy"/><circle cx="640.7" cy="191.1" r="1.75" class="dy"/><circle cx="689.8" cy="141.8" r="1.75" class="dy"/><circle cx="579.6" cy="131.7" r="1.75" class="dk"/><circle cx="727.5" cy="265.9" r="1.75" class="dy"/><circle cx="767.1" cy="107.7" r="1.75" class="dk"/><circle cx="720.7" cy="144.8" r="1.75" class="dk"/><circle cx="711.8" cy="117.3" r="1.75" class="dy"/><circle cx="771.3" cy="104.8" r="1.75" class="dy"/><circle cx="773.0" cy="283.3" r="1.75" class="dr"/><circle cx="645.5" cy="202.4" r="1.75" class="dy"/><circle cx="647.2" cy="119.2" r="1.75" class="dr"/><circle cx="643.4" cy="180.4" r="1.75" class="dk"/><circle cx="740.3" cy="175.4" r="1.75" class="dr"/><circle cx="750.6" cy="122.2" r="1.75" class="dy"/><circle cx="751.5" cy="133.2" r="1.75" class="dy"/><circle cx="643.6" cy="169.7" r="1.75" class="dk"/><circle cx="769.1" cy="283.2" r="1.75" class="dy"/><circle cx="708.1" cy="173.2" r="1.75" class="dr"/><circle cx="595.3" cy="253.1" r="1.75" class="dy"/><circle cx="716.3" cy="147.4" r="1.75" class="dy"/><circle cx="718.8" cy="152.8" r="1.75" class="dy"/><circle cx="642.2" cy="195.2" r="1.75" class="dr"/><circle cx="770.2" cy="195.0" r="1.75" class="dk"/><circle cx="595.4" cy="243.0" r="1.75" class="dy"/><circle cx="566.4" cy="176.6" r="1.75" class="dy"/><circle cx="632.1" cy="198.3" r="1.75" class="dy"/><circle cx="726.1" cy="151.9" r="1.75" class="dy"/><circle cx="626.0" cy="190.2" r="1.75" class="dk"/><circle cx="589.6" cy="124.6" r="1.75" class="dy"/><circle cx="778.6" cy="120.9" r="1.75" class="dk"/><circle cx="649.5" cy="148.4" r="1.75" class="dr"/><circle cx="772.0" cy="284.5" r="1.75" class="dy"/><circle cx="614.7" cy="218.9" r="1.75" class="dk"/><circle cx="753.5" cy="192.8" r="1.75" class="dy"/><circle cx="743.9" cy="160.6" r="1.75" class="dy"/><circle cx="641.0" cy="179.2" r="1.75" class="dy"/><circle cx="759.0" cy="166.2" r="1.75" class="dk"/><circle cx="762.0" cy="193.0" r="1.75" class="dy"/><circle cx="723.9" cy="146.1" r="1.75" class="dk"/><circle cx="751.1" cy="142.9" r="1.75" class="dy"/><circle cx="718.5" cy="197.1" r="1.75" class="dr"/><circle cx="704.1" cy="129.9" r="1.75" class="dy"/><circle cx="771.6" cy="163.4" r="1.75" class="dy"/><circle cx="644.7" cy="168.6" r="1.75" class="dy"/><circle cx="635.5" cy="197.2" r="1.75" class="dk"/><circle cx="721.2" cy="146.0" r="1.75" class="dr"/><circle cx="620.6" cy="99.8" r="1.75" class="dk"/><circle cx="677.6" cy="183.6" r="1.75" class="dr"/><circle cx="644.2" cy="203.7" r="1.75" class="dy"/><circle cx="717.9" cy="148.2" r="1.75" class="dy"/><circle cx="648.7" cy="191.0" r="1.75" class="dy"/><circle cx="647.0" cy="108.5" r="1.75" class="dy"/><circle cx="666.5" cy="258.7" r="1.75" class="dy"/><circle cx="656.9" cy="277.3" r="1.75" class="dy"/><circle cx="726.6" cy="217.8" r="1.75" class="dy"/><circle cx="720.3" cy="142.9" r="1.75" class="dy"/><circle cx="743.6" cy="176.7" r="1.75" class="dr"/><circle cx="680.6" cy="161.5" r="1.75" class="dy"/><circle cx="781.1" cy="193.9" r="1.75" class="dy"/><circle cx="661.7" cy="208.8" r="1.75" class="dy"/><circle cx="775.7" cy="164.6" r="1.75" class="dy"/><circle cx="734.6" cy="203.0" r="1.75" class="dy"/><circle cx="608.8" cy="215.0" r="1.75" class="dk"/><circle cx="621.8" cy="110.7" r="1.75" class="dy"/><circle cx="641.5" cy="196.5" r="1.75" class="dy"/><circle cx="742.3" cy="175.0" r="1.75" class="dy"/><circle cx="750.7" cy="165.8" r="1.75" class="dy"/><circle cx="649.0" cy="193.3" r="1.75" class="dr"/><circle cx="529.7" cy="204.7" r="1.75" class="dk"/><circle cx="772.1" cy="180.2" r="1.75" class="dk"/><circle cx="636.1" cy="180.6" r="1.75" class="dk"/><circle cx="578.2" cy="188.3" r="1.75" class="dk"/><circle cx="641.3" cy="193.3" r="1.75" class="dk"/><circle cx="575.1" cy="209.9" r="1.75" class="dk"/><circle cx="562.1" cy="189.2" r="1.75" class="dy"/><circle cx="662.3" cy="102.7" r="1.75" class="dy"/><circle cx="696.0" cy="121.3" r="1.75" class="dy"/><circle cx="618.5" cy="154.5" r="1.75" class="dr"/><circle cx="713.8" cy="172.2" r="1.75" class="dy"/><circle cx="774.1" cy="193.3" r="1.75" class="dy"/><circle cx="673.1" cy="281.7" r="1.75" class="dk"/><circle cx="603.7" cy="243.8" r="1.75" class="dy"/><circle cx="756.6" cy="118.6" r="1.75" class="dy"/><circle cx="721.0" cy="149.8" r="1.75" class="dk"/><circle cx="718.4" cy="150.5" r="1.75" class="dy"/><circle cx="786.8" cy="297.5" r="1.75" class="dy"/><circle cx="649.8" cy="227.2" r="1.75" class="dk"/><circle cx="737.2" cy="213.1" r="1.75" class="dk"/><circle cx="575.0" cy="128.1" r="1.75" class="dy"/><circle cx="579.6" cy="125.2" r="1.75" class="dy"/><circle cx="652.4" cy="190.9" r="1.75" class="dk"/><circle cx="772.4" cy="185.0" r="1.75" class="dr"/><circle cx="771.9" cy="112.5" r="1.75" class="dy"/><circle cx="728.4" cy="153.2" r="1.75" class="dy"/><circle cx="686.1" cy="158.0" r="1.75" class="dr"/><circle cx="650.3" cy="194.1" r="1.75" class="dr"/><circle cx="779.4" cy="284.8" r="1.75" class="dy"/><circle cx="742.9" cy="179.1" r="1.75" class="dy"/><circle cx="772.7" cy="168.2" r="1.75" class="dr"/><circle cx="639.0" cy="182.1" r="1.75" class="dk"/><circle cx="662.0" cy="115.4" r="1.75" class="dr"/><circle cx="640.9" cy="195.7" r="1.75" class="dy"/><circle cx="646.7" cy="188.6" r="1.75" class="dy"/><circle cx="642.9" cy="197.1" r="1.75" class="dy"/><circle cx="645.1" cy="192.0" r="1.75" class="dy"/><circle cx="548.3" cy="195.5" r="1.75" class="dr"/><circle cx="771.6" cy="176.6" r="1.75" class="dy"/><circle cx="644.7" cy="168.5" r="1.75" class="dy"/><circle cx="637.2" cy="189.3" r="1.75" class="dy"/><circle cx="649.2" cy="192.3" r="1.75" class="dy"/><circle cx="640.0" cy="186.6" r="1.75" class="dr"/><circle cx="640.7" cy="183.0" r="1.75" class="dy"/><circle cx="661.3" cy="266.2" r="1.75" class="dy"/><circle cx="784.5" cy="281.8" r="1.75" class="dk"/><circle cx="724.4" cy="215.9" r="1.75" class="dy"/><circle cx="713.2" cy="150.3" r="1.75" class="dy"/><circle cx="642.4" cy="203.0" r="1.75" class="dy"/><circle cx="776.1" cy="124.6" r="1.75" class="dy"/><circle cx="647.0" cy="208.5" r="1.75" class="dr"/><circle cx="685.9" cy="170.9" r="1.75" class="dy"/><circle cx="595.6" cy="115.5" r="1.75" class="dy"/><circle cx="595.4" cy="168.5" r="1.75" class="dr"/><circle cx="758.0" cy="123.3" r="1.75" class="dy"/><circle cx="640.9" cy="187.5" r="1.75" class="dy"/><circle cx="645.6" cy="193.0" r="1.75" class="dy"/><circle cx="626.6" cy="192.6" r="1.75" class="dk"/><circle cx="714.0" cy="145.8" r="1.75" class="dy"/><circle cx="602.9" cy="228.4" r="1.75" class="dy"/><circle cx="602.6" cy="125.8" r="1.75" class="dy"/><circle cx="720.1" cy="229.3" r="1.75" class="dy"/><circle cx="743.9" cy="237.3" r="1.75" class="dr"/><circle cx="764.1" cy="280.9" r="1.75" class="dr"/><circle cx="656.0" cy="253.7" r="1.75" class="dr"/><circle cx="546.6" cy="130.2" r="1.75" class="dy"/><circle cx="623.5" cy="141.1" r="1.75" class="dy"/><circle cx="594.3" cy="109.2" r="1.75" class="dr"/><circle cx="656.3" cy="250.7" r="1.75" class="dy"/><circle cx="659.4" cy="282.4" r="1.75" class="dy"/><circle cx="700.2" cy="189.8" r="1.75" class="dy"/><circle cx="714.6" cy="174.7" r="1.75" class="dk"/><circle cx="751.9" cy="149.7" r="1.75" class="dy"/><circle cx="650.8" cy="127.5" r="1.75" class="dy"/><circle cx="641.4" cy="177.7" r="1.75" class="dk"/><circle cx="722.4" cy="201.7" r="1.75" class="dk"/><circle cx="647.1" cy="216.4" r="1.75" class="dy"/><circle cx="621.9" cy="212.6" r="1.75" class="dy"/><circle cx="739.9" cy="117.0" r="1.75" class="dr"/><circle cx="713.5" cy="163.8" r="1.75" class="dr"/><circle cx="771.6" cy="157.6" r="1.75" class="dy"/><circle cx="642.4" cy="201.8" r="1.75" class="dr"/><circle cx="751.2" cy="123.4" r="1.75" class="dy"/><circle cx="642.2" cy="188.5" r="1.75" class="dy"/><circle cx="695.9" cy="280.2" r="1.75" class="dy"/><circle cx="624.9" cy="212.3" r="1.75" class="dr"/><circle cx="660.6" cy="199.7" r="1.75" class="dy"/><circle cx="655.2" cy="196.9" r="1.75" class="dr"/><circle cx="698.4" cy="126.3" r="1.75" class="dy"/><circle cx="653.8" cy="182.1" r="1.75" class="dy"/><circle cx="718.2" cy="193.0" r="1.75" class="dy"/><circle cx="593.0" cy="135.9" r="1.75" class="dy"/><circle cx="543.6" cy="202.8" r="1.75" class="dk"/><circle cx="656.9" cy="289.6" r="1.75" class="dy"/><circle cx="644.7" cy="213.3" r="1.75" class="dy"/><circle cx="776.5" cy="121.5" r="1.75" class="dk"/><circle cx="777.1" cy="284.5" r="1.75" class="dk"/><circle cx="567.5" cy="207.9" r="1.75" class="dk"/><circle cx="737.4" cy="140.2" r="1.75" class="dy"/><circle cx="656.5" cy="278.6" r="1.75" class="dk"/><circle cx="625.5" cy="135.1" r="1.75" class="dy"/><circle cx="649.9" cy="189.4" r="1.75" class="dr"/><circle cx="652.5" cy="197.0" r="1.75" class="dk"/><circle cx="621.4" cy="205.3" r="1.75" class="dy"/><circle cx="695.0" cy="115.8" r="1.75" class="dy"/><circle cx="729.3" cy="214.3" r="1.75" class="dr"/><circle cx="766.5" cy="106.7" r="1.75" class="dk"/><circle cx="659.0" cy="189.1" r="1.75" class="dr"/><circle cx="723.8" cy="156.2" r="1.75" class="dk"/><circle cx="707.2" cy="184.4" r="1.75" class="dy"/><circle cx="718.9" cy="150.1" r="1.75" class="dy"/><circle cx="730.0" cy="227.9" r="1.75" class="dy"/><circle cx="665.4" cy="153.2" r="1.75" class="dy"/><circle cx="722.2" cy="273.5" r="1.75" class="dk"/><circle cx="780.3" cy="233.6" r="1.75" class="dy"/><circle cx="622.9" cy="213.0" r="1.75" class="dy"/><circle cx="592.0" cy="248.0" r="1.75" class="dy"/><circle cx="649.7" cy="190.2" r="1.75" class="dy"/><circle cx="706.0" cy="194.4" r="1.75" class="dy"/><circle cx="705.2" cy="193.0" r="1.75" class="dy"/><circle cx="589.7" cy="247.0" r="1.75" class="dy"/><circle cx="668.5" cy="115.2" r="1.75" class="dy"/><circle cx="577.6" cy="123.4" r="1.75" class="dy"/><circle cx="524.9" cy="243.5" r="1.75" class="dy"/><circle cx="768.9" cy="284.6" r="1.75" class="dr"/><circle cx="644.4" cy="181.0" r="1.75" class="dy"/><circle cx="718.5" cy="147.7" r="1.75" class="dk"/><circle cx="661.1" cy="264.7" r="1.75" class="dy"/><circle cx="764.1" cy="123.7" r="1.75" class="dy"/><circle cx="704.1" cy="248.7" r="1.75" class="dy"/><circle cx="718.2" cy="150.4" r="1.75" class="dy"/><circle cx="662.1" cy="116.3" r="1.75" class="dr"/><circle cx="777.7" cy="161.2" r="1.75" class="dk"/><circle cx="745.2" cy="129.7" r="1.75" class="dy"/><circle cx="697.5" cy="283.0" r="1.75" class="dy"/><circle cx="750.3" cy="137.7" r="1.75" class="dy"/><circle cx="587.9" cy="236.8" r="1.75" class="dy"/><circle cx="763.1" cy="190.8" r="1.75" class="dy"/><circle cx="700.4" cy="178.7" r="1.75" class="dr"/><circle cx="647.6" cy="100.0" r="1.75" class="dk"/><circle cx="587.7" cy="105.3" r="1.75" class="dy"/><circle cx="689.9" cy="196.9" r="1.75" class="dy"/><circle cx="752.0" cy="182.3" r="1.75" class="dk"/><circle cx="643.8" cy="209.5" r="1.75" class="dy"/><circle cx="772.3" cy="183.8" r="1.75" class="dy"/><circle cx="739.9" cy="192.6" r="1.75" class="dk"/><circle cx="717.1" cy="184.6" r="1.75" class="dk"/><circle cx="584.1" cy="167.8" r="1.75" class="dy"/><circle cx="713.8" cy="150.1" r="1.75" class="dr"/><circle cx="734.8" cy="192.3" r="1.75" class="dy"/><circle cx="641.5" cy="188.0" r="1.75" class="dy"/><circle cx="719.7" cy="147.5" r="1.75" class="dy"/><circle cx="653.4" cy="246.2" r="1.75" class="dy"/><circle cx="770.5" cy="113.7" r="1.75" class="dr"/><circle cx="622.5" cy="114.8" r="1.75" class="dy"/><circle cx="654.7" cy="184.4" r="1.75" class="dy"/><circle cx="552.6" cy="137.0" r="1.75" class="dy"/><circle cx="755.2" cy="283.9" r="1.75" class="dr"/><circle cx="744.7" cy="227.4" r="1.75" class="dy"/><circle cx="636.7" cy="182.4" r="1.75" class="dr"/><circle cx="639.0" cy="200.0" r="1.75" class="dy"/><circle cx="717.8" cy="137.5" r="1.75" class="dy"/><circle cx="549.9" cy="133.5" r="1.75" class="dy"/><circle cx="592.9" cy="239.3" r="1.75" class="dy"/><circle cx="618.5" cy="152.2" r="1.75" class="dy"/><circle cx="637.7" cy="179.3" r="1.75" class="dy"/><circle cx="744.8" cy="217.9" r="1.75" class="dy"/><circle cx="593.1" cy="243.9" r="1.75" class="dy"/><circle cx="755.9" cy="123.6" r="1.75" class="dy"/><circle cx="642.6" cy="197.5" r="1.75" class="dy"/><circle cx="646.6" cy="216.9" r="1.75" class="dy"/><circle cx="644.4" cy="204.5" r="1.75" class="dy"/><circle cx="620.5" cy="135.9" r="1.75" class="dk"/><circle cx="655.2" cy="192.8" r="1.75" class="dy"/><circle cx="598.0" cy="129.5" r="1.75" class="dy"/><circle cx="643.4" cy="183.7" r="1.75" class="dy"/><circle cx="672.4" cy="284.9" r="1.75" class="dy"/><circle cx="618.6" cy="247.5" r="1.75" class="dy"/><circle cx="701.9" cy="161.1" r="1.75" class="dk"/><circle cx="625.2" cy="134.0" r="1.75" class="dy"/><circle cx="652.2" cy="267.4" r="1.75" class="dk"/><circle cx="591.8" cy="101.1" r="1.75" class="dk"/><circle cx="709.4" cy="259.7" r="1.75" class="dk"/><circle cx="636.9" cy="184.6" r="1.75" class="dy"/><circle cx="718.1" cy="151.5" r="1.75" class="dy"/><circle cx="553.6" cy="195.0" r="1.75" class="dk"/><circle cx="538.4" cy="154.9" r="1.75" class="dy"/><circle cx="645.1" cy="203.5" r="1.75" class="dy"/><circle cx="742.7" cy="134.1" r="1.75" class="dr"/><circle cx="629.7" cy="192.9" r="1.75" class="dy"/><circle cx="756.2" cy="120.9" r="1.75" class="dy"/><circle cx="772.7" cy="190.8" r="1.75" class="dy"/><circle cx="655.8" cy="207.7" r="1.75" class="dk"/><circle cx="632.5" cy="189.5" r="1.75" class="dy"/><circle cx="660.6" cy="115.3" r="1.75" class="dy"/><circle cx="720.6" cy="156.0" r="1.75" class="dr"/><circle cx="774.0" cy="124.7" r="1.75" class="dy"/><circle cx="622.4" cy="130.9" r="1.75" class="dy"/><circle cx="726.7" cy="147.9" r="1.75" class="dy"/><circle cx="723.6" cy="221.1" r="1.75" class="dk"/><circle cx="637.4" cy="186.8" r="1.75" class="dy"/><circle cx="646.6" cy="214.9" r="1.75" class="dy"/><circle cx="711.5" cy="154.5" r="1.75" class="dy"/><circle cx="713.0" cy="160.0" r="1.75" class="dy"/><circle cx="710.0" cy="258.0" r="1.75" class="dy"/><circle cx="738.8" cy="121.9" r="1.75" class="dy"/><circle cx="572.7" cy="190.5" r="1.75" class="dy"/><circle cx="718.1" cy="155.8" r="1.75" class="dy"/><circle cx="581.9" cy="244.0" r="1.75" class="dy"/><circle cx="762.6" cy="117.4" r="1.75" class="dy"/><circle cx="774.9" cy="188.6" r="1.75" class="dy"/><circle cx="745.4" cy="138.4" r="1.75" class="dr"/><circle cx="647.5" cy="152.0" r="1.75" class="dk"/><circle cx="747.9" cy="178.8" r="1.75" class="dy"/><circle cx="672.0" cy="117.0" r="1.75" class="dy"/><circle cx="656.8" cy="246.4" r="1.75" class="dy"/><circle cx="782.5" cy="289.0" r="1.75" class="dr"/><circle cx="643.5" cy="206.3" r="1.75" class="dy"/><circle cx="645.3" cy="204.2" r="1.75" class="dr"/><circle cx="645.8" cy="207.8" r="1.75" class="dr"/><circle cx="772.8" cy="125.3" r="1.75" class="dy"/><circle cx="687.2" cy="133.9" r="1.75" class="dk"/><circle cx="751.7" cy="186.8" r="1.75" class="dy"/><circle cx="748.9" cy="261.1" r="1.75" class="dy"/><circle cx="644.3" cy="211.6" r="1.75" class="dy"/><circle cx="757.8" cy="218.8" r="1.75" class="dk"/><circle cx="711.0" cy="112.1" r="1.75" class="dy"/><circle cx="782.4" cy="222.3" r="1.75" class="dy"/><circle cx="690.5" cy="197.5" r="1.75" class="dy"/><circle cx="646.0" cy="184.4" r="1.75" class="dk"/><circle cx="650.0" cy="145.6" r="1.75" class="dy"/><circle cx="670.7" cy="202.7" r="1.75" class="dy"/><circle cx="639.4" cy="193.1" r="1.75" class="dy"/><circle cx="700.2" cy="273.1" r="1.75" class="dy"/><circle cx="758.1" cy="119.6" r="1.75" class="dr"/><circle cx="746.4" cy="159.2" r="1.75" class="dr"/><circle cx="708.6" cy="266.9" r="1.75" class="dk"/><circle cx="610.4" cy="232.8" r="1.75" class="dk"/><circle cx="761.0" cy="231.6" r="1.75" class="dr"/><circle cx="726.2" cy="150.7" r="1.75" class="dr"/><circle cx="657.1" cy="258.6" r="1.75" class="dr"/><circle cx="771.8" cy="275.8" r="1.75" class="dr"/><circle cx="647.4" cy="194.2" r="1.75" class="dr"/><circle cx="664.3" cy="176.2" r="1.75" class="dy"/><circle cx="653.7" cy="233.8" r="1.75" class="dr"/><circle cx="725.9" cy="152.7" r="1.75" class="dy"/><circle cx="651.3" cy="250.9" r="1.75" class="dy"/><circle cx="725.8" cy="114.2" r="1.75" class="dk"/><circle cx="715.7" cy="246.5" r="1.75" class="dy"/><circle cx="707.2" cy="160.6" r="1.75" class="dy"/><circle cx="593.5" cy="211.0" r="1.75" class="dy"/><circle cx="680.5" cy="227.4" r="1.75" class="dr"/><circle cx="695.1" cy="277.0" r="1.75" class="dy"/><circle cx="740.8" cy="139.9" r="1.75" class="dk"/><circle cx="594.2" cy="196.2" r="1.75" class="dk"/><circle cx="649.8" cy="195.2" r="1.75" class="dr"/><circle cx="634.5" cy="230.5" r="1.75" class="dy"/><circle cx="721.6" cy="150.7" r="1.75" class="dr"/><circle cx="766.0" cy="134.5" r="1.75" class="dy"/><circle cx="756.4" cy="134.5" r="1.75" class="dk"/><circle cx="618.5" cy="217.1" r="1.75" class="dk"/><circle cx="593.8" cy="202.3" r="1.75" class="dy"/><circle cx="774.1" cy="153.1" r="1.75" class="dy"/><circle cx="654.5" cy="268.9" r="1.75" class="dr"/><circle cx="716.1" cy="149.9" r="1.75" class="dr"/><circle cx="773.8" cy="169.3" r="1.75" class="dk"/><circle cx="668.1" cy="139.1" r="1.75" class="dy"/><circle cx="653.2" cy="239.4" r="1.75" class="dy"/><circle cx="645.6" cy="186.3" r="1.75" class="dr"/><circle cx="698.5" cy="165.8" r="1.75" class="dy"/><circle cx="629.0" cy="210.0" r="1.75" class="dk"/><circle cx="740.4" cy="209.8" r="1.75" class="dr"/><circle cx="705.5" cy="146.3" r="1.75" class="dr"/><circle cx="671.9" cy="173.4" r="1.75" class="dk"/><circle cx="648.1" cy="188.1" r="1.75" class="dr"/><circle cx="680.5" cy="231.7" r="1.75" class="dk"/><circle cx="712.7" cy="156.5" r="1.75" class="dy"/><circle cx="723.6" cy="229.5" r="1.75" class="dy"/><circle cx="668.8" cy="200.2" r="1.75" class="dy"/><circle cx="658.7" cy="278.5" r="1.75" class="dy"/><circle cx="766.7" cy="166.8" r="1.75" class="dy"/><circle cx="545.8" cy="199.6" r="1.75" class="dy"/><circle cx="643.0" cy="178.8" r="1.75" class="dr"/><circle cx="652.4" cy="131.4" r="1.75" class="dy"/><circle cx="775.5" cy="106.0" r="1.75" class="dr"/><circle cx="723.6" cy="225.7" r="1.75" class="dr"/><circle cx="703.3" cy="231.2" r="1.75" class="dr"/><circle cx="576.1" cy="116.9" r="1.75" class="dy"/><circle cx="706.5" cy="167.0" r="1.75" class="dy"/><circle cx="658.0" cy="273.6" r="1.75" class="dy"/><circle cx="730.9" cy="143.5" r="1.75" class="dy"/><circle cx="783.0" cy="250.0" r="1.75" class="dr"/><circle cx="618.8" cy="251.3" r="1.75" class="dr"/><circle cx="552.8" cy="131.8" r="1.75" class="dk"/><circle cx="596.4" cy="246.0" r="1.75" class="dy"/><circle cx="762.2" cy="112.3" r="1.75" class="dk"/><circle cx="649.5" cy="125.9" r="1.75" class="dk"/><circle cx="660.9" cy="149.8" r="1.75" class="dy"/><circle cx="580.5" cy="155.8" r="1.75" class="dk"/><circle cx="719.8" cy="145.8" r="1.75" class="dy"/><circle cx="642.9" cy="196.4" r="1.75" class="dk"/><circle cx="648.3" cy="195.4" r="1.75" class="dr"/><circle cx="668.2" cy="185.9" r="1.75" class="dy"/><circle cx="641.1" cy="189.5" r="1.75" class="dy"/><circle cx="711.9" cy="154.1" r="1.75" class="dy"/><circle cx="670.7" cy="178.1" r="1.75" class="dy"/><circle cx="768.5" cy="185.7" r="1.75" class="dy"/><circle cx="528.6" cy="192.3" r="1.75" class="dk"/><circle cx="760.3" cy="115.9" r="1.75" class="dy"/><circle cx="754.5" cy="194.2" r="1.75" class="dy"/><circle cx="725.0" cy="152.0" r="1.75" class="dr"/><circle cx="647.8" cy="168.2" r="1.75" class="dy"/><circle cx="616.4" cy="222.4" r="1.75" class="dy"/><circle cx="623.0" cy="266.7" r="1.75" class="dy"/><circle cx="731.4" cy="149.0" r="1.75" class="dy"/><circle cx="735.7" cy="200.8" r="1.75" class="dy"/><circle cx="657.6" cy="266.9" r="1.75" class="dy"/><circle cx="644.9" cy="208.5" r="1.75" class="dy"/><circle cx="660.2" cy="253.5" r="1.75" class="dy"/><circle cx="731.2" cy="141.8" r="1.75" class="dy"/><circle cx="618.3" cy="135.1" r="1.75" class="dk"/><circle cx="654.3" cy="201.9" r="1.75" class="dy"/><circle cx="708.6" cy="159.7" r="1.75" class="dy"/><circle cx="741.4" cy="130.1" r="1.75" class="dy"/><circle cx="718.2" cy="151.3" r="1.75" class="dy"/><circle cx="599.7" cy="250.2" r="1.75" class="dy"/><circle cx="647.9" cy="214.9" r="1.75" class="dk"/><circle cx="715.6" cy="113.3" r="1.75" class="dy"/><circle cx="646.0" cy="194.6" r="1.75" class="dy"/><circle cx="644.3" cy="194.4" r="1.75" class="dr"/><circle cx="580.3" cy="159.1" r="1.75" class="dr"/><circle cx="716.9" cy="155.3" r="1.75" class="dy"/><circle cx="704.6" cy="212.1" r="1.75" class="dr"/><circle cx="722.8" cy="150.3" r="1.75" class="dk"/><circle cx="657.4" cy="266.6" r="1.75" class="dk"/><circle cx="622.4" cy="107.4" r="1.75" class="dy"/><circle cx="641.4" cy="197.8" r="1.75" class="dy"/><circle cx="688.0" cy="285.8" r="1.75" class="dk"/><circle cx="732.8" cy="255.1" r="1.75" class="dy"/><circle cx="705.7" cy="161.6" r="1.75" class="dy"/><circle cx="645.9" cy="211.6" r="1.75" class="dr"/><circle cx="749.3" cy="273.3" r="1.75" class="dy"/><circle cx="617.1" cy="249.7" r="1.75" class="dy"/><circle cx="734.2" cy="161.3" r="1.75" class="dy"/><circle cx="684.2" cy="148.8" r="1.75" class="dy"/><circle cx="646.9" cy="192.9" r="1.75" class="dr"/><circle cx="644.0" cy="184.7" r="1.75" class="dr"/><circle cx="653.4" cy="231.4" r="1.75" class="dy"/><circle cx="775.2" cy="111.2" r="1.75" class="dr"/><circle cx="657.3" cy="180.8" r="1.75" class="dr"/><circle cx="629.7" cy="199.8" r="1.75" class="dr"/><circle cx="701.8" cy="233.6" r="1.75" class="dy"/><circle cx="604.7" cy="114.3" r="1.75" class="dy"/><circle cx="640.1" cy="213.2" r="1.75" class="dy"/><circle cx="675.7" cy="197.2" r="1.75" class="dy"/><circle cx="723.1" cy="191.4" r="1.75" class="dk"/><circle cx="579.5" cy="129.5" r="1.75" class="dk"/><circle cx="731.0" cy="208.9" r="1.75" class="dy"/><circle cx="747.2" cy="118.5" r="1.75" class="dy"/><circle cx="765.9" cy="196.9" r="1.75" class="dy"/><circle cx="628.6" cy="252.3" r="1.75" class="dr"/><circle cx="640.5" cy="186.4" r="1.75" class="dy"/><circle cx="732.1" cy="144.1" r="1.75" class="dy"/><circle cx="637.9" cy="193.6" r="1.75" class="dy"/><circle cx="657.9" cy="169.2" r="1.75" class="dy"/><circle cx="728.0" cy="225.9" r="1.75" class="dr"/><circle cx="593.9" cy="244.0" r="1.75" class="dy"/><circle cx="710.9" cy="157.7" r="1.75" class="dr"/><circle cx="601.8" cy="173.4" r="1.75" class="dr"/><circle cx="647.5" cy="197.7" r="1.75" class="dr"/><circle cx="645.8" cy="189.7" r="1.75" class="dy"/><circle cx="716.1" cy="151.2" r="1.75" class="dr"/><circle cx="766.3" cy="185.8" r="1.75" class="dy"/><circle cx="633.4" cy="135.3" r="1.75" class="dy"/><circle cx="642.2" cy="178.7" r="1.75" class="dy"/><circle cx="571.5" cy="221.8" r="1.75" class="dy"/><circle cx="544.2" cy="133.4" r="1.75" class="dy"/><circle cx="737.5" cy="141.4" r="1.75" class="dy"/><circle cx="674.6" cy="116.3" r="1.75" class="dy"/><circle cx="638.7" cy="196.5" r="1.75" class="dy"/><circle cx="712.2" cy="188.7" r="1.75" class="dk"/><circle cx="657.0" cy="196.1" r="1.75" class="dk"/><circle cx="707.1" cy="153.1" r="1.75" class="dy"/><circle cx="715.0" cy="247.8" r="1.75" class="dy"/><circle cx="717.8" cy="166.8" r="1.75" class="dy"/><circle cx="658.4" cy="280.0" r="1.75" class="dk"/><circle cx="680.2" cy="128.7" r="1.75" class="dy"/><circle cx="646.6" cy="189.0" r="1.75" class="dy"/><circle cx="596.1" cy="243.2" r="1.75" class="dy"/><circle cx="641.0" cy="201.6" r="1.75" class="dk"/><circle cx="758.3" cy="192.4" r="1.75" class="dy"/><circle cx="695.0" cy="284.3" r="1.75" class="dy"/><circle cx="619.8" cy="257.1" r="1.75" class="dy"/><circle cx="750.9" cy="153.7" r="1.75" class="dk"/><circle cx="777.9" cy="121.3" r="1.75" class="dy"/><circle cx="533.2" cy="116.5" r="1.75" class="dr"/><circle cx="749.3" cy="157.2" r="1.75" class="dr"/><circle cx="704.7" cy="247.8" r="1.75" class="dy"/><circle cx="640.1" cy="194.8" r="1.75" class="dy"/><circle cx="548.9" cy="192.7" r="1.75" class="dy"/><circle cx="620.7" cy="136.3" r="1.75" class="dy"/><circle cx="721.2" cy="149.2" r="1.75" class="dy"/><circle cx="746.0" cy="173.9" r="1.75" class="dy"/><circle cx="720.8" cy="278.2" r="1.75" class="dy"/><circle cx="660.0" cy="286.2" r="1.75" class="dy"/><circle cx="719.7" cy="146.9" r="1.75" class="dr"/><circle cx="650.5" cy="110.7" r="1.75" class="dy"/><circle cx="627.2" cy="196.3" r="1.75" class="dy"/><circle cx="634.4" cy="187.3" r="1.75" class="dk"/><circle cx="621.3" cy="134.9" r="1.75" class="dy"/><circle cx="774.5" cy="225.7" r="1.75" class="dy"/><circle cx="655.7" cy="202.3" r="1.75" class="dk"/><circle cx="753.1" cy="120.3" r="1.75" class="dk"/><circle cx="717.1" cy="113.1" r="1.75" class="dr"/><circle cx="644.0" cy="190.5" r="1.75" class="dy"/><circle cx="669.2" cy="196.6" r="1.75" class="dr"/><circle cx="721.6" cy="136.9" r="1.75" class="dr"/><circle cx="765.3" cy="147.1" r="1.75" class="dy"/><circle cx="732.8" cy="248.4" r="1.75" class="dr"/><circle cx="653.8" cy="236.7" r="1.75" class="dk"/><circle cx="712.8" cy="145.9" r="1.75" class="dr"/><circle cx="648.1" cy="145.1" r="1.75" class="dr"/><circle cx="655.7" cy="239.0" r="1.75" class="dy"/><circle cx="706.8" cy="156.7" r="1.75" class="dr"/><circle cx="741.5" cy="236.1" r="1.75" class="dy"/><circle cx="624.9" cy="186.4" r="1.75" class="dr"/><circle cx="648.4" cy="195.4" r="1.75" class="dy"/><circle cx="768.5" cy="285.6" r="1.75" class="dk"/><circle cx="782.4" cy="146.1" r="1.75" class="dy"/><circle cx="717.7" cy="193.0" r="1.75" class="dr"/><circle cx="769.8" cy="163.6" r="1.75" class="dy"/><circle cx="619.5" cy="107.1" r="1.75" class="dy"/><circle cx="741.6" cy="130.4" r="1.75" class="dr"/><circle cx="653.2" cy="268.1" r="1.75" class="dy"/><circle cx="707.6" cy="210.3" r="1.75" class="dy"/><circle cx="558.4" cy="167.6" r="1.75" class="dy"/><circle cx="667.9" cy="140.5" r="1.75" class="dy"/><circle cx="596.3" cy="186.5" r="1.75" class="dk"/><circle cx="630.0" cy="247.4" r="1.75" class="dy"/><circle cx="658.5" cy="288.3" r="1.75" class="dk"/><circle cx="643.6" cy="207.3" r="1.75" class="dy"/><circle cx="770.4" cy="149.2" r="1.75" class="dy"/><circle cx="671.8" cy="176.3" r="1.75" class="dr"/><circle cx="715.5" cy="146.8" r="1.75" class="dk"/><circle cx="618.8" cy="186.6" r="1.75" class="dy"/><circle cx="608.7" cy="226.9" r="1.75" class="dy"/><circle cx="644.5" cy="203.2" r="1.75" class="dr"/><circle cx="656.6" cy="206.9" r="1.75" class="dr"/><circle cx="558.6" cy="141.4" r="1.75" class="dr"/><circle cx="765.9" cy="185.2" r="1.75" class="dy"/><circle cx="643.7" cy="180.6" r="1.75" class="dy"/><circle cx="672.1" cy="198.3" r="1.75" class="dr"/><circle cx="780.1" cy="211.4" r="1.75" class="dy"/><circle cx="645.8" cy="195.0" r="1.75" class="dy"/><circle cx="751.6" cy="158.8" r="1.75" class="dk"/><circle cx="696.8" cy="166.3" r="1.75" class="dy"/><circle cx="721.3" cy="225.8" r="1.75" class="dr"/><circle cx="673.6" cy="223.0" r="1.75" class="dy"/><circle cx="787.1" cy="284.2" r="1.75" class="dr"/><circle cx="647.8" cy="189.6" r="1.75" class="dk"/><circle cx="595.5" cy="134.5" r="1.75" class="dy"/><circle cx="706.0" cy="137.1" r="1.75" class="dy"/><circle cx="599.2" cy="241.2" r="1.75" class="dy"/><circle cx="699.4" cy="270.8" r="1.75" class="dy"/><circle cx="642.5" cy="209.4" r="1.75" class="dy"/><circle cx="721.7" cy="113.4" r="1.75" class="dy"/><circle cx="719.0" cy="139.9" r="1.75" class="dk"/><circle cx="723.2" cy="277.6" r="1.75" class="dr"/><circle cx="763.4" cy="122.7" r="1.75" class="dy"/><circle cx="738.5" cy="277.9" r="1.75" class="dr"/><circle cx="644.9" cy="180.4" r="1.75" class="dy"/><circle cx="670.1" cy="206.4" r="1.75" class="dy"/><circle cx="607.0" cy="230.3" r="1.75" class="dy"/><circle cx="721.5" cy="153.1" r="1.75" class="dy"/><circle cx="758.1" cy="136.7" r="1.75" class="dy"/><circle cx="770.3" cy="110.4" r="1.75" class="dk"/><circle cx="660.2" cy="196.8" r="1.75" class="dy"/><circle cx="757.0" cy="276.6" r="1.75" class="dk"/><circle cx="646.7" cy="187.6" r="1.75" class="dy"/><circle cx="714.2" cy="150.8" r="1.75" class="dr"/><circle cx="657.9" cy="267.8" r="1.75" class="dy"/><circle cx="766.1" cy="262.9" r="1.75" class="dy"/><circle cx="729.1" cy="189.1" r="1.75" class="dr"/><circle cx="666.3" cy="201.3" r="1.75" class="dr"/><circle cx="568.4" cy="207.4" r="1.75" class="dr"/><circle cx="587.1" cy="238.0" r="1.75" class="dy"/><circle cx="647.2" cy="177.9" r="1.75" class="dy"/><circle cx="671.5" cy="140.4" r="1.75" class="dy"/><circle cx="774.1" cy="122.3" r="1.75" class="dy"/><circle cx="649.4" cy="113.9" r="1.75" class="dy"/><circle cx="642.0" cy="178.1" r="1.75" class="dy"/><circle cx="731.1" cy="213.6" r="1.75" class="dr"/><circle cx="778.2" cy="263.2" r="1.75" class="dy"/><circle cx="641.7" cy="205.3" r="1.75" class="dy"/><circle cx="695.2" cy="110.9" r="1.75" class="dk"/><circle cx="654.6" cy="244.3" r="1.75" class="dk"/><circle cx="726.7" cy="147.0" r="1.75" class="dy"/><circle cx="755.8" cy="125.6" r="1.75" class="dy"/><circle cx="716.7" cy="116.1" r="1.75" class="dy"/><circle cx="555.0" cy="220.8" r="1.75" class="dy"/><circle cx="779.1" cy="214.7" r="1.75" class="dr"/><circle cx="655.3" cy="245.8" r="1.75" class="dr"/><circle cx="640.2" cy="203.6" r="1.75" class="dy"/><circle cx="529.3" cy="201.9" r="1.75" class="dy"/><circle cx="696.7" cy="165.3" r="1.75" class="dr"/><circle cx="644.5" cy="259.4" r="1.75" class="dy"/><circle cx="595.2" cy="255.7" r="1.75" class="dr"/><circle cx="776.1" cy="274.4" r="1.75" class="dk"/><circle cx="655.1" cy="233.7" r="1.75" class="dy"/><circle cx="710.5" cy="244.3" r="1.75" class="dr"/><circle cx="715.1" cy="163.5" r="1.75" class="dr"/><circle cx="638.8" cy="190.8" r="1.75" class="dy"/><circle cx="719.1" cy="231.5" r="1.75" class="dk"/><circle cx="674.5" cy="246.0" r="1.75" class="dy"/><circle cx="723.9" cy="147.3" r="1.75" class="dy"/><circle cx="638.2" cy="170.1" r="1.75" class="dy"/><circle cx="750.5" cy="145.5" r="1.75" class="dy"/><circle cx="787.7" cy="195.6" r="1.75" class="dr"/><circle cx="622.4" cy="136.3" r="1.75" class="dy"/><circle cx="707.6" cy="156.4" r="1.75" class="dy"/><circle cx="723.9" cy="154.3" r="1.75" class="dk"/><circle cx="777.2" cy="214.8" r="1.75" class="dy"/><circle cx="649.6" cy="221.0" r="1.75" class="dy"/><circle cx="633.0" cy="192.8" r="1.75" class="dr"/><circle cx="768.6" cy="192.4" r="1.75" class="dy"/><circle cx="741.6" cy="157.4" r="1.75" class="dk"/><circle cx="648.3" cy="105.4" r="1.75" class="dy"/><circle cx="719.5" cy="140.5" r="1.75" class="dy"/><circle cx="589.5" cy="245.9" r="1.75" class="dy"/><circle cx="655.8" cy="259.7" r="1.75" class="dr"/><circle cx="586.6" cy="123.1" r="1.75" class="dk"/><circle cx="631.0" cy="267.7" r="1.75" class="dr"/><circle cx="711.3" cy="158.2" r="1.75" class="dy"/><circle cx="749.1" cy="170.6" r="1.75" class="dy"/><circle cx="734.6" cy="144.4" r="1.75" class="dr"/><circle cx="755.0" cy="114.9" r="1.75" class="dy"/><circle cx="644.0" cy="198.8" r="1.75" class="dk"/><circle cx="705.1" cy="152.6" r="1.75" class="dk"/><circle cx="763.2" cy="113.9" r="1.75" class="dy"/><circle cx="577.2" cy="203.2" r="1.75" class="dy"/><circle cx="701.6" cy="145.3" r="1.75" class="dy"/><circle cx="593.1" cy="222.8" r="1.75" class="dr"/><circle cx="740.1" cy="191.5" r="1.75" class="dy"/><circle cx="642.8" cy="183.6" r="1.75" class="dr"/><circle cx="648.8" cy="191.0" r="1.75" class="dy"/><circle cx="651.8" cy="277.5" r="1.75" class="dk"/><circle cx="646.4" cy="217.9" r="1.75" class="dy"/><circle cx="548.2" cy="234.3" r="1.75" class="dy"/><circle cx="690.9" cy="170.1" r="1.75" class="dy"/><circle cx="650.8" cy="222.8" r="1.75" class="dy"/><circle cx="609.8" cy="224.3" r="1.75" class="dy"/><circle cx="647.1" cy="203.5" r="1.75" class="dk"/><circle cx="653.3" cy="271.9" r="1.75" class="dy"/><circle cx="737.9" cy="136.2" r="1.75" class="dk"/><circle cx="644.7" cy="193.2" r="1.75" class="dy"/><circle cx="713.3" cy="192.4" r="1.75" class="dy"/><circle cx="639.2" cy="182.7" r="1.75" class="dy"/><circle cx="637.4" cy="185.2" r="1.75" class="dr"/><circle cx="651.8" cy="225.3" r="1.75" class="dy"/><circle cx="712.9" cy="109.9" r="1.75" class="dy"/><circle cx="647.9" cy="180.5" r="1.75" class="dr"/><circle cx="762.0" cy="157.7" r="1.75" class="dr"/><circle cx="698.8" cy="247.7" r="1.75" class="dy"/><circle cx="646.3" cy="188.7" r="1.75" class="dy"/><circle cx="580.8" cy="191.1" r="1.75" class="dy"/><circle cx="624.0" cy="190.1" r="1.75" class="dy"/><circle cx="599.3" cy="239.0" r="1.75" class="dy"/><circle cx="728.1" cy="156.9" r="1.75" class="dy"/><circle cx="776.7" cy="257.1" r="1.75" class="dy"/><circle cx="643.0" cy="203.3" r="1.75" class="dy"/><circle cx="737.8" cy="155.1" r="1.75" class="dy"/><circle cx="704.5" cy="260.4" r="1.75" class="dy"/><circle cx="771.8" cy="193.1" r="1.75" class="dy"/><circle cx="743.3" cy="131.7" r="1.75" class="dy"/><circle cx="597.3" cy="244.3" r="1.75" class="dy"/><circle cx="626.3" cy="206.3" r="1.75" class="dy"/><circle cx="765.1" cy="192.6" r="1.75" class="dk"/><circle cx="649.2" cy="187.9" r="1.75" class="dy"/><circle cx="728.4" cy="226.9" r="1.75" class="dy"/><circle cx="550.9" cy="124.0" r="1.75" class="dy"/><circle cx="590.8" cy="257.2" r="1.75" class="dk"/><circle cx="645.5" cy="196.3" r="1.75" class="dr"/><circle cx="779.8" cy="192.5" r="1.75" class="dy"/><circle cx="564.4" cy="163.2" r="1.75" class="dr"/><circle cx="624.4" cy="103.7" r="1.75" class="dr"/><circle cx="769.2" cy="282.1" r="1.75" class="dy"/><circle cx="656.3" cy="156.3" r="1.75" class="dy"/><circle cx="770.5" cy="191.5" r="1.75" class="dy"/><circle cx="760.3" cy="114.8" r="1.75" class="dy"/><circle cx="743.0" cy="140.6" r="1.75" class="dy"/><circle cx="528.2" cy="120.3" r="1.75" class="dy"/><circle cx="781.4" cy="230.9" r="1.75" class="dy"/><circle cx="748.5" cy="121.9" r="1.75" class="dr"/><circle cx="578.4" cy="184.4" r="1.75" class="dk"/><circle cx="599.0" cy="251.0" r="1.75" class="dy"/><circle cx="668.5" cy="196.2" r="1.75" class="dy"/><circle cx="548.0" cy="134.5" r="1.75" class="dy"/><circle cx="655.8" cy="245.6" r="1.75" class="dy"/><circle cx="595.2" cy="244.9" r="1.75" class="dk"/><circle cx="649.4" cy="189.0" r="1.75" class="dr"/><circle cx="726.9" cy="117.1" r="1.75" class="dy"/><circle cx="546.6" cy="196.1" r="1.75" class="dy"/><circle cx="761.5" cy="130.4" r="1.75" class="dk"/><circle cx="618.8" cy="202.0" r="1.75" class="dr"/><circle cx="706.3" cy="222.5" r="1.75" class="dr"/><circle cx="679.4" cy="228.2" r="1.75" class="dr"/><circle cx="669.6" cy="207.3" r="1.75" class="dr"/><circle cx="637.5" cy="175.1" r="1.75" class="dy"/><circle cx="564.0" cy="133.6" r="1.75" class="dy"/><circle cx="745.1" cy="227.0" r="1.75" class="dy"/><circle cx="756.9" cy="171.9" r="1.75" class="dk"/><circle cx="644.7" cy="183.1" r="1.75" class="dk"/><circle cx="746.4" cy="283.4" r="1.75" class="dk"/><circle cx="665.0" cy="267.7" r="1.75" class="dr"/><circle cx="647.4" cy="185.1" r="1.75" class="dy"/><circle cx="751.2" cy="125.0" r="1.75" class="dy"/><circle cx="749.3" cy="182.5" r="1.75" class="dk"/><circle cx="722.0" cy="146.3" r="1.75" class="dy"/><circle cx="671.3" cy="118.1" r="1.75" class="dy"/><circle cx="719.3" cy="154.4" r="1.75" class="dy"/><circle cx="705.3" cy="200.0" r="1.75" class="dk"/><circle cx="722.0" cy="150.9" r="1.75" class="dy"/><circle cx="702.3" cy="265.9" r="1.75" class="dk"/><circle cx="695.8" cy="167.8" r="1.75" class="dy"/><circle cx="732.4" cy="138.4" r="1.75" class="dk"/><circle cx="668.6" cy="215.0" r="1.75" class="dy"/><circle cx="719.3" cy="155.8" r="1.75" class="dy"/><circle cx="706.2" cy="256.2" r="1.75" class="dy"/><circle cx="603.3" cy="175.2" r="1.75" class="dy"/><circle cx="772.3" cy="268.9" r="1.75" class="dy"/><circle cx="640.1" cy="193.0" r="1.75" class="dy"/><circle cx="714.7" cy="166.7" r="1.75" class="dk"/><circle cx="666.7" cy="235.2" r="1.75" class="dy"/><circle cx="719.0" cy="146.0" r="1.75" class="dr"/><circle cx="603.4" cy="236.3" r="1.75" class="dy"/><circle cx="646.5" cy="217.4" r="1.75" class="dy"/><circle cx="683.8" cy="248.2" r="1.75" class="dy"/><circle cx="723.7" cy="207.5" r="1.75" class="dy"/><circle cx="730.6" cy="141.2" r="1.75" class="dk"/><circle cx="713.4" cy="176.9" r="1.75" class="dr"/><circle cx="703.5" cy="264.8" r="1.75" class="dy"/><circle cx="641.5" cy="195.1" r="1.75" class="dy"/><circle cx="715.4" cy="155.7" r="1.75" class="dy"/><circle cx="641.0" cy="172.3" r="1.75" class="dy"/><circle cx="775.9" cy="149.5" r="1.75" class="dy"/><circle cx="733.6" cy="152.4" r="1.75" class="dy"/><circle cx="752.4" cy="273.7" r="1.75" class="dy"/><circle cx="643.1" cy="167.4" r="1.75" class="dy"/><circle cx="756.4" cy="120.5" r="1.75" class="dr"/><circle cx="741.9" cy="175.9" r="1.75" class="dy"/><circle cx="773.8" cy="272.8" r="1.75" class="dy"/><circle cx="715.0" cy="158.4" r="1.75" class="dr"/><circle cx="747.4" cy="173.4" r="1.75" class="dy"/><circle cx="729.0" cy="144.4" r="1.75" class="dk"/><circle cx="669.2" cy="198.9" r="1.75" class="dy"/><circle cx="617.3" cy="203.1" r="1.75" class="dy"/><circle cx="769.1" cy="106.8" r="1.75" class="dy"/><circle cx="748.7" cy="173.2" r="1.75" class="dy"/><circle cx="646.6" cy="198.1" r="1.75" class="dk"/><circle cx="769.2" cy="189.6" r="1.75" class="dr"/><circle cx="733.4" cy="247.0" r="1.75" class="dr"/><circle cx="597.0" cy="225.0" r="1.75" class="dy"/><circle cx="575.7" cy="242.8" r="1.75" class="dy"/><circle cx="766.1" cy="110.6" r="1.75" class="dr"/><circle cx="619.8" cy="186.3" r="1.75" class="dy"/><circle cx="653.2" cy="235.1" r="1.75" class="dy"/><circle cx="623.8" cy="181.5" r="1.75" class="dy"/><circle cx="697.6" cy="147.1" r="1.75" class="dy"/><circle cx="747.4" cy="118.2" r="1.75" class="dy"/><circle cx="731.3" cy="143.3" r="1.75" class="dk"/><circle cx="767.1" cy="111.0" r="1.75" class="dy"/><circle cx="697.2" cy="156.2" r="1.75" class="dy"/><circle cx="745.9" cy="175.6" r="1.75" class="dr"/><circle cx="701.7" cy="150.7" r="1.75" class="dy"/><circle cx="742.3" cy="192.2" r="1.75" class="dy"/><circle cx="642.1" cy="188.7" r="1.75" class="dy"/><circle cx="694.9" cy="116.7" r="1.75" class="dk"/><circle cx="727.6" cy="228.7" r="1.75" class="dy"/><circle cx="558.7" cy="241.3" r="1.75" class="dy"/><circle cx="722.8" cy="154.5" r="1.75" class="dy"/><circle cx="613.3" cy="223.8" r="1.75" class="dr"/><circle cx="699.6" cy="175.8" r="1.75" class="dy"/><circle cx="712.1" cy="193.8" r="1.75" class="dr"/><circle cx="611.5" cy="239.7" r="1.75" class="dy"/><circle cx="763.0" cy="112.2" r="1.75" class="dy"/><circle cx="588.0" cy="163.1" r="1.75" class="dk"/><circle cx="654.3" cy="195.0" r="1.75" class="dy"/><circle cx="611.5" cy="181.6" r="1.75" class="dy"/><circle cx="645.9" cy="191.1" r="1.75" class="dk"/><circle cx="626.9" cy="190.5" r="1.75" class="dr"/><circle cx="642.8" cy="171.0" r="1.75" class="dy"/><circle cx="602.4" cy="234.8" r="1.75" class="dy"/><circle cx="697.8" cy="165.3" r="1.75" class="dy"/><circle cx="636.6" cy="153.9" r="1.75" class="dy"/><circle cx="728.6" cy="150.4" r="1.75" class="dk"/><circle cx="737.2" cy="276.9" r="1.75" class="dr"/><circle cx="627.2" cy="228.6" r="1.75" class="dk"/><circle cx="647.2" cy="191.4" r="1.75" class="dr"/><circle cx="650.2" cy="124.6" r="1.75" class="dy"/><circle cx="669.7" cy="198.8" r="1.75" class="dy"/><circle cx="771.8" cy="192.2" r="1.75" class="dr"/><circle cx="749.8" cy="153.9" r="1.75" class="dy"/><circle cx="590.3" cy="248.3" r="1.75" class="dy"/><circle cx="756.2" cy="188.4" r="1.75" class="dy"/><circle cx="657.0" cy="148.7" r="1.75" class="dy"/><circle cx="708.0" cy="180.2" r="1.75" class="dy"/><circle cx="734.6" cy="182.2" r="1.75" class="dy"/><circle cx="703.6" cy="266.1" r="1.75" class="dy"/><circle cx="599.2" cy="136.4" r="1.75" class="dk"/><circle cx="642.0" cy="170.7" r="1.75" class="dy"/><circle cx="606.3" cy="176.3" r="1.75" class="dy"/><circle cx="692.8" cy="120.2" r="1.75" class="dy"/><circle cx="728.9" cy="234.8" r="1.75" class="dy"/><circle cx="658.8" cy="267.9" r="1.75" class="dk"/><circle cx="711.4" cy="160.1" r="1.75" class="dy"/><circle cx="609.8" cy="227.8" r="1.75" class="dy"/><circle cx="723.8" cy="144.7" r="1.75" class="dy"/><circle cx="606.7" cy="230.9" r="1.75" class="dr"/><circle cx="726.5" cy="149.5" r="1.75" class="dy"/><circle cx="721.4" cy="142.1" r="1.75" class="dy"/><circle cx="771.2" cy="191.1" r="1.75" class="dy"/><circle cx="738.6" cy="270.3" r="1.75" class="dr"/><circle cx="769.1" cy="106.2" r="1.75" class="dy"/><circle cx="715.6" cy="125.8" r="1.75" class="dk"/><circle cx="648.4" cy="170.2" r="1.75" class="dy"/><circle cx="783.5" cy="261.8" r="1.75" class="dy"/><circle cx="709.5" cy="252.5" r="1.75" class="dy"/><circle cx="672.2" cy="236.6" r="1.75" class="dk"/><circle cx="642.6" cy="181.7" r="1.75" class="dy"/><circle cx="646.3" cy="198.4" r="1.75" class="dr"/><circle cx="642.1" cy="172.1" r="1.75" class="dr"/><circle cx="592.7" cy="240.5" r="1.75" class="dr"/><circle cx="556.4" cy="243.2" r="1.75" class="dy"/><circle cx="720.0" cy="190.5" r="1.75" class="dr"/><circle cx="782.5" cy="149.6" r="1.75" class="dy"/><circle cx="715.7" cy="193.2" r="1.75" class="dy"/><circle cx="659.9" cy="274.4" r="1.75" class="dy"/><circle cx="647.7" cy="188.9" r="1.75" class="dy"/><circle cx="673.8" cy="173.2" r="1.75" class="dk"/><circle cx="564.9" cy="156.8" r="1.75" class="dy"/><circle cx="623.2" cy="191.8" r="1.75" class="dy"/><circle cx="719.5" cy="149.5" r="1.75" class="dy"/><circle cx="592.8" cy="271.2" r="1.75" class="dk"/><circle cx="699.8" cy="255.6" r="1.75" class="dy"/><circle cx="739.0" cy="144.8" r="1.75" class="dk"/><circle cx="672.8" cy="201.1" r="1.75" class="dy"/><circle cx="676.4" cy="234.8" r="1.75" class="dy"/><circle cx="759.6" cy="183.1" r="1.75" class="dy"/><circle cx="733.5" cy="139.7" r="1.75" class="dy"/><circle cx="712.5" cy="114.5" r="1.75" class="dy"/><circle cx="626.5" cy="197.9" r="1.75" class="dy"/><circle cx="705.2" cy="121.7" r="1.75" class="dr"/><circle cx="761.2" cy="163.8" r="1.75" class="dy"/><circle cx="545.0" cy="244.3" r="1.75" class="dy"/><circle cx="646.7" cy="156.5" r="1.75" class="dy"/><circle cx="709.2" cy="153.9" r="1.75" class="dy"/><circle cx="672.6" cy="222.7" r="1.75" class="dy"/><circle cx="666.0" cy="173.6" r="1.75" class="dy"/><circle cx="744.9" cy="157.1" r="1.75" class="dy"/><circle cx="759.5" cy="147.7" r="1.75" class="dy"/><circle cx="775.1" cy="101.3" r="1.75" class="dy"/><circle cx="691.3" cy="167.7" r="1.75" class="dy"/><circle cx="777.2" cy="164.1" r="1.75" class="dy"/><circle cx="632.9" cy="268.8" r="1.75" class="dy"/><circle cx="710.4" cy="150.8" r="1.75" class="dy"/><circle cx="751.6" cy="153.8" r="1.75" class="dy"/><circle cx="647.3" cy="193.8" r="1.75" class="dk"/><circle cx="580.8" cy="229.0" r="1.75" class="dy"/><circle cx="642.6" cy="268.1" r="1.75" class="dy"/><circle cx="688.7" cy="275.5" r="1.75" class="dy"/><circle cx="621.6" cy="119.7" r="1.75" class="dk"/><circle cx="683.0" cy="229.8" r="1.75" class="dy"/><circle cx="666.0" cy="197.7" r="1.75" class="dy"/><circle cx="772.4" cy="107.8" r="1.75" class="dr"/><circle cx="552.2" cy="215.3" r="1.75" class="dy"/><circle cx="744.0" cy="176.9" r="1.75" class="dr"/><circle cx="659.4" cy="270.7" r="1.75" class="dk"/><circle cx="675.8" cy="253.7" r="1.75" class="dy"/><circle cx="736.7" cy="151.9" r="1.75" class="dy"/><circle cx="673.1" cy="198.3" r="1.75" class="dy"/><circle cx="739.6" cy="134.9" r="1.75" class="dr"/><circle cx="661.2" cy="127.9" r="1.75" class="dr"/><circle cx="531.4" cy="198.5" r="1.75" class="dr"/><circle cx="702.5" cy="156.0" r="1.75" class="dk"/><circle cx="700.4" cy="228.7" r="1.75" class="dy"/><circle cx="649.5" cy="126.6" r="1.75" class="dy"/><circle cx="702.0" cy="122.0" r="1.75" class="dk"/><circle cx="551.2" cy="242.2" r="1.75" class="dr"/><circle cx="775.1" cy="278.7" r="1.75" class="dy"/><circle cx="654.2" cy="155.3" r="1.75" class="dk"/><circle cx="716.2" cy="148.2" r="1.75" class="dr"/><circle cx="707.3" cy="155.0" r="1.75" class="dk"/><circle cx="718.6" cy="153.5" r="1.75" class="dy"/><circle cx="714.1" cy="146.4" r="1.75" class="dy"/><circle cx="710.9" cy="144.0" r="1.75" class="dk"/><circle cx="641.7" cy="195.5" r="1.75" class="dk"/><circle cx="724.2" cy="146.7" r="1.75" class="dr"/><circle cx="593.4" cy="259.9" r="1.75" class="dk"/><circle cx="639.8" cy="193.0" r="1.75" class="dk"/><circle cx="723.7" cy="155.8" r="1.75" class="dr"/><circle cx="719.0" cy="142.0" r="1.75" class="dr"/><circle cx="752.5" cy="183.1" r="1.75" class="dk"/><circle cx="747.1" cy="164.4" r="1.75" class="dy"/><circle cx="612.9" cy="223.3" r="1.75" class="dy"/><circle cx="759.4" cy="255.4" r="1.75" class="dy"/><circle cx="768.7" cy="289.0" r="1.75" class="dy"/><circle cx="759.5" cy="193.7" r="1.75" class="dr"/><circle cx="771.6" cy="103.3" r="1.75" class="dy"/><circle cx="724.3" cy="153.9" r="1.75" class="dr"/><circle cx="736.8" cy="268.7" r="1.75" class="dy"/><circle cx="617.3" cy="191.3" r="1.75" class="dy"/><circle cx="609.0" cy="248.1" r="1.75" class="dr"/><circle cx="593.7" cy="234.1" r="1.75" class="dy"/><circle cx="701.8" cy="174.7" r="1.75" class="dy"/><circle cx="756.5" cy="121.4" r="1.75" class="dk"/><circle cx="651.4" cy="188.6" r="1.75" class="dk"/><circle cx="710.9" cy="133.0" r="1.75" class="dy"/><circle cx="667.6" cy="283.4" r="1.75" class="dy"/><circle cx="641.1" cy="196.0" r="1.75" class="dr"/><circle cx="573.0" cy="99.5" r="1.75" class="dy"/><circle cx="737.4" cy="103.3" r="1.75" class="dk"/><circle cx="642.1" cy="198.6" r="1.75" class="dy"/><circle cx="716.2" cy="146.6" r="1.75" class="dy"/><circle cx="604.6" cy="245.8" r="1.75" class="dy"/><circle cx="655.4" cy="236.2" r="1.75" class="dy"/><circle cx="637.2" cy="192.9" r="1.75" class="dy"/><circle cx="634.4" cy="200.1" r="1.75" class="dy"/><circle cx="639.0" cy="169.9" r="1.75" class="dy"/><circle cx="706.4" cy="232.0" r="1.75" class="dy"/><circle cx="686.5" cy="102.2" r="1.75" class="dk"/><circle cx="775.1" cy="127.4" r="1.75" class="dy"/><circle cx="624.7" cy="268.4" r="1.75" class="dy"/><circle cx="665.8" cy="117.0" r="1.75" class="dr"/><circle cx="721.7" cy="148.4" r="1.75" class="dy"/><circle cx="728.8" cy="142.8" r="1.75" class="dy"/><circle cx="682.8" cy="234.6" r="1.75" class="dr"/><circle cx="620.7" cy="122.4" r="1.75" class="dk"/><circle cx="604.7" cy="240.1" r="1.75" class="dk"/><circle cx="680.3" cy="172.2" r="1.75" class="dy"/><circle cx="566.3" cy="207.5" r="1.75" class="dy"/><circle cx="647.4" cy="132.4" r="1.75" class="dy"/><circle cx="714.3" cy="156.5" r="1.75" class="dy"/><circle cx="673.4" cy="195.7" r="1.75" class="dr"/><circle cx="585.5" cy="185.9" r="1.75" class="dy"/><circle cx="718.6" cy="149.9" r="1.75" class="dr"/><circle cx="646.3" cy="187.7" r="1.75" class="dy"/><circle cx="715.6" cy="147.8" r="1.75" class="dk"/><circle cx="669.2" cy="176.1" r="1.75" class="dk"/><circle cx="735.2" cy="229.9" r="1.75" class="dy"/><circle cx="640.8" cy="188.5" r="1.75" class="dr"/><circle cx="749.9" cy="119.9" r="1.75" class="dy"/><circle cx="587.2" cy="117.3" r="1.75" class="dy"/><circle cx="672.9" cy="107.7" r="1.75" class="dy"/><circle cx="565.9" cy="240.0" r="1.75" class="dy"/><circle cx="586.4" cy="220.6" r="1.75" class="dr"/><circle cx="659.7" cy="274.7" r="1.75" class="dy"/><circle cx="742.1" cy="134.6" r="1.75" class="dr"/><circle cx="651.5" cy="124.9" r="1.75" class="dk"/><circle cx="647.1" cy="196.4" r="1.75" class="dy"/><circle cx="738.2" cy="182.1" r="1.75" class="dy"/><circle cx="773.9" cy="124.3" r="1.75" class="dy"/><circle cx="680.7" cy="148.9" r="1.75" class="dy"/><circle cx="653.6" cy="231.5" r="1.75" class="dr"/><circle cx="595.3" cy="187.2" r="1.75" class="dr"/><circle cx="666.2" cy="269.2" r="1.75" class="dy"/><circle cx="643.9" cy="194.2" r="1.75" class="dk"/><circle cx="652.3" cy="137.2" r="1.75" class="dy"/><circle cx="729.9" cy="161.7" r="1.75" class="dy"/><circle cx="594.9" cy="255.8" r="1.75" class="dr"/><circle cx="700.3" cy="150.4" r="1.75" class="dy"/><circle cx="653.2" cy="185.2" r="1.75" class="dy"/><circle cx="649.3" cy="191.6" r="1.75" class="dy"/><circle cx="649.1" cy="117.4" r="1.75" class="dy"/><circle cx="718.6" cy="150.5" r="1.75" class="dy"/><circle cx="637.8" cy="192.5" r="1.75" class="dy"/><circle cx="623.1" cy="232.2" r="1.75" class="dy"/><circle cx="707.8" cy="191.8" r="1.75" class="dy"/><circle cx="589.8" cy="248.9" r="1.75" class="dk"/><circle cx="580.7" cy="155.4" r="1.75" class="dy"/><circle cx="727.5" cy="135.4" r="1.75" class="dy"/><circle cx="641.2" cy="209.5" r="1.75" class="dr"/><circle cx="652.1" cy="184.4" r="1.75" class="dr"/><circle cx="550.3" cy="166.1" r="1.75" class="dk"/><circle cx="614.0" cy="203.7" r="1.75" class="dy"/><circle cx="772.1" cy="158.2" r="1.75" class="dy"/><circle cx="683.5" cy="170.5" r="1.75" class="dk"/><circle cx="688.0" cy="281.8" r="1.75" class="dr"/><circle cx="601.8" cy="235.8" r="1.75" class="dk"/><circle cx="648.1" cy="184.8" r="1.75" class="dy"/><circle cx="763.7" cy="163.3" r="1.75" class="dr"/><circle cx="639.7" cy="175.4" r="1.75" class="dy"/><circle cx="711.8" cy="159.4" r="1.75" class="dy"/><circle cx="648.6" cy="193.9" r="1.75" class="dy"/><circle cx="722.9" cy="141.0" r="1.75" class="dy"/><circle cx="686.2" cy="171.4" r="1.75" class="dy"/><circle cx="557.2" cy="164.2" r="1.75" class="dy"/><circle cx="626.3" cy="198.2" r="1.75" class="dy"/><circle cx="671.5" cy="202.7" r="1.75" class="dy"/><circle cx="718.0" cy="148.5" r="1.75" class="dy"/><circle cx="635.1" cy="195.7" r="1.75" class="dy"/><circle cx="724.6" cy="218.8" r="1.75" class="dy"/><circle cx="775.8" cy="128.0" r="1.75" class="dr"/><circle cx="586.5" cy="218.5" r="1.75" class="dk"/><circle cx="762.8" cy="113.2" r="1.75" class="dr"/><circle cx="624.6" cy="213.2" r="1.75" class="dy"/><circle cx="573.4" cy="134.8" r="1.75" class="dy"/><circle cx="760.8" cy="111.1" r="1.75" class="dy"/><circle cx="660.1" cy="198.0" r="1.75" class="dr"/><circle cx="664.3" cy="146.6" r="1.75" class="dy"/><circle cx="773.2" cy="120.7" r="1.75" class="dk"/><circle cx="773.2" cy="118.4" r="1.75" class="dy"/><circle cx="662.8" cy="187.5" r="1.75" class="dy"/><circle cx="620.9" cy="212.1" r="1.75" class="dy"/><circle cx="656.5" cy="194.7" r="1.75" class="dy"/><circle cx="716.8" cy="230.0" r="1.75" class="dk"/><circle cx="644.9" cy="194.7" r="1.75" class="dy"/><circle cx="585.2" cy="246.0" r="1.75" class="dy"/><circle cx="752.5" cy="132.0" r="1.75" class="dy"/><circle cx="590.4" cy="272.0" r="1.75" class="dr"/><circle cx="718.0" cy="152.1" r="1.75" class="dy"/><circle cx="668.6" cy="104.9" r="1.75" class="dy"/><circle cx="773.7" cy="200.6" r="1.75" class="dy"/><circle cx="550.0" cy="243.9" r="1.75" class="dy"/><circle cx="618.0" cy="243.3" r="1.75" class="dr"/><circle cx="763.4" cy="166.7" r="1.75" class="dy"/><circle cx="551.7" cy="241.2" r="1.75" class="dy"/><circle cx="606.3" cy="225.5" r="1.75" class="dy"/><circle cx="769.2" cy="287.6" r="1.75" class="dk"/><circle cx="659.5" cy="253.8" r="1.75" class="dy"/><circle cx="745.8" cy="173.4" r="1.75" class="dy"/><circle cx="597.7" cy="246.2" r="1.75" class="dk"/><circle cx="690.4" cy="115.6" r="1.75" class="dy"/><circle cx="706.3" cy="149.4" r="1.75" class="dy"/><circle cx="660.9" cy="151.8" r="1.75" class="dy"/><circle cx="740.8" cy="172.9" r="1.75" class="dk"/><circle cx="739.1" cy="186.8" r="1.75" class="dr"/><circle cx="626.1" cy="191.0" r="1.75" class="dy"/><circle cx="622.4" cy="115.1" r="1.75" class="dr"/><circle cx="658.0" cy="263.0" r="1.75" class="dy"/><circle cx="659.1" cy="288.8" r="1.75" class="dy"/><circle cx="623.9" cy="116.2" r="1.75" class="dy"/><circle cx="668.8" cy="137.5" r="1.75" class="dy"/><circle cx="648.2" cy="266.2" r="1.75" class="dk"/><circle cx="782.1" cy="222.2" r="1.75" class="dy"/><circle cx="775.6" cy="154.2" r="1.75" class="dy"/><circle cx="647.7" cy="134.5" r="1.75" class="dr"/><circle cx="748.3" cy="178.7" r="1.75" class="dy"/><circle cx="783.9" cy="146.5" r="1.75" class="dy"/><circle cx="680.1" cy="230.8" r="1.75" class="dr"/><circle cx="697.6" cy="286.3" r="1.75" class="dy"/><circle cx="679.1" cy="141.5" r="1.75" class="dk"/><circle cx="772.4" cy="266.9" r="1.75" class="dr"/><circle cx="661.6" cy="152.6" r="1.75" class="dy"/><circle cx="685.8" cy="174.2" r="1.75" class="dy"/><circle cx="720.9" cy="161.3" r="1.75" class="dy"/><circle cx="653.8" cy="195.7" r="1.75" class="dy"/><circle cx="717.9" cy="258.2" r="1.75" class="dy"/><circle cx="627.3" cy="198.8" r="1.75" class="dk"/><circle cx="585.9" cy="160.8" r="1.75" class="dy"/><circle cx="639.8" cy="179.5" r="1.75" class="dr"/><circle cx="645.2" cy="202.6" r="1.75" class="dy"/><circle cx="720.6" cy="234.0" r="1.75" class="dk"/><circle cx="767.7" cy="166.0" r="1.75" class="dk"/><circle cx="701.9" cy="221.6" r="1.75" class="dy"/><circle cx="669.7" cy="193.9" r="1.75" class="dy"/><circle cx="652.6" cy="196.6" r="1.75" class="dr"/><circle cx="772.9" cy="126.7" r="1.75" class="dk"/><circle cx="718.1" cy="154.4" r="1.75" class="dr"/><circle cx="732.8" cy="140.7" r="1.75" class="dy"/><circle cx="771.0" cy="102.4" r="1.75" class="dy"/><circle cx="751.0" cy="123.8" r="1.75" class="dy"/><circle cx="615.5" cy="218.8" r="1.75" class="dy"/><circle cx="661.2" cy="239.5" r="1.75" class="dk"/><circle cx="672.8" cy="201.3" r="1.75" class="dk"/><circle cx="616.6" cy="250.9" r="1.75" class="dy"/><circle cx="734.4" cy="262.1" r="1.75" class="dy"/><circle cx="600.3" cy="196.5" r="1.75" class="dy"/><circle cx="639.8" cy="196.2" r="1.75" class="dy"/><circle cx="736.1" cy="138.0" r="1.75" class="dr"/><circle cx="785.6" cy="205.9" r="1.75" class="dr"/><circle cx="665.7" cy="188.8" r="1.75" class="dy"/><circle cx="719.0" cy="153.7" r="1.75" class="dy"/><circle cx="758.8" cy="134.2" r="1.75" class="dr"/><circle cx="721.7" cy="151.4" r="1.75" class="dr"/><circle cx="716.8" cy="154.2" r="1.75" class="dy"/><circle cx="660.9" cy="147.8" r="1.75" class="dy"/><circle cx="646.6" cy="148.6" r="1.75" class="dy"/><circle cx="742.2" cy="276.6" r="1.75" class="dy"/><circle cx="727.6" cy="213.6" r="1.75" class="dr"/><circle cx="636.3" cy="194.8" r="1.75" class="dy"/><circle cx="712.0" cy="148.8" r="1.75" class="dr"/><circle cx="716.5" cy="146.4" r="1.75" class="dy"/><circle cx="726.1" cy="151.6" r="1.75" class="dy"/><circle cx="766.0" cy="163.8" r="1.75" class="dy"/><circle cx="715.9" cy="113.8" r="1.75" class="dk"/><circle cx="619.8" cy="249.7" r="1.75" class="dy"/><circle cx="646.0" cy="182.9" r="1.75" class="dy"/><circle cx="684.7" cy="170.5" r="1.75" class="dr"/><circle cx="674.6" cy="200.0" r="1.75" class="dy"/><circle cx="634.8" cy="185.9" r="1.75" class="dr"/><circle cx="631.3" cy="136.4" r="1.75" class="dr"/><circle cx="642.3" cy="208.9" r="1.75" class="dy"/><circle cx="767.6" cy="163.2" r="1.75" class="dk"/><circle cx="644.7" cy="206.9" r="1.75" class="dk"/><circle cx="665.3" cy="177.6" r="1.75" class="dy"/><circle cx="685.3" cy="169.0" r="1.75" class="dr"/><circle cx="676.6" cy="273.7" r="1.75" class="dy"/><circle cx="745.2" cy="183.2" r="1.75" class="dy"/><circle cx="618.6" cy="99.6" r="1.75" class="dy"/><circle cx="771.4" cy="147.8" r="1.75" class="dr"/><circle cx="670.5" cy="207.3" r="1.75" class="dy"/><circle cx="666.2" cy="169.7" r="1.75" class="dy"/><circle cx="637.3" cy="117.8" r="1.75" class="dk"/><circle cx="737.9" cy="118.7" r="1.75" class="dr"/><circle cx="657.7" cy="117.7" r="1.75" class="dr"/><circle cx="639.0" cy="191.4" r="1.75" class="dk"/><circle cx="545.3" cy="197.3" r="1.75" class="dy"/><circle cx="642.4" cy="185.8" r="1.75" class="dr"/><circle cx="684.3" cy="229.6" r="1.75" class="dy"/><circle cx="759.8" cy="164.8" r="1.75" class="dy"/><circle cx="767.1" cy="108.0" r="1.75" class="dy"/><circle cx="767.0" cy="150.1" r="1.75" class="dr"/><circle cx="646.6" cy="187.6" r="1.75" class="dk"/><circle cx="618.1" cy="239.6" r="1.75" class="dy"/><circle cx="707.0" cy="224.4" r="1.75" class="dy"/><circle cx="720.1" cy="110.8" r="1.75" class="dy"/><circle cx="635.8" cy="194.5" r="1.75" class="dy"/><circle cx="720.0" cy="148.4" r="1.75" class="dr"/><circle cx="668.1" cy="188.0" r="1.75" class="dk"/><circle cx="720.8" cy="151.0" r="1.75" class="dy"/><circle cx="782.8" cy="147.5" r="1.75" class="dy"/><circle cx="630.6" cy="196.3" r="1.75" class="dr"/><circle cx="656.8" cy="280.7" r="1.75" class="dy"/><circle cx="669.9" cy="272.3" r="1.75" class="dk"/><circle cx="616.7" cy="250.6" r="1.75" class="dy"/><circle cx="605.6" cy="245.6" r="1.75" class="dy"/><circle cx="667.9" cy="197.1" r="1.75" class="dy"/><circle cx="751.3" cy="124.1" r="1.75" class="dy"/><circle cx="723.3" cy="193.4" r="1.75" class="dy"/><circle cx="769.5" cy="111.3" r="1.75" class="dy"/><circle cx="662.4" cy="149.3" r="1.75" class="dr"/><circle cx="616.5" cy="183.0" r="1.75" class="dy"/><circle cx="668.5" cy="181.1" r="1.75" class="dy"/><circle cx="739.3" cy="149.5" r="1.75" class="dr"/><circle cx="620.8" cy="270.0" r="1.75" class="dy"/><circle cx="742.2" cy="156.4" r="1.75" class="dy"/><circle cx="745.3" cy="175.4" r="1.75" class="dy"/><circle cx="750.8" cy="134.1" r="1.75" class="dy"/><circle cx="616.3" cy="266.8" r="1.75" class="dr"/><circle cx="733.2" cy="204.3" r="1.75" class="dy"/><circle cx="655.3" cy="244.7" r="1.75" class="dy"/><circle cx="641.9" cy="203.0" r="1.75" class="dy"/><circle cx="747.7" cy="250.1" r="1.75" class="dy"/><circle cx="646.5" cy="161.6" r="1.75" class="dy"/><circle cx="621.0" cy="187.5" r="1.75" class="dy"/><circle cx="732.2" cy="135.4" r="1.75" class="dy"/><circle cx="620.7" cy="158.2" r="1.75" class="dy"/><circle cx="741.7" cy="278.9" r="1.75" class="dk"/><circle cx="664.0" cy="198.7" r="1.75" class="dy"/><circle cx="733.7" cy="138.3" r="1.75" class="dk"/><circle cx="756.9" cy="120.5" r="1.75" class="dk"/><circle cx="734.2" cy="283.7" r="1.75" class="dy"/><circle cx="720.2" cy="152.8" r="1.75" class="dy"/><circle cx="677.5" cy="127.0" r="1.75" class="dr"/><circle cx="611.8" cy="210.5" r="1.75" class="dy"/><circle cx="644.0" cy="207.4" r="1.75" class="dy"/><circle cx="597.3" cy="239.8" r="1.75" class="dy"/><circle cx="713.6" cy="163.0" r="1.75" class="dy"/><circle cx="691.0" cy="240.2" r="1.75" class="dy"/><circle cx="726.3" cy="193.0" r="1.75" class="dy"/><circle cx="765.6" cy="116.0" r="1.75" class="dk"/><circle cx="727.7" cy="160.6" r="1.75" class="dy"/><circle cx="669.7" cy="179.9" r="1.75" class="dk"/><circle cx="652.7" cy="231.7" r="1.75" class="dk"/><circle cx="774.1" cy="202.7" r="1.75" class="dr"/><circle cx="646.0" cy="212.2" r="1.75" class="dr"/><circle cx="610.0" cy="246.2" r="1.75" class="dy"/><circle cx="778.9" cy="277.8" r="1.75" class="dr"/><circle cx="650.5" cy="185.7" r="1.75" class="dr"/><circle cx="636.0" cy="150.2" r="1.75" class="dy"/><circle cx="703.3" cy="149.9" r="1.75" class="dy"/><circle cx="637.2" cy="188.6" r="1.75" class="dy"/><circle cx="647.9" cy="112.9" r="1.75" class="dy"/><circle cx="644.1" cy="162.2" r="1.75" class="dr"/><circle cx="773.2" cy="177.3" r="1.75" class="dr"/><circle cx="740.9" cy="173.8" r="1.75" class="dy"/><circle cx="741.5" cy="275.9" r="1.75" class="dr"/><circle cx="612.6" cy="222.6" r="1.75" class="dr"/><circle cx="727.2" cy="161.7" r="1.75" class="dy"/><circle cx="615.7" cy="254.8" r="1.75" class="dy"/><circle cx="583.7" cy="187.0" r="1.75" class="dy"/><circle cx="729.6" cy="101.6" r="1.75" class="dy"/><circle cx="625.1" cy="131.5" r="1.75" class="dk"/><circle cx="716.0" cy="145.1" r="1.75" class="dy"/><circle cx="759.4" cy="117.7" r="1.75" class="dy"/><circle cx="658.9" cy="272.7" r="1.75" class="dy"/><circle cx="659.5" cy="285.8" r="1.75" class="dy"/><circle cx="683.7" cy="278.5" r="1.75" class="dy"/><circle cx="644.5" cy="199.1" r="1.75" class="dr"/><circle cx="762.5" cy="123.1" r="1.75" class="dy"/><circle cx="634.2" cy="202.1" r="1.75" class="dk"/><circle cx="618.4" cy="176.0" r="1.75" class="dr"/><circle cx="645.4" cy="209.7" r="1.75" class="dy"/><circle cx="696.8" cy="278.1" r="1.75" class="dy"/><circle cx="632.4" cy="267.9" r="1.75" class="dy"/><circle cx="708.4" cy="254.2" r="1.75" class="dk"/><circle cx="680.2" cy="128.7" r="1.75" class="dy"/><circle cx="724.0" cy="152.2" r="1.75" class="dy"/><circle cx="673.0" cy="154.8" r="1.75" class="dr"/><circle cx="665.8" cy="114.3" r="1.75" class="dy"/><circle cx="749.9" cy="191.5" r="1.75" class="dr"/><circle cx="653.2" cy="233.1" r="1.75" class="dy"/><circle cx="606.1" cy="230.5" r="1.75" class="dy"/><circle cx="635.3" cy="184.1" r="1.75" class="dy"/><circle cx="625.9" cy="135.4" r="1.75" class="dy"/><circle cx="707.0" cy="284.7" r="1.75" class="dy"/><circle cx="673.1" cy="210.7" r="1.75" class="dr"/><circle cx="760.2" cy="254.4" r="1.75" class="dy"/><circle cx="731.4" cy="156.7" r="1.75" class="dy"/><circle cx="740.0" cy="172.2" r="1.75" class="dy"/><circle cx="639.6" cy="190.4" r="1.75" class="dy"/><circle cx="639.6" cy="182.5" r="1.75" class="dy"/><circle cx="625.3" cy="138.3" r="1.75" class="dy"/><circle cx="773.6" cy="191.3" r="1.75" class="dk"/><circle cx="742.4" cy="184.4" r="1.75" class="dr"/><circle cx="602.4" cy="235.6" r="1.75" class="dy"/><circle cx="725.6" cy="160.6" r="1.75" class="dy"/><circle cx="596.3" cy="242.4" r="1.75" class="dk"/><circle cx="647.0" cy="185.6" r="1.75" class="dk"/><circle cx="702.6" cy="110.7" r="1.75" class="dy"/><circle cx="680.3" cy="234.3" r="1.75" class="dr"/><circle cx="644.8" cy="270.7" r="1.75" class="dr"/><circle cx="769.5" cy="132.1" r="1.75" class="dk"/><circle cx="775.3" cy="278.0" r="1.75" class="dy"/><circle cx="619.5" cy="204.0" r="1.75" class="dy"/><circle cx="645.7" cy="198.2" r="1.75" class="dy"/><circle cx="661.0" cy="197.9" r="1.75" class="dy"/><circle cx="661.6" cy="118.8" r="1.75" class="dk"/><circle cx="663.8" cy="113.8" r="1.75" class="dk"/><circle cx="762.6" cy="104.4" r="1.75" class="dy"/><circle cx="670.2" cy="198.0" r="1.75" class="dy"/><circle cx="658.0" cy="122.6" r="1.75" class="dy"/><circle cx="735.5" cy="117.6" r="1.75" class="dy"/><circle cx="768.0" cy="105.7" r="1.75" class="dr"/><circle cx="772.7" cy="190.2" r="1.75" class="dr"/><circle cx="770.4" cy="147.4" r="1.75" class="dr"/><circle cx="644.0" cy="169.8" r="1.75" class="dy"/><circle cx="775.7" cy="164.2" r="1.75" class="dy"/><circle cx="618.7" cy="193.6" r="1.75" class="dy"/><circle cx="650.5" cy="120.1" r="1.75" class="dy"/><circle cx="643.0" cy="207.6" r="1.75" class="dy"/><circle cx="722.3" cy="149.1" r="1.75" class="dr"/><circle cx="768.3" cy="169.3" r="1.75" class="dr"/><circle cx="643.8" cy="190.7" r="1.75" class="dy"/><circle cx="751.0" cy="136.2" r="1.75" class="dy"/><circle cx="656.0" cy="235.7" r="1.75" class="dy"/><circle cx="772.6" cy="119.2" r="1.75" class="dy"/><circle cx="583.0" cy="181.7" r="1.75" class="dy"/><circle cx="668.5" cy="154.5" r="1.75" class="dy"/><circle cx="597.9" cy="237.8" r="1.75" class="dy"/><circle cx="778.8" cy="279.7" r="1.75" class="dy"/><circle cx="713.6" cy="151.7" r="1.75" class="dy"/><circle cx="622.2" cy="192.1" r="1.75" class="dk"/><circle cx="636.0" cy="198.0" r="1.75" class="dr"/><circle cx="596.2" cy="178.0" r="1.75" class="dy"/><circle cx="639.3" cy="174.6" r="1.75" class="dy"/><circle cx="657.1" cy="255.3" r="1.75" class="dy"/><circle cx="767.3" cy="105.4" r="1.75" class="dy"/><circle cx="625.2" cy="209.2" r="1.75" class="dy"/><circle cx="672.9" cy="184.4" r="1.75" class="dy"/><circle cx="659.6" cy="279.1" r="1.75" class="dr"/><circle cx="746.9" cy="165.9" r="1.75" class="dy"/><circle cx="657.2" cy="213.6" r="1.75" class="dy"/><circle cx="543.5" cy="243.5" r="1.75" class="dy"/><circle cx="773.8" cy="189.2" r="1.75" class="dy"/><circle cx="756.1" cy="120.7" r="1.75" class="dr"/><circle cx="631.2" cy="250.2" r="1.75" class="dy"/><circle cx="593.4" cy="250.6" r="1.75" class="dr"/><circle cx="646.5" cy="106.9" r="1.75" class="dr"/><circle cx="552.4" cy="239.7" r="1.75" class="dy"/><circle cx="642.8" cy="194.6" r="1.75" class="dy"/><circle cx="601.3" cy="220.0" r="1.75" class="dy"/><circle cx="730.8" cy="160.5" r="1.75" class="dr"/><circle cx="630.4" cy="137.6" r="1.75" class="dr"/><circle cx="638.6" cy="199.3" r="1.75" class="dy"/><circle cx="781.8" cy="194.5" r="1.75" class="dy"/><circle cx="681.0" cy="177.7" r="1.75" class="dy"/><circle cx="769.9" cy="109.9" r="1.75" class="dy"/><circle cx="643.8" cy="209.9" r="1.75" class="dr"/><circle cx="775.6" cy="190.7" r="1.75" class="dy"/><circle cx="646.5" cy="196.8" r="1.75" class="dr"/><circle cx="607.4" cy="226.6" r="1.75" class="dk"/><circle cx="658.3" cy="127.1" r="1.75" class="dy"/><circle cx="539.5" cy="196.9" r="1.75" class="dk"/><circle cx="656.7" cy="273.6" r="1.75" class="dk"/><circle cx="650.9" cy="128.1" r="1.75" class="dy"/><circle cx="663.9" cy="148.9" r="1.75" class="dk"/><circle cx="641.9" cy="179.9" r="1.75" class="dy"/><circle cx="752.6" cy="183.2" r="1.75" class="dr"/><circle cx="642.1" cy="190.9" r="1.75" class="dy"/><circle cx="623.3" cy="135.4" r="1.75" class="dy"/><circle cx="649.6" cy="195.7" r="1.75" class="dy"/><circle cx="704.4" cy="151.2" r="1.75" class="dr"/><circle cx="643.3" cy="208.5" r="1.75" class="dr"/><circle cx="659.6" cy="154.0" r="1.75" class="dy"/><circle cx="596.9" cy="239.5" r="1.75" class="dk"/><circle cx="708.0" cy="255.0" r="1.75" class="dk"/><circle cx="773.8" cy="243.1" r="1.75" class="dy"/><circle cx="661.9" cy="180.2" r="1.75" class="dy"/><circle cx="621.6" cy="136.5" r="1.75" class="dy"/><circle cx="587.0" cy="247.7" r="1.75" class="dy"/><circle cx="655.1" cy="242.1" r="1.75" class="dy"/><circle cx="667.9" cy="272.0" r="1.75" class="dk"/><circle cx="619.9" cy="174.2" r="1.75" class="dy"/><circle cx="738.4" cy="154.1" r="1.75" class="dr"/><circle cx="604.2" cy="247.9" r="1.75" class="dy"/><circle cx="640.9" cy="240.6" r="1.75" class="dy"/><circle cx="658.2" cy="281.8" r="1.75" class="dr"/><circle cx="745.4" cy="178.4" r="1.75" class="dy"/><circle cx="746.3" cy="179.6" r="1.75" class="dy"/><circle cx="733.1" cy="118.3" r="1.75" class="dy"/><circle cx="777.8" cy="275.5" r="1.75" class="dy"/><circle cx="693.4" cy="278.3" r="1.75" class="dy"/><circle cx="778.2" cy="121.6" r="1.75" class="dy"/><circle cx="643.6" cy="197.2" r="1.75" class="dy"/><circle cx="597.9" cy="239.3" r="1.75" class="dy"/><circle cx="764.9" cy="157.2" r="1.75" class="dy"/><circle cx="537.9" cy="201.0" r="1.75" class="dy"/><circle cx="752.6" cy="182.9" r="1.75" class="dr"/><circle cx="654.8" cy="240.1" r="1.75" class="dy"/><circle cx="551.8" cy="170.5" r="1.75" class="dy"/><circle cx="714.3" cy="146.2" r="1.75" class="dy"/><circle cx="711.6" cy="149.4" r="1.75" class="dy"/><circle cx="640.5" cy="198.2" r="1.75" class="dy"/><circle cx="577.9" cy="104.7" r="1.75" class="dy"/><circle cx="772.4" cy="119.2" r="1.75" class="dy"/><circle cx="734.2" cy="150.1" r="1.75" class="dy"/><circle cx="621.0" cy="171.5" r="1.75" class="dy"/><circle cx="773.9" cy="285.6" r="1.75" class="dy"/><circle cx="655.3" cy="188.6" r="1.75" class="dy"/><circle cx="656.9" cy="289.0" r="1.75" class="dk"/><circle cx="704.4" cy="213.1" r="1.75" class="dy"/><circle cx="768.4" cy="105.3" r="1.75" class="dy"/><circle cx="670.2" cy="175.9" r="1.75" class="dy"/><circle cx="718.7" cy="148.5" r="1.75" class="dy"/><circle cx="779.4" cy="290.2" r="1.75" class="dy"/><circle cx="635.1" cy="188.4" r="1.75" class="dr"/><circle cx="687.0" cy="194.9" r="1.75" class="dy"/><circle cx="715.9" cy="154.3" r="1.75" class="dy"/><circle cx="753.3" cy="122.2" r="1.75" class="dy"/><circle cx="709.3" cy="158.1" r="1.75" class="dr"/><circle cx="653.5" cy="188.4" r="1.75" class="dy"/><circle cx="654.5" cy="246.8" r="1.75" class="dr"/><circle cx="647.9" cy="190.0" r="1.75" class="dk"/><circle cx="717.9" cy="152.0" r="1.75" class="dk"/><circle cx="641.5" cy="178.3" r="1.75" class="dr"/><circle cx="713.6" cy="149.9" r="1.75" class="dr"/><circle cx="790.0" cy="196.0" r="1.75" class="dy"/><circle cx="553.6" cy="213.1" r="1.75" class="dy"/><circle cx="644.1" cy="183.5" r="1.75" class="dr"/><circle cx="699.4" cy="194.3" r="1.75" class="dy"/><circle cx="595.0" cy="158.5" r="1.75" class="dr"/><circle cx="660.2" cy="249.5" r="1.75" class="dk"/><circle cx="723.9" cy="274.7" r="1.75" class="dy"/><circle cx="777.4" cy="215.4" r="1.75" class="dr"/><circle cx="656.6" cy="225.4" r="1.75" class="dy"/><circle cx="684.3" cy="119.4" r="1.75" class="dy"/><circle cx="774.6" cy="111.5" r="1.75" class="dk"/><circle cx="745.1" cy="119.6" r="1.75" class="dy"/><circle cx="591.7" cy="156.2" r="1.75" class="dy"/><circle cx="645.7" cy="157.0" r="1.75" class="dy"/><circle cx="640.3" cy="190.0" r="1.75" class="dk"/><circle cx="650.3" cy="222.8" r="1.75" class="dy"/><circle cx="648.4" cy="176.5" r="1.75" class="dy"/><circle cx="706.6" cy="185.8" r="1.75" class="dy"/><circle cx="706.2" cy="209.7" r="1.75" class="dr"/><circle cx="726.4" cy="145.4" r="1.75" class="dy"/><circle cx="643.5" cy="202.1" r="1.75" class="dr"/><circle cx="691.2" cy="166.8" r="1.75" class="dy"/><circle cx="595.8" cy="248.1" r="1.75" class="dk"/><circle cx="713.5" cy="145.7" r="1.75" class="dy"/><circle cx="591.6" cy="133.9" r="1.75" class="dy"/><circle cx="769.9" cy="190.5" r="1.75" class="dr"/><circle cx="747.8" cy="175.6" r="1.75" class="dk"/><circle cx="659.2" cy="270.7" r="1.75" class="dr"/><circle cx="754.9" cy="149.2" r="1.75" class="dy"/><circle cx="638.0" cy="250.0" r="1.75" class="dy"/><circle cx="707.7" cy="193.9" r="1.75" class="dr"/><circle cx="547.0" cy="143.6" r="1.75" class="dr"/><circle cx="723.1" cy="227.5" r="1.75" class="dy"/><circle cx="547.3" cy="191.2" r="1.75" class="dk"/><circle cx="738.4" cy="195.0" r="1.75" class="dy"/><circle cx="745.9" cy="137.1" r="1.75" class="dy"/><circle cx="576.3" cy="257.4" r="1.75" class="dy"/><circle cx="723.1" cy="150.1" r="1.75" class="dy"/><circle cx="642.3" cy="184.9" r="1.75" class="dy"/><circle cx="652.3" cy="178.9" r="1.75" class="dk"/><circle cx="614.7" cy="226.1" r="1.75" class="dk"/><circle cx="644.7" cy="166.5" r="1.75" class="dy"/><circle cx="648.1" cy="102.2" r="1.75" class="dy"/><circle cx="706.9" cy="215.1" r="1.75" class="dy"/><circle cx="626.7" cy="189.3" r="1.75" class="dr"/><circle cx="779.6" cy="151.8" r="1.75" class="dy"/><circle cx="651.5" cy="138.6" r="1.75" class="dy"/><circle cx="661.4" cy="199.3" r="1.75" class="dy"/><circle cx="637.2" cy="194.3" r="1.75" class="dy"/><circle cx="656.0" cy="115.8" r="1.75" class="dy"/><circle cx="646.2" cy="219.8" r="1.75" class="dy"/><circle cx="578.0" cy="127.1" r="1.75" class="dk"/><circle cx="770.5" cy="284.6" r="1.75" class="dk"/><circle cx="534.4" cy="220.4" r="1.75" class="dk"/><circle cx="624.0" cy="183.3" r="1.75" class="dk"/><circle cx="732.4" cy="191.9" r="1.75" class="dy"/><circle cx="681.1" cy="136.9" r="1.75" class="dy"/><circle cx="750.6" cy="133.6" r="1.75" class="dy"/><circle cx="664.6" cy="182.0" r="1.75" class="dr"/><circle cx="690.1" cy="123.9" r="1.75" class="dy"/><circle cx="705.7" cy="125.5" r="1.75" class="dy"/><circle cx="622.8" cy="210.7" r="1.75" class="dk"/><circle cx="665.2" cy="200.5" r="1.75" class="dy"/><circle cx="643.7" cy="193.7" r="1.75" class="dy"/><circle cx="741.2" cy="177.4" r="1.75" class="dy"/><circle cx="564.6" cy="157.2" r="1.75" class="dy"/><circle cx="716.1" cy="145.0" r="1.75" class="dr"/><circle cx="665.7" cy="253.6" r="1.75" class="dk"/><circle cx="622.0" cy="218.5" r="1.75" class="dy"/><circle cx="553.7" cy="146.5" r="1.75" class="dy"/><circle cx="670.5" cy="127.7" r="1.75" class="dy"/><circle cx="748.4" cy="176.6" r="1.75" class="dr"/><circle cx="614.4" cy="187.4" r="1.75" class="dk"/><circle cx="649.3" cy="186.8" r="1.75" class="dy"/><circle cx="579.4" cy="133.2" r="1.75" class="dy"/><circle cx="773.4" cy="110.4" r="1.75" class="dk"/><circle cx="776.6" cy="193.7" r="1.75" class="dk"/><circle cx="734.6" cy="141.4" r="1.75" class="dr"/><circle cx="771.2" cy="189.7" r="1.75" class="dy"/><circle cx="646.8" cy="174.1" r="1.75" class="dr"/><circle cx="729.7" cy="160.7" r="1.75" class="dr"/><circle cx="776.5" cy="170.7" r="1.75" class="dy"/><circle cx="660.5" cy="150.1" r="1.75" class="dy"/><circle cx="765.2" cy="106.2" r="1.75" class="dy"/><circle cx="669.4" cy="270.0" r="1.75" class="dr"/><circle cx="710.0" cy="137.7" r="1.75" class="dy"/><circle cx="657.5" cy="261.4" r="1.75" class="dy"/><circle cx="784.2" cy="282.1" r="1.75" class="dy"/><circle cx="680.3" cy="234.3" r="1.75" class="dk"/><circle cx="703.1" cy="259.0" r="1.75" class="dy"/><circle cx="663.0" cy="151.8" r="1.75" class="dy"/><circle cx="722.5" cy="148.3" r="1.75" class="dk"/><circle cx="665.1" cy="199.6" r="1.75" class="dk"/><circle cx="683.2" cy="273.8" r="1.75" class="dk"/><circle cx="763.1" cy="111.9" r="1.75" class="dk"/><circle cx="660.1" cy="267.2" r="1.75" class="dk"/><circle cx="762.3" cy="212.0" r="1.75" class="dr"/><circle cx="608.8" cy="186.4" r="1.75" class="dy"/><circle cx="717.0" cy="232.3" r="1.75" class="dy"/><circle cx="549.9" cy="227.6" r="1.75" class="dr"/><circle cx="635.4" cy="186.4" r="1.75" class="dk"/><circle cx="642.4" cy="179.5" r="1.75" class="dr"/><circle cx="720.2" cy="155.2" r="1.75" class="dy"/><circle cx="727.0" cy="162.0" r="1.75" class="dy"/><circle cx="757.8" cy="113.6" r="1.75" class="dr"/><circle cx="716.0" cy="129.8" r="1.75" class="dy"/><circle cx="626.0" cy="248.9" r="1.75" class="dk"/><circle cx="767.9" cy="112.4" r="1.75" class="dk"/><circle cx="638.0" cy="191.8" r="1.75" class="dy"/><circle cx="620.1" cy="214.0" r="1.75" class="dr"/><circle cx="750.3" cy="193.3" r="1.75" class="dr"/><circle cx="619.8" cy="139.3" r="1.75" class="dr"/><circle cx="630.6" cy="191.8" r="1.75" class="dy"/><circle cx="660.5" cy="117.6" r="1.75" class="dy"/><circle cx="637.7" cy="184.3" r="1.75" class="dy"/><circle cx="607.7" cy="228.2" r="1.75" class="dk"/><circle cx="678.0" cy="277.6" r="1.75" class="dr"/><circle cx="781.4" cy="292.2" r="1.75" class="dr"/><circle cx="645.6" cy="189.6" r="1.75" class="dy"/><circle cx="652.4" cy="250.1" r="1.75" class="dy"/><circle cx="657.1" cy="197.4" r="1.75" class="dy"/><circle cx="754.4" cy="172.9" r="1.75" class="dr"/><circle cx="686.8" cy="169.3" r="1.75" class="dy"/><circle cx="749.6" cy="138.6" r="1.75" class="dy"/><circle cx="642.2" cy="186.2" r="1.75" class="dy"/><circle cx="717.5" cy="115.7" r="1.75" class="dy"/><circle cx="532.3" cy="201.1" r="1.75" class="dy"/><circle cx="695.3" cy="194.3" r="1.75" class="dy"/><circle cx="656.6" cy="269.7" r="1.75" class="dy"/><circle cx="722.1" cy="147.2" r="1.75" class="dy"/><circle cx="708.0" cy="157.6" r="1.75" class="dr"/><circle cx="716.2" cy="148.0" r="1.75" class="dk"/><circle cx="648.0" cy="222.1" r="1.75" class="dr"/><circle cx="684.5" cy="172.3" r="1.75" class="dy"/><circle cx="705.9" cy="263.0" r="1.75" class="dk"/><circle cx="701.0" cy="231.2" r="1.75" class="dy"/><circle cx="620.1" cy="140.7" r="1.75" class="dr"/><circle cx="703.3" cy="185.8" r="1.75" class="dy"/><circle cx="681.2" cy="152.1" r="1.75" class="dy"/><circle cx="637.3" cy="196.7" r="1.75" class="dy"/><circle cx="610.1" cy="223.6" r="1.75" class="dy"/><circle cx="716.7" cy="139.3" r="1.75" class="dr"/><circle cx="622.5" cy="200.5" r="1.75" class="dy"/><circle cx="643.7" cy="196.3" r="1.75" class="dr"/><circle cx="754.3" cy="146.0" r="1.75" class="dk"/><circle cx="654.7" cy="192.8" r="1.75" class="dr"/><circle cx="604.3" cy="136.0" r="1.75" class="dy"/><circle cx="674.6" cy="119.4" r="1.75" class="dr"/><circle cx="722.4" cy="156.6" r="1.75" class="dk"/><circle cx="722.8" cy="153.4" r="1.75" class="dk"/><circle cx="715.2" cy="193.5" r="1.75" class="dk"/><circle cx="651.4" cy="206.1" r="1.75" class="dy"/><circle cx="681.8" cy="109.9" r="1.75" class="dy"/><circle cx="696.7" cy="280.9" r="1.75" class="dy"/><circle cx="707.9" cy="117.1" r="1.75" class="dy"/><circle cx="729.7" cy="142.0" r="1.75" class="dk"/><circle cx="593.5" cy="260.0" r="1.75" class="dy"/><circle cx="726.7" cy="225.3" r="1.75" class="dy"/><circle cx="609.4" cy="224.8" r="1.75" class="dy"/><circle cx="659.2" cy="289.7" r="1.75" class="dr"/><circle cx="690.7" cy="201.4" r="1.75" class="dy"/><circle cx="717.1" cy="152.1" r="1.75" class="dk"/><circle cx="611.9" cy="244.5" r="1.75" class="dy"/><circle cx="658.1" cy="115.4" r="1.75" class="dk"/><circle cx="708.3" cy="278.1" r="1.75" class="dr"/><circle cx="600.6" cy="233.6" r="1.75" class="dk"/><circle cx="662.4" cy="161.5" r="1.75" class="dy"/><circle cx="590.6" cy="238.4" r="1.75" class="dk"/><circle cx="742.7" cy="172.5" r="1.75" class="dy"/><circle cx="761.9" cy="166.1" r="1.75" class="dy"/><circle cx="775.1" cy="277.2" r="1.75" class="dy"/><circle cx="631.8" cy="186.1" r="1.75" class="dy"/><circle cx="720.3" cy="157.0" r="1.75" class="dk"/><circle cx="646.7" cy="159.3" r="1.75" class="dy"/><circle cx="719.3" cy="153.5" r="1.75" class="dy"/><circle cx="752.1" cy="125.1" r="1.75" class="dr"/><circle cx="622.3" cy="198.8" r="1.75" class="dy"/><circle cx="631.3" cy="189.0" r="1.75" class="dy"/><circle cx="725.7" cy="160.0" r="1.75" class="dy"/><circle cx="717.2" cy="159.3" r="1.75" class="dy"/><circle cx="576.5" cy="185.6" r="1.75" class="dy"/><circle cx="735.6" cy="162.6" r="1.75" class="dy"/><circle cx="721.4" cy="149.0" r="1.75" class="dr"/><circle cx="749.8" cy="147.6" r="1.75" class="dy"/><circle cx="741.6" cy="171.8" r="1.75" class="dk"/><circle cx="770.5" cy="103.5" r="1.75" class="dy"/><circle cx="656.6" cy="118.3" r="1.75" class="dy"/><circle cx="651.9" cy="187.8" r="1.75" class="dy"/><circle cx="747.2" cy="170.3" r="1.75" class="dy"/><circle cx="692.6" cy="164.8" r="1.75" class="dy"/><circle cx="670.0" cy="200.9" r="1.75" class="dk"/><circle cx="621.1" cy="217.4" r="1.75" class="dy"/><circle cx="685.0" cy="237.0" r="1.75" class="dy"/><circle cx="565.9" cy="147.1" r="1.75" class="dy"/><circle cx="703.0" cy="143.2" r="1.75" class="dy"/><circle cx="752.7" cy="165.1" r="1.75" class="dy"/><circle cx="636.9" cy="201.7" r="1.75" class="dy"/><circle cx="668.0" cy="194.6" r="1.75" class="dy"/><circle cx="656.9" cy="268.5" r="1.75" class="dy"/><circle cx="639.3" cy="195.0" r="1.75" class="dk"/><circle cx="638.2" cy="247.1" r="1.75" class="dr"/><circle cx="650.8" cy="136.5" r="1.75" class="dr"/><circle cx="638.2" cy="185.0" r="1.75" class="dy"/><circle cx="641.4" cy="176.1" r="1.75" class="dk"/><circle cx="678.0" cy="198.4" r="1.75" class="dr"/><circle cx="648.5" cy="192.6" r="1.75" class="dy"/><circle cx="722.9" cy="227.5" r="1.75" class="dy"/><circle cx="625.3" cy="269.7" r="1.75" class="dr"/><circle cx="626.2" cy="208.9" r="1.75" class="dr"/><circle cx="577.8" cy="239.3" r="1.75" class="dk"/><circle cx="544.9" cy="216.3" r="1.75" class="dr"/><circle cx="743.2" cy="188.2" r="1.75" class="dy"/><circle cx="654.9" cy="182.1" r="1.75" class="dy"/><circle cx="640.8" cy="194.3" r="1.75" class="dy"/><circle cx="658.7" cy="153.4" r="1.75" class="dy"/><circle cx="629.1" cy="186.9" r="1.75" class="dy"/><circle cx="687.3" cy="245.5" r="1.75" class="dk"/><circle cx="754.1" cy="127.4" r="1.75" class="dy"/><circle cx="641.1" cy="187.6" r="1.75" class="dy"/><circle cx="618.9" cy="186.0" r="1.75" class="dk"/><circle cx="707.8" cy="159.4" r="1.75" class="dy"/><circle cx="698.6" cy="113.3" r="1.75" class="dy"/><circle cx="641.4" cy="195.5" r="1.75" class="dr"/><circle cx="599.5" cy="134.5" r="1.75" class="dy"/><circle cx="719.1" cy="152.9" r="1.75" class="dy"/><circle cx="724.4" cy="165.5" r="1.75" class="dy"/><circle cx="621.5" cy="220.9" r="1.75" class="dy"/><circle cx="749.9" cy="274.9" r="1.75" class="dy"/><circle cx="738.5" cy="195.6" r="1.75" class="dr"/><circle cx="644.3" cy="205.4" r="1.75" class="dk"/><circle cx="776.5" cy="191.4" r="1.75" class="dk"/><circle cx="628.9" cy="203.2" r="1.75" class="dk"/><circle cx="700.2" cy="115.0" r="1.75" class="dk"/><circle cx="601.4" cy="251.7" r="1.75" class="dy"/><circle cx="669.3" cy="201.9" r="1.75" class="dr"/><circle cx="618.3" cy="214.7" r="1.75" class="dy"/><circle cx="637.3" cy="211.6" r="1.75" class="dy"/><circle cx="649.3" cy="119.4" r="1.75" class="dy"/><circle cx="721.7" cy="225.9" r="1.75" class="dy"/><circle cx="593.1" cy="249.1" r="1.75" class="dk"/><circle cx="763.6" cy="171.4" r="1.75" class="dy"/><circle cx="680.1" cy="175.5" r="1.75" class="dr"/><circle cx="658.2" cy="262.3" r="1.75" class="dy"/><circle cx="769.6" cy="111.7" r="1.75" class="dy"/><circle cx="743.9" cy="130.8" r="1.75" class="dr"/><circle cx="692.6" cy="175.6" r="1.75" class="dy"/><circle cx="550.1" cy="144.0" r="1.75" class="dk"/><circle cx="650.1" cy="140.8" r="1.75" class="dr"/><circle cx="643.7" cy="200.1" r="1.75" class="dy"/><circle cx="571.0" cy="132.6" r="1.75" class="dy"/><circle cx="588.3" cy="170.1" r="1.75" class="dy"/><circle cx="776.4" cy="186.0" r="1.75" class="dr"/><circle cx="642.5" cy="181.1" r="1.75" class="dy"/><circle cx="756.3" cy="169.8" r="1.75" class="dy"/><circle cx="657.9" cy="256.4" r="1.75" class="dk"/><circle cx="671.3" cy="107.2" r="1.75" class="dr"/><circle cx="723.5" cy="152.2" r="1.75" class="dy"/><circle cx="703.5" cy="123.2" r="1.75" class="dr"/><circle cx="718.7" cy="201.7" r="1.75" class="dr"/><circle cx="640.5" cy="206.6" r="1.75" class="dy"/><circle cx="715.4" cy="264.6" r="1.75" class="dr"/><circle cx="656.5" cy="242.1" r="1.75" class="dy"/><circle cx="698.0" cy="194.0" r="1.75" class="dy"/><circle cx="758.4" cy="123.2" r="1.75" class="dy"/><circle cx="736.1" cy="258.6" r="1.75" class="dy"/><circle cx="618.0" cy="218.0" r="1.75" class="dy"/><circle cx="696.7" cy="164.4" r="1.75" class="dk"/><circle cx="745.0" cy="122.6" r="1.75" class="dy"/><circle cx="563.5" cy="143.3" r="1.75" class="dr"/><circle cx="726.0" cy="145.8" r="1.75" class="dy"/><circle cx="764.2" cy="283.3" r="1.75" class="dy"/><circle cx="664.2" cy="146.2" r="1.75" class="dy"/><circle cx="626.2" cy="187.0" r="1.75" class="dk"/><circle cx="647.5" cy="194.3" r="1.75" class="dr"/><circle cx="717.2" cy="149.0" r="1.75" class="dk"/><circle cx="694.8" cy="194.6" r="1.75" class="dy"/><circle cx="758.7" cy="127.8" r="1.75" class="dy"/><circle cx="644.0" cy="196.0" r="1.75" class="dy"/><circle cx="750.5" cy="212.2" r="1.75" class="dy"/><circle cx="640.2" cy="213.0" r="1.75" class="dy"/><circle cx="648.1" cy="226.4" r="1.75" class="dy"/><circle cx="642.8" cy="139.2" r="1.75" class="dk"/><circle cx="660.1" cy="182.6" r="1.75" class="dy"/><circle cx="617.4" cy="215.4" r="1.75" class="dy"/><circle cx="750.2" cy="145.0" r="1.75" class="dy"/><circle cx="572.3" cy="116.7" r="1.75" class="dy"/><circle cx="640.1" cy="227.1" r="1.75" class="dy"/><circle cx="654.8" cy="240.0" r="1.75" class="dy"/><circle cx="709.8" cy="190.8" r="1.75" class="dy"/><circle cx="646.6" cy="218.7" r="1.75" class="dy"/><circle cx="649.8" cy="123.3" r="1.75" class="dk"/><circle cx="566.8" cy="182.2" r="1.75" class="dy"/><circle cx="736.5" cy="142.9" r="1.75" class="dr"/><circle cx="669.3" cy="195.0" r="1.75" class="dy"/><circle cx="644.5" cy="207.6" r="1.75" class="dy"/><circle cx="584.4" cy="133.5" r="1.75" class="dy"/><circle cx="729.4" cy="220.7" r="1.75" class="dy"/><circle cx="648.4" cy="191.6" r="1.75" class="dk"/><circle cx="775.1" cy="191.6" r="1.75" class="dy"/><circle cx="685.6" cy="237.5" r="1.75" class="dr"/><circle cx="723.9" cy="147.8" r="1.75" class="dy"/><circle cx="741.3" cy="99.5" r="1.75" class="dr"/><circle cx="763.0" cy="171.3" r="1.75" class="dr"/><circle cx="657.5" cy="259.2" r="1.75" class="dr"/><circle cx="659.2" cy="289.2" r="1.75" class="dy"/><circle cx="646.0" cy="189.7" r="1.75" class="dy"/><circle cx="717.8" cy="147.0" r="1.75" class="dk"/><circle cx="658.8" cy="252.8" r="1.75" class="dk"/><circle cx="724.2" cy="157.8" r="1.75" class="dk"/><circle cx="677.0" cy="108.5" r="1.75" class="dy"/><circle cx="620.1" cy="226.8" r="1.75" class="dy"/><circle cx="715.8" cy="137.7" r="1.75" class="dy"/><circle cx="701.6" cy="233.2" r="1.75" class="dk"/><circle cx="662.8" cy="265.3" r="1.75" class="dy"/><circle cx="695.4" cy="195.8" r="1.75" class="dy"/><circle cx="642.0" cy="203.5" r="1.75" class="dy"/><circle cx="718.6" cy="179.2" r="1.75" class="dk"/><circle cx="644.8" cy="165.8" r="1.75" class="dy"/><circle cx="718.2" cy="164.1" r="1.75" class="dy"/><circle cx="661.5" cy="268.7" r="1.75" class="dy"/><circle cx="717.4" cy="182.6" r="1.75" class="dy"/><circle cx="655.3" cy="249.3" r="1.75" class="dy"/><circle cx="748.3" cy="151.7" r="1.75" class="dy"/><circle cx="643.0" cy="209.7" r="1.75" class="dr"/><circle cx="723.1" cy="157.6" r="1.75" class="dy"/><circle cx="665.2" cy="233.5" r="1.75" class="dy"/><circle cx="631.6" cy="142.4" r="1.75" class="dy"/><circle cx="748.0" cy="177.5" r="1.75" class="dy"/><circle cx="693.3" cy="281.2" r="1.75" class="dr"/><circle cx="723.8" cy="147.4" r="1.75" class="dy"/><circle cx="622.5" cy="186.6" r="1.75" class="dr"/><circle cx="644.5" cy="180.9" r="1.75" class="dy"/><circle cx="642.7" cy="188.5" r="1.75" class="dy"/><circle cx="581.0" cy="191.4" r="1.75" class="dr"/><circle cx="714.8" cy="145.1" r="1.75" class="dy"/><circle cx="659.3" cy="265.2" r="1.75" class="dy"/><circle cx="587.7" cy="240.5" r="1.75" class="dy"/><circle cx="551.9" cy="135.1" r="1.75" class="dr"/><circle cx="643.9" cy="188.0" r="1.75" class="dk"/><circle cx="782.5" cy="208.1" r="1.75" class="dr"/><circle cx="650.3" cy="249.1" r="1.75" class="dy"/><circle cx="735.2" cy="134.4" r="1.75" class="dy"/><circle cx="599.8" cy="241.6" r="1.75" class="dy"/><circle cx="693.7" cy="138.8" r="1.75" class="dy"/><circle cx="635.3" cy="189.3" r="1.75" class="dy"/><circle cx="644.9" cy="194.9" r="1.75" class="dy"/><circle cx="640.9" cy="187.6" r="1.75" class="dr"/><circle cx="645.0" cy="189.6" r="1.75" class="dy"/><circle cx="711.7" cy="250.9" r="1.75" class="dy"/><circle cx="787.7" cy="251.5" r="1.75" class="dy"/><circle cx="608.6" cy="246.4" r="1.75" class="dk"/><circle cx="631.7" cy="240.7" r="1.75" class="dk"/><circle cx="736.5" cy="272.0" r="1.75" class="dk"/><circle cx="585.4" cy="236.2" r="1.75" class="dy"/><circle cx="743.5" cy="131.8" r="1.75" class="dk"/><circle cx="635.4" cy="201.9" r="1.75" class="dy"/><circle cx="642.9" cy="166.6" r="1.75" class="dr"/><circle cx="639.2" cy="180.3" r="1.75" class="dk"/><circle cx="709.6" cy="206.2" r="1.75" class="dy"/><circle cx="600.3" cy="243.2" r="1.75" class="dy"/><circle cx="700.4" cy="272.5" r="1.75" class="dy"/><circle cx="633.4" cy="239.3" r="1.75" class="dy"/><circle cx="622.0" cy="253.0" r="1.75" class="dr"/><circle cx="645.8" cy="187.5" r="1.75" class="dr"/><circle cx="732.9" cy="192.8" r="1.75" class="dy"/><circle cx="594.2" cy="233.5" r="1.75" class="dy"/><circle cx="645.1" cy="193.3" r="1.75" class="dr"/><circle cx="772.9" cy="103.0" r="1.75" class="dy"/><circle cx="545.3" cy="209.7" r="1.75" class="dy"/><circle cx="723.5" cy="138.2" r="1.75" class="dy"/><circle cx="698.9" cy="276.9" r="1.75" class="dr"/><circle cx="537.5" cy="104.2" r="1.75" class="dr"/><circle cx="714.1" cy="244.0" r="1.75" class="dr"/><circle cx="624.9" cy="253.1" r="1.75" class="dy"/><circle cx="787.4" cy="178.8" r="1.75" class="dy"/><circle cx="655.0" cy="115.9" r="1.75" class="dy"/><circle cx="550.9" cy="240.5" r="1.75" class="dy"/><circle cx="522.7" cy="124.9" r="1.75" class="dy"/><circle cx="540.2" cy="198.9" r="1.75" class="dk"/><circle cx="707.5" cy="160.3" r="1.75" class="dr"/><circle cx="759.9" cy="166.8" r="1.75" class="dr"/><circle cx="715.5" cy="154.4" r="1.75" class="dy"/><circle cx="763.3" cy="114.5" r="1.75" class="dk"/><circle cx="674.8" cy="173.3" r="1.75" class="dr"/><circle cx="732.0" cy="150.5" r="1.75" class="dk"/><circle cx="674.5" cy="173.5" r="1.75" class="dr"/><circle cx="716.2" cy="146.5" r="1.75" class="dy"/><circle cx="590.9" cy="273.5" r="1.75" class="dy"/><circle cx="623.2" cy="135.2" r="1.75" class="dy"/><circle cx="767.5" cy="108.0" r="1.75" class="dr"/><circle cx="642.5" cy="200.2" r="1.75" class="dy"/><circle cx="657.6" cy="264.1" r="1.75" class="dk"/><circle cx="757.1" cy="163.7" r="1.75" class="dy"/><circle cx="624.6" cy="208.1" r="1.75" class="dy"/><circle cx="633.6" cy="201.1" r="1.75" class="dk"/><circle cx="715.4" cy="242.8" r="1.75" class="dk"/><circle cx="724.1" cy="224.3" r="1.75" class="dr"/><circle cx="725.3" cy="114.5" r="1.75" class="dk"/><circle cx="732.3" cy="251.6" r="1.75" class="dk"/><circle cx="643.7" cy="189.0" r="1.75" class="dy"/><circle cx="541.3" cy="164.9" r="1.75" class="dy"/><circle cx="635.6" cy="248.0" r="1.75" class="dy"/><circle cx="737.4" cy="147.8" r="1.75" class="dr"/><circle cx="711.4" cy="152.1" r="1.75" class="dk"/><circle cx="650.9" cy="183.3" r="1.75" class="dy"/><circle cx="718.1" cy="148.4" r="1.75" class="dy"/><circle cx="710.2" cy="198.3" r="1.75" class="dy"/><circle cx="718.4" cy="149.7" r="1.75" class="dy"/><circle cx="722.7" cy="145.2" r="1.75" class="dy"/><circle cx="527.1" cy="246.1" r="1.75" class="dy"/><circle cx="636.5" cy="194.0" r="1.75" class="dy"/><circle cx="778.6" cy="143.3" r="1.75" class="dr"/><circle cx="752.1" cy="156.3" r="1.75" class="dr"/><circle cx="738.1" cy="134.3" r="1.75" class="dk"/><circle cx="745.9" cy="174.3" r="1.75" class="dy"/><circle cx="745.4" cy="168.1" r="1.75" class="dy"/><circle cx="640.3" cy="207.1" r="1.75" class="dy"/><circle cx="640.1" cy="189.2" r="1.75" class="dr"/><circle cx="786.0" cy="148.3" r="1.75" class="dy"/><circle cx="731.1" cy="138.6" r="1.75" class="dy"/><circle cx="639.1" cy="190.7" r="1.75" class="dy"/><circle cx="637.1" cy="192.0" r="1.75" class="dy"/><circle cx="604.0" cy="231.0" r="1.75" class="dy"/><circle cx="547.6" cy="197.0" r="1.75" class="dy"/><circle cx="678.9" cy="150.9" r="1.75" class="dy"/><circle cx="691.3" cy="145.9" r="1.75" class="dy"/><circle cx="713.4" cy="110.5" r="1.75" class="dy"/><circle cx="720.9" cy="250.8" r="1.75" class="dr"/><circle cx="605.5" cy="234.1" r="1.75" class="dy"/><circle cx="715.7" cy="151.1" r="1.75" class="dk"/><circle cx="644.1" cy="168.5" r="1.75" class="dy"/><circle cx="672.4" cy="204.3" r="1.75" class="dy"/><circle cx="636.1" cy="191.9" r="1.75" class="dy"/><circle cx="779.7" cy="213.8" r="1.75" class="dr"/><circle cx="642.1" cy="176.9" r="1.75" class="dy"/><circle cx="754.3" cy="232.4" r="1.75" class="dr"/><circle cx="624.3" cy="129.5" r="1.75" class="dy"/><circle cx="721.0" cy="144.4" r="1.75" class="dy"/><circle cx="590.0" cy="238.3" r="1.75" class="dy"/><circle cx="667.9" cy="222.1" r="1.75" class="dy"/><circle cx="701.3" cy="278.8" r="1.75" class="dk"/><circle cx="756.7" cy="116.5" r="1.75" class="dk"/><circle cx="683.4" cy="140.8" r="1.75" class="dy"/><circle cx="630.1" cy="199.3" r="1.75" class="dy"/><circle cx="663.3" cy="133.1" r="1.75" class="dy"/><circle cx="741.5" cy="132.1" r="1.75" class="dy"/><circle cx="618.8" cy="225.6" r="1.75" class="dy"/><circle cx="728.9" cy="186.0" r="1.75" class="dk"/><circle cx="625.2" cy="192.8" r="1.75" class="dy"/></g><rect x="822.5" y="313.7" width="16.5" height="16.5" fill="#333"/><rect x="822.5" y="330.5" width="16.5" height="16.5" fill="#333"/><line x1="822.5" y1="330.2" x2="839" y2="330.2" stroke="#555" stroke-width="0.5"/><path d="M827.5 322 H834 M830.75 318.7 V325.3 M827.5 338.7 H834" stroke="#bbb" stroke-width="0.8"/><rect x="360" y="355.2" width="487" height="8.2" fill="#5c5c5c" opacity="0.92"/><text x="363.5" y="361.6" font-size="6.2" fill="#e6e6e6" font-family="Liberation Sans">Esri, USGS | Texas Parks &amp; Wildlife, Esri, HERE, Garmin, FAO, NOAA, USGS, EPA, NPS</text><text x="846" y="361.6" font-size="6.6" fill="#f0f0f0" font-family="Liberation Sans" text-anchor="end">Powered by Esri</text></svg>
<div class="t" style="left:-41.00px;width:600px;text-align:center;top:37.82px;font-size:18.4px;line-height:18.4px;color:#fff;font-weight:normal;letter-spacing:-0.55px;-webkit-text-stroke:0.3px #fff;">Total Crashes Shown</div>
<div class="t" style="left:-40.50px;width:600px;text-align:center;top:62.96px;font-size:59.0px;line-height:59.0px;color:#fff;font-weight:normal;letter-spacing:0px;-webkit-text-stroke:1.3px #fff;">9,360</div>
<div class="t" style="left:167.80px;top:144.11px;font-size:7.9px;line-height:7.9px;color:#e6e6e6;font-weight:normal;letter-spacing:-0.15px;">Day of the Week</div>
<svg style="left:0;top:0" width="1024" height="499" viewBox="0 0 1024 499"><line x1="192.6" y1="303.50" x2="195.6" y2="303.50" stroke="#6a6a6a" stroke-width="0.8"/><text x="189.10" y="305.70" font-size="6.3" fill="#d0d0d0" text-anchor="end" font-family="Liberation Sans">0</text><line x1="195.6" y1="269.98" x2="337.6" y2="269.98" stroke="#3e3e3e" stroke-width="0.8" stroke-dasharray="1.6 1.6"/><line x1="192.6" y1="269.98" x2="195.6" y2="269.98" stroke="#6a6a6a" stroke-width="0.8"/><text x="189.10" y="272.18" font-size="6.3" fill="#d0d0d0" text-anchor="end" font-family="Liberation Sans">500</text><line x1="195.6" y1="236.45" x2="337.6" y2="236.45" stroke="#3e3e3e" stroke-width="0.8" stroke-dasharray="1.6 1.6"/><line x1="192.6" y1="236.45" x2="195.6" y2="236.45" stroke="#6a6a6a" stroke-width="0.8"/><text x="189.10" y="238.65" font-size="6.3" fill="#d0d0d0" text-anchor="end" font-family="Liberation Sans">1k</text><line x1="195.6" y1="202.93" x2="337.6" y2="202.93" stroke="#3e3e3e" stroke-width="0.8" stroke-dasharray="1.6 1.6"/><line x1="192.6" y1="202.93" x2="195.6" y2="202.93" stroke="#6a6a6a" stroke-width="0.8"/><text x="189.10" y="205.12" font-size="6.3" fill="#d0d0d0" text-anchor="end" font-family="Liberation Sans">1.5k</text><line x1="195.6" y1="169.40" x2="337.6" y2="169.40" stroke="#3e3e3e" stroke-width="0.8" stroke-dasharray="1.6 1.6"/><line x1="192.6" y1="169.40" x2="195.6" y2="169.40" stroke="#6a6a6a" stroke-width="0.8"/><text x="189.10" y="171.60" font-size="6.3" fill="#d0d0d0" text-anchor="end" font-family="Liberation Sans">2k</text><line x1="215.89" y1="169.4" x2="215.89" y2="303.5" stroke="#3e3e3e" stroke-width="0.8" stroke-dasharray="1.6 1.6"/><line x1="236.17" y1="169.4" x2="236.17" y2="303.5" stroke="#3e3e3e" stroke-width="0.8" stroke-dasharray="1.6 1.6"/><line x1="256.46" y1="169.4" x2="256.46" y2="303.5" stroke="#3e3e3e" stroke-width="0.8" stroke-dasharray="1.6 1.6"/><line x1="276.74" y1="169.4" x2="276.74" y2="303.5" stroke="#3e3e3e" stroke-width="0.8" stroke-dasharray="1.6 1.6"/><line x1="297.03" y1="169.4" x2="297.03" y2="303.5" stroke="#3e3e3e" stroke-width="0.8" stroke-dasharray="1.6 1.6"/><line x1="317.31" y1="169.4" x2="317.31" y2="303.5" stroke="#3e3e3e" stroke-width="0.8" stroke-dasharray="1.6 1.6"/><line x1="337.6" y1="169.4" x2="337.6" y2="303.5" stroke="#3e3e3e" stroke-width="0.8" stroke-dasharray="1.6 1.6"/><rect x="197.19" y="231.09" width="17.10" height="72.41" fill="#8f4325" stroke="#a24a25" stroke-width="0.6"/><rect x="217.48" y="213.65" width="17.10" height="89.85" fill="#8f4325" stroke="#a24a25" stroke-width="0.6"/><rect x="237.76" y="210.97" width="17.10" height="92.53" fill="#8f4325" stroke="#a24a25" stroke-width="0.6"/><rect x="258.05" y="210.97" width="17.10" height="92.53" fill="#8f4325" stroke="#a24a25" stroke-width="0.6"/><rect x="278.34" y="209.63" width="17.10" height="93.87" fill="#8f4325" stroke="#a24a25" stroke-width="0.6"/><rect x="298.62" y="200.24" width="17.10" height="103.26" fill="#8f4325" stroke="#a24a25" stroke-width="0.6"/><rect x="318.91" y="215.66" width="17.10" height="87.84" fill="#8f4325" stroke="#a24a25" stroke-width="0.6"/><line x1="195.6" y1="169.4" x2="195.6" y2="303.5" stroke="#6a6a6a" stroke-width="0.8"/><line x1="192.6" y1="303.5" x2="337.6" y2="303.5" stroke="#6a6a6a" stroke-width="0.8"/><line x1="205.74" y1="303.5" x2="205.74" y2="306.0" stroke="#6a6a6a" stroke-width="0.8"/><text x="205.74" y="315.8" font-size="6.2" fill="#d0d0d0" text-anchor="middle" font-family="Liberation Sans">SUN</text><line x1="226.03" y1="303.5" x2="226.03" y2="306.0" stroke="#6a6a6a" stroke-width="0.8"/><text x="226.03" y="315.8" font-size="6.2" fill="#d0d0d0" text-anchor="middle" font-family="Liberation Sans">MON</text><line x1="246.31" y1="303.5" x2="246.31" y2="306.0" stroke="#6a6a6a" stroke-width="0.8"/><text x="246.31" y="315.8" font-size="6.2" fill="#d0d0d0" text-anchor="middle" font-family="Liberation Sans">TUE</text><line x1="266.60" y1="303.5" x2="266.60" y2="306.0" stroke="#6a6a6a" stroke-width="0.8"/><text x="266.60" y="315.8" font-size="6.2" fill="#d0d0d0" text-anchor="middle" font-family="Liberation Sans">WED</text><line x1="286.89" y1="303.5" x2="286.89" y2="306.0" stroke="#6a6a6a" stroke-width="0.8"/><text x="286.89" y="315.8" font-size="6.2" fill="#d0d0d0" text-anchor="middle" font-family="Liberation Sans">THU</text><line x1="307.17" y1="303.5" x2="307.17" y2="306.0" stroke="#6a6a6a" stroke-width="0.8"/><text x="307.17" y="315.8" font-size="6.2" fill="#d0d0d0" text-anchor="middle" font-family="Liberation Sans">FRI</text><line x1="327.46" y1="303.5" x2="327.46" y2="306.0" stroke="#6a6a6a" stroke-width="0.8"/><text x="327.46" y="315.8" font-size="6.2" fill="#d0d0d0" text-anchor="middle" font-family="Liberation Sans">SAT</text></svg>
<div class="t" style="left:167.80px;top:333.57px;font-size:7.6px;line-height:7.6px;color:#e6e6e6;font-weight:normal;letter-spacing:-0.12px;">Month of the Year</div>
<svg style="left:0;top:0" width="1024" height="499" viewBox="0 0 1024 499"><line x1="191.3" y1="484.20" x2="194.3" y2="484.20" stroke="#6a6a6a" stroke-width="0.8"/><text x="187.80" y="486.40" font-size="6.3" fill="#d0d0d0" text-anchor="end" font-family="Liberation Sans">0</text><line x1="194.3" y1="458.96" x2="337.9" y2="458.96" stroke="#3e3e3e" stroke-width="0.8" stroke-dasharray="1.6 1.6"/><line x1="191.3" y1="458.96" x2="194.3" y2="458.96" stroke="#6a6a6a" stroke-width="0.8"/><text x="187.80" y="461.16" font-size="6.3" fill="#d0d0d0" text-anchor="end" font-family="Liberation Sans">200</text><line x1="194.3" y1="433.72" x2="337.9" y2="433.72" stroke="#3e3e3e" stroke-width="0.8" stroke-dasharray="1.6 1.6"/><line x1="191.3" y1="433.72" x2="194.3" y2="433.72" stroke="#6a6a6a" stroke-width="0.8"/><text x="187.80" y="435.92" font-size="6.3" fill="#d0d0d0" text-anchor="end" font-family="Liberation Sans">400</text><line x1="194.3" y1="408.48" x2="337.9" y2="408.48" stroke="#3e3e3e" stroke-width="0.8" stroke-dasharray="1.6 1.6"/><line x1="191.3" y1="408.48" x2="194.3" y2="408.48" stroke="#6a6a6a" stroke-width="0.8"/><text x="187.80" y="410.68" font-size="6.3" fill="#d0d0d0" text-anchor="end" font-family="Liberation Sans">600</text><line x1="194.3" y1="383.24" x2="337.9" y2="383.24" stroke="#3e3e3e" stroke-width="0.8" stroke-dasharray="1.6 1.6"/><line x1="191.3" y1="383.24" x2="194.3" y2="383.24" stroke="#6a6a6a" stroke-width="0.8"/><text x="187.80" y="385.44" font-size="6.3" fill="#d0d0d0" text-anchor="end" font-family="Liberation Sans">800</text><line x1="194.3" y1="358.00" x2="337.9" y2="358.00" stroke="#3e3e3e" stroke-width="0.8" stroke-dasharray="1.6 1.6"/><line x1="191.3" y1="358.00" x2="194.3" y2="358.00" stroke="#6a6a6a" stroke-width="0.8"/><text x="187.80" y="360.20" font-size="6.3" fill="#d0d0d0" text-anchor="end" font-family="Liberation Sans">1k</text><line x1="230.20" y1="358.0" x2="230.20" y2="484.2" stroke="#3e3e3e" stroke-width="0.8" stroke-dasharray="1.6 1.6"/><line x1="266.10" y1="358.0" x2="266.10" y2="484.2" stroke="#3e3e3e" stroke-width="0.8" stroke-dasharray="1.6 1.6"/><line x1="302.00" y1="358.0" x2="302.00" y2="484.2" stroke="#3e3e3e" stroke-width="0.8" stroke-dasharray="1.6 1.6"/><line x1="337.9" y1="358.0" x2="337.9" y2="484.2" stroke="#3e3e3e" stroke-width="0.8" stroke-dasharray="1.6 1.6"/><rect x="194.83" y="411.13" width="10.90" height="73.07" fill="#567b3b" stroke="none" stroke-width="0.6"/><rect x="206.80" y="412.64" width="10.90" height="71.56" fill="#567b3b" stroke="none" stroke-width="0.6"/><rect x="218.77" y="382.74" width="10.90" height="101.46" fill="#567b3b" stroke="none" stroke-width="0.6"/><rect x="230.73" y="379.71" width="10.90" height="104.49" fill="#567b3b" stroke="none" stroke-width="0.6"/><rect x="242.70" y="380.59" width="10.90" height="103.61" fill="#567b3b" stroke="none" stroke-width="0.6"/><rect x="254.67" y="371.50" width="10.90" height="112.70" fill="#567b3b" stroke="none" stroke-width="0.6"/><rect x="266.63" y="368.47" width="10.90" height="115.73" fill="#567b3b" stroke="none" stroke-width="0.6"/><rect x="278.60" y="381.22" width="10.90" height="102.98" fill="#567b3b" stroke="none" stroke-width="0.6"/><rect x="290.57" y="367.47" width="10.90" height="116.73" fill="#567b3b" stroke="none" stroke-width="0.6"/><rect x="302.53" y="376.55" width="10.90" height="107.65" fill="#567b3b" stroke="none" stroke-width="0.6"/><rect x="314.50" y="388.54" width="10.90" height="95.66" fill="#567b3b" stroke="none" stroke-width="0.6"/><rect x="326.47" y="399.52" width="10.90" height="84.68" fill="#567b3b" stroke="none" stroke-width="0.6"/><line x1="194.3" y1="358.0" x2="194.3" y2="484.2" stroke="#6a6a6a" stroke-width="0.8"/><line x1="191.3" y1="484.2" x2="337.9" y2="484.2" stroke="#6a6a6a" stroke-width="0.8"/><line x1="200.28" y1="484.2" x2="200.28" y2="486.7" stroke="#6a6a6a" stroke-width="0.8"/><text x="200.28" y="496.5" font-size="6.0" fill="#d0d0d0" text-anchor="middle" font-family="Liberation Sans">JAN</text><line x1="236.18" y1="484.2" x2="236.18" y2="486.7" stroke="#6a6a6a" stroke-width="0.8"/><text x="236.18" y="496.5" font-size="6.0" fill="#d0d0d0" text-anchor="middle" font-family="Liberation Sans">APR</text><line x1="272.08" y1="484.2" x2="272.08" y2="486.7" stroke="#6a6a6a" stroke-width="0.8"/><text x="272.08" y="496.5" font-size="6.0" fill="#d0d0d0" text-anchor="middle" font-family="Liberation Sans">JUL</text><line x1="307.98" y1="484.2" x2="307.98" y2="486.7" stroke="#6a6a6a" stroke-width="0.8"/><text x="307.98" y="496.5" font-size="6.0" fill="#d0d0d0" text-anchor="middle" font-family="Liberation Sans">OCT</text></svg>
<div class="t" style="left:364.80px;top:374.77px;font-size:7.6px;line-height:7.6px;color:#e6e6e6;font-weight:normal;letter-spacing:-0.12px;">Hour of the Day</div>
<svg style="left:0;top:0" width="1024" height="499" viewBox="0 0 1024 499"><line x1="389.5" y1="482.50" x2="392.5" y2="482.50" stroke="#6a6a6a" stroke-width="0.8"/><text x="386.00" y="484.70" font-size="6.3" fill="#d0d0d0" text-anchor="end" font-family="Liberation Sans">0</text><line x1="392.5" y1="461.75" x2="829.0" y2="461.75" stroke="#3e3e3e" stroke-width="0.8" stroke-dasharray="1.6 1.6"/><line x1="389.5" y1="461.75" x2="392.5" y2="461.75" stroke="#6a6a6a" stroke-width="0.8"/><text x="386.00" y="463.95" font-size="6.3" fill="#d0d0d0" text-anchor="end" font-family="Liberation Sans">200</text><line x1="392.5" y1="441.00" x2="829.0" y2="441.00" stroke="#3e3e3e" stroke-width="0.8" stroke-dasharray="1.6 1.6"/><line x1="389.5" y1="441.00" x2="392.5" y2="441.00" stroke="#6a6a6a" stroke-width="0.8"/><text x="386.00" y="443.20" font-size="6.3" fill="#d0d0d0" text-anchor="end" font-family="Liberation Sans">400</text><line x1="392.5" y1="420.25" x2="829.0" y2="420.25" stroke="#3e3e3e" stroke-width="0.8" stroke-dasharray="1.6 1.6"/><line x1="389.5" y1="420.25" x2="392.5" y2="420.25" stroke="#6a6a6a" stroke-width="0.8"/><text x="386.00" y="422.45" font-size="6.3" fill="#d0d0d0" text-anchor="end" font-family="Liberation Sans">600</text><line x1="392.5" y1="399.50" x2="829.0" y2="399.50" stroke="#3e3e3e" stroke-width="0.8" stroke-dasharray="1.6 1.6"/><line x1="389.5" y1="399.50" x2="392.5" y2="399.50" stroke="#6a6a6a" stroke-width="0.8"/><text x="386.00" y="401.70" font-size="6.3" fill="#d0d0d0" text-anchor="end" font-family="Liberation Sans">800</text><line x1="428.88" y1="399.5" x2="428.88" y2="482.5" stroke="#3e3e3e" stroke-width="0.8" stroke-dasharray="1.6 1.6"/><line x1="465.25" y1="399.5" x2="465.25" y2="482.5" stroke="#3e3e3e" stroke-width="0.8" stroke-dasharray="1.6 1.6"/><line x1="501.62" y1="399.5" x2="501.62" y2="482.5" stroke="#3e3e3e" stroke-width="0.8" stroke-dasharray="1.6 1.6"/><line x1="538.00" y1="399.5" x2="538.00" y2="482.5" stroke="#3e3e3e" stroke-width="0.8" stroke-dasharray="1.6 1.6"/><line x1="574.38" y1="399.5" x2="574.38" y2="482.5" stroke="#3e3e3e" stroke-width="0.8" stroke-dasharray="1.6 1.6"/><line x1="610.75" y1="399.5" x2="610.75" y2="482.5" stroke="#3e3e3e" stroke-width="0.8" stroke-dasharray="1.6 1.6"/><line x1="647.12" y1="399.5" x2="647.12" y2="482.5" stroke="#3e3e3e" stroke-width="0.8" stroke-dasharray="1.6 1.6"/><line x1="683.50" y1="399.5" x2="683.50" y2="482.5" stroke="#3e3e3e" stroke-width="0.8" stroke-dasharray="1.6 1.6"/><line x1="719.88" y1="399.5" x2="719.88" y2="482.5" stroke="#3e3e3e" stroke-width="0.8" stroke-dasharray="1.6 1.6"/><line x1="756.25" y1="399.5" x2="756.25" y2="482.5" stroke="#3e3e3e" stroke-width="0.8" stroke-dasharray="1.6 1.6"/><line x1="792.62" y1="399.5" x2="792.62" y2="482.5" stroke="#3e3e3e" stroke-width="0.8" stroke-dasharray="1.6 1.6"/><line x1="829.0" y1="399.5" x2="829.0" y2="482.5" stroke="#3e3e3e" stroke-width="0.8" stroke-dasharray="1.6 1.6"/><rect x="393.94" y="448.47" width="15.30" height="34.03" fill="#0e5580" stroke="#11609a" stroke-width="0.6"/><rect x="412.13" y="464.34" width="15.30" height="18.16" fill="#0e5580" stroke="#11609a" stroke-width="0.6"/><rect x="430.32" y="463.82" width="15.30" height="18.68" fill="#0e5580" stroke="#11609a" stroke-width="0.6"/><rect x="448.51" y="469.63" width="15.30" height="12.87" fill="#0e5580" stroke="#11609a" stroke-width="0.6"/><rect x="466.69" y="468.91" width="15.30" height="13.59" fill="#0e5580" stroke="#11609a" stroke-width="0.6"/><rect x="484.88" y="468.91" width="15.30" height="13.59" fill="#0e5580" stroke="#11609a" stroke-width="0.6"/><rect x="503.07" y="455.73" width="15.30" height="26.77" fill="#0e5580" stroke="#11609a" stroke-width="0.6"/><rect x="521.26" y="440.27" width="15.30" height="42.23" fill="#0e5580" stroke="#11609a" stroke-width="0.6"/><rect x="539.44" y="442.35" width="15.30" height="40.15" fill="#0e5580" stroke="#11609a" stroke-width="0.6"/><rect x="557.63" y="454.80" width="15.30" height="27.70" fill="#0e5580" stroke="#11609a" stroke-width="0.6"/><rect x="575.82" y="443.39" width="15.30" height="39.11" fill="#0e5580" stroke="#11609a" stroke-width="0.6"/><rect x="594.01" y="438.10" width="15.30" height="44.41" fill="#0e5580" stroke="#11609a" stroke-width="0.6"/><rect x="612.19" y="431.35" width="15.30" height="51.15" fill="#0e5580" stroke="#11609a" stroke-width="0.6"/><rect x="630.38" y="424.50" width="15.30" height="58.00" fill="#0e5580" stroke="#11609a" stroke-width="0.6"/><rect x="648.57" y="420.77" width="15.30" height="61.73" fill="#0e5580" stroke="#11609a" stroke-width="0.6"/><rect x="666.76" y="408.22" width="15.30" height="74.28" fill="#0e5580" stroke="#11609a" stroke-width="0.6"/><rect x="684.94" y="404.89" width="15.30" height="77.61" fill="#0e5580" stroke="#11609a" stroke-width="0.6"/><rect x="703.13" y="410.39" width="15.30" height="72.11" fill="#0e5580" stroke="#11609a" stroke-width="0.6"/><rect x="721.32" y="414.96" width="15.30" height="67.54" fill="#0e5580" stroke="#11609a" stroke-width="0.6"/><rect x="739.51" y="431.97" width="15.30" height="50.53" fill="#0e5580" stroke="#11609a" stroke-width="0.6"/><rect x="757.69" y="440.58" width="15.30" height="41.91" fill="#0e5580" stroke="#11609a" stroke-width="0.6"/><rect x="775.88" y="442.04" width="15.30" height="40.46" fill="#0e5580" stroke="#11609a" stroke-width="0.6"/><rect x="794.07" y="452.93" width="15.30" height="29.57" fill="#0e5580" stroke="#11609a" stroke-width="0.6"/><rect x="812.26" y="458.85" width="15.30" height="23.66" fill="#0e5580" stroke="#11609a" stroke-width="0.6"/><line x1="392.5" y1="399.5" x2="392.5" y2="482.5" stroke="#6a6a6a" stroke-width="0.8"/><line x1="389.5" y1="482.5" x2="829.0" y2="482.5" stroke="#6a6a6a" stroke-width="0.8"/><line x1="401.59" y1="482.5" x2="401.59" y2="485.0" stroke="#6a6a6a" stroke-width="0.8"/><text x="401.59" y="493" font-size="4.6" fill="#d0d0d0" text-anchor="middle" font-family="Liberation Sans">00:00 -</text><text x="401.59" y="498.5" font-size="4.6" fill="#d0d0d0" text-anchor="middle" font-family="Liberation Sans">00:59</text><line x1="437.97" y1="482.5" x2="437.97" y2="485.0" stroke="#6a6a6a" stroke-width="0.8"/><text x="437.97" y="493" font-size="4.6" fill="#d0d0d0" text-anchor="middle" font-family="Liberation Sans">02:00 -</text><text x="437.97" y="498.5" font-size="4.6" fill="#d0d0d0" text-anchor="middle" font-family="Liberation Sans">02:59</text><line x1="474.34" y1="482.5" x2="474.34" y2="485.0" stroke="#6a6a6a" stroke-width="0.8"/><text x="474.34" y="493" font-size="4.6" fill="#d0d0d0" text-anchor="middle" font-family="Liberation Sans">04:00 -</text><text x="474.34" y="498.5" font-size="4.6" fill="#d0d0d0" text-anchor="middle" font-family="Liberation Sans">04:59</text><line x1="510.72" y1="482.5" x2="510.72" y2="485.0" stroke="#6a6a6a" stroke-width="0.8"/><text x="510.72" y="493" font-size="4.6" fill="#d0d0d0" text-anchor="middle" font-family="Liberation Sans">06:00 -</text><text x="510.72" y="498.5" font-size="4.6" fill="#d0d0d0" text-anchor="middle" font-family="Liberation Sans">06:59</text><line x1="547.09" y1="482.5" x2="547.09" y2="485.0" stroke="#6a6a6a" stroke-width="0.8"/><text x="547.09" y="493" font-size="4.6" fill="#d0d0d0" text-anchor="middle" font-family="Liberation Sans">08:00 -</text><text x="547.09" y="498.5" font-size="4.6" fill="#d0d0d0" text-anchor="middle" font-family="Liberation Sans">08:59</text><line x1="583.47" y1="482.5" x2="583.47" y2="485.0" stroke="#6a6a6a" stroke-width="0.8"/><text x="583.47" y="493" font-size="4.6" fill="#d0d0d0" text-anchor="middle" font-family="Liberation Sans">10:00 -</text><text x="583.47" y="498.5" font-size="4.6" fill="#d0d0d0" text-anchor="middle" font-family="Liberation Sans">10:59</text><line x1="619.84" y1="482.5" x2="619.84" y2="485.0" stroke="#6a6a6a" stroke-width="0.8"/><text x="619.84" y="493" font-size="4.6" fill="#d0d0d0" text-anchor="middle" font-family="Liberation Sans">12:00 -</text><text x="619.84" y="498.5" font-size="4.6" fill="#d0d0d0" text-anchor="middle" font-family="Liberation Sans">12:59</text><line x1="656.22" y1="482.5" x2="656.22" y2="485.0" stroke="#6a6a6a" stroke-width="0.8"/><text x="656.22" y="493" font-size="4.6" fill="#d0d0d0" text-anchor="middle" font-family="Liberation Sans">14:00 -</text><text x="656.22" y="498.5" font-size="4.6" fill="#d0d0d0" text-anchor="middle" font-family="Liberation Sans">14:59</text><line x1="692.59" y1="482.5" x2="692.59" y2="485.0" stroke="#6a6a6a" stroke-width="0.8"/><text x="692.59" y="493" font-size="4.6" fill="#d0d0d0" text-anchor="middle" font-family="Liberation Sans">16:00 -</text><text x="692.59" y="498.5" font-size="4.6" fill="#d0d0d0" text-anchor="middle" font-family="Liberation Sans">16:59</text><line x1="728.97" y1="482.5" x2="728.97" y2="485.0" stroke="#6a6a6a" stroke-width="0.8"/><text x="728.97" y="493" font-size="4.6" fill="#d0d0d0" text-anchor="middle" font-family="Liberation Sans">18:00 -</text><text x="728.97" y="498.5" font-size="4.6" fill="#d0d0d0" text-anchor="middle" font-family="Liberation Sans">18:59</text><line x1="765.34" y1="482.5" x2="765.34" y2="485.0" stroke="#6a6a6a" stroke-width="0.8"/><text x="765.34" y="493" font-size="4.6" fill="#d0d0d0" text-anchor="middle" font-family="Liberation Sans">20:00 -</text><text x="765.34" y="498.5" font-size="4.6" fill="#d0d0d0" text-anchor="middle" font-family="Liberation Sans">20:59</text><line x1="801.72" y1="482.5" x2="801.72" y2="485.0" stroke="#6a6a6a" stroke-width="0.8"/><text x="801.72" y="493" font-size="4.6" fill="#d0d0d0" text-anchor="middle" font-family="Liberation Sans">22:00 -</text><text x="801.72" y="498.5" font-size="4.6" fill="#d0d0d0" text-anchor="middle" font-family="Liberation Sans">22:59</text></svg>
<div class="t" style="left:637.00px;width:600px;text-align:center;top:35.73px;font-size:17.8px;line-height:17.8px;color:#ffffff;font-weight:normal;letter-spacing:0.1px;">Persons</div>
<div class="t" style="left:637.00px;width:600px;text-align:center;top:56.55px;font-size:19.2px;line-height:19.2px;color:#ffffff;font-weight:normal;letter-spacing:0.1px;-webkit-text-stroke:0.55px #fff;">Killed</div>
<div class="t" style="left:637.50px;width:600px;text-align:center;top:82.63px;font-size:38.0px;line-height:38.0px;color:#ffffff;font-weight:normal;letter-spacing:0.3px;-webkit-text-stroke:0.75px #fff;">762</div>
<div class="t" style="left:637.00px;width:600px;text-align:center;top:130.59px;font-size:18.2px;line-height:18.2px;color:#ffffff;font-weight:normal;letter-spacing:-0.1px;">Unrestrained</div>
<div class="t" style="left:637.00px;width:600px;text-align:center;top:152.19px;font-size:18.2px;line-height:18.2px;color:#ffffff;font-weight:normal;letter-spacing:-0.2px;-webkit-text-stroke:0.55px #fff;">Persons Killed</div>
<div class="t" style="left:638.20px;width:600px;text-align:center;top:176.75px;font-size:35.5px;line-height:35.5px;color:#ffffff;font-weight:normal;letter-spacing:2.6px;-webkit-text-stroke:0.75px #fff;">259</div>
<div class="t" style="left:637.00px;width:600px;text-align:center;top:223.14px;font-size:18.5px;line-height:18.5px;color:#ffffff;font-weight:normal;letter-spacing:-0.45px;">Persons Injured</div>
<div class="t" style="left:637.00px;width:600px;text-align:center;top:247.16px;font-size:10.8px;line-height:10.8px;color:#ffffff;font-weight:bold;letter-spacing:0.15px;">Serious and Minor Injuries</div>
<div class="t" style="left:637.00px;width:600px;text-align:center;top:263.88px;font-size:37.0px;line-height:37.0px;color:#ffffff;font-weight:normal;letter-spacing:0.2px;-webkit-text-stroke:0.75px #fff;">11,619</div>
<div class="t" style="left:637.00px;width:600px;text-align:center;top:315.09px;font-size:18.8px;line-height:18.8px;color:#ffffff;font-weight:normal;letter-spacing:-0.1px;">Unrestrained</div>
<div class="t" style="left:637.00px;width:600px;text-align:center;top:337.49px;font-size:18.8px;line-height:18.8px;color:#ffffff;font-weight:normal;letter-spacing:-0.25px;-webkit-text-stroke:0.55px #fff;">Persons Injured</div>
<div class="t" style="left:637.00px;width:600px;text-align:center;top:362.83px;font-size:38.0px;line-height:38.0px;color:#ffffff;font-weight:normal;letter-spacing:0.2px;-webkit-text-stroke:0.75px #fff;">1,339</div>
<div class="t" style="left:860.50px;top:414.40px;font-size:7.8px;line-height:7.8px;color:#f4f4f4;font-weight:normal;letter-spacing:-0.15px;-webkit-text-stroke:0.2px #f4f4f4;">Crash Injury Severity</div>
<div class="t" style="left:864.00px;top:432.37px;font-size:7.0px;line-height:7.0px;color:#eeeeee;font-weight:normal;letter-spacing:-0.1px;">SEVERITY</div>
<svg style="left:866px;top:447.1px" width="8" height="8"><circle cx="4" cy="4" r="1.9" fill="#111111" stroke="#222" stroke-width="0.5"/></svg>
<div class="t" style="left:877.00px;top:448.00px;font-size:6.5px;line-height:6.5px;color:#e8e8e8;font-weight:normal;letter-spacing:0px;">Fatal</div>
<svg style="left:866px;top:461.0px" width="8" height="8"><circle cx="4" cy="4" r="1.9" fill="#dd1111" stroke="#222" stroke-width="0.5"/></svg>
<div class="t" style="left:877.00px;top:461.90px;font-size:6.5px;line-height:6.5px;color:#e8e8e8;font-weight:normal;letter-spacing:0px;">Serious</div>
<svg style="left:866px;top:475.6px" width="8" height="8"><circle cx="4" cy="4" r="1.9" fill="#f0e000" stroke="#222" stroke-width="0.5"/></svg>
<div class="t" style="left:877.00px;top:476.50px;font-size:6.5px;line-height:6.5px;color:#e8e8e8;font-weight:normal;letter-spacing:0px;">Minor</div>
</body></html>
